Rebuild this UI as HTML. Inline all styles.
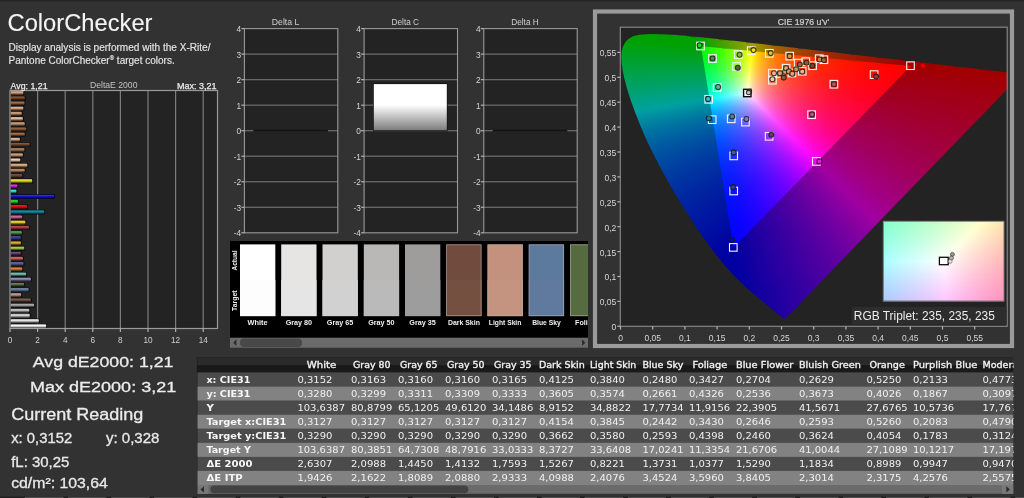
<!DOCTYPE html><html><head><meta charset="utf-8"><title>ColorChecker</title>
<style>html,body{margin:0;padding:0;background:#323232;overflow:hidden}svg{display:block;will-change:transform;font-family:"Liberation Sans", sans-serif}</style></head><body>
<svg width="1024" height="498" viewBox="0 0 1024 498" shape-rendering="auto">
<defs>
<linearGradient id="bsh" x1="0" y1="0" x2="0" y2="1"><stop offset="0" stop-color="#000" stop-opacity=".45"/><stop offset=".3" stop-color="#fff" stop-opacity=".08"/><stop offset=".5" stop-color="#000" stop-opacity="0"/><stop offset="1" stop-color="#000" stop-opacity=".75"/></linearGradient>
<linearGradient id="dc" x1="0" y1="0" x2="0" y2="1"><stop offset="0" stop-color="#fff"/><stop offset=".45" stop-color="#fff"/><stop offset="1" stop-color="#7c7c7c"/></linearGradient>
<linearGradient id="hdr" x1="0" y1="0" x2="0" y2="1"><stop offset="0" stop-color="#222"/><stop offset=".08" stop-color="#2a2a2a"/><stop offset=".5" stop-color="#2b2b2b"/><stop offset=".56" stop-color="#171717"/><stop offset="1" stop-color="#1b1b1b"/></linearGradient>
<clipPath id="plc"><rect x="620.3" y="27.2" width="386.9" height="299.1"/></clipPath>
<clipPath id="loc"><path d="M785.9 318.0L785.9 318.1L785.9 318.1L785.8 318.1L785.7 318.2L785.6 318.2L785.5 318.3L785.3 318.3L785.2 318.4L785.0 318.4L784.7 318.4L784.5 318.4L784.2 318.3L783.9 318.3L783.6 318.2L783.3 318.1L782.9 317.9L782.5 317.7L782.1 317.4L781.7 317.1L781.2 316.8L780.7 316.4L780.2 316.0L779.6 315.5L779.0 315.0L778.3 314.5L777.6 313.9L776.9 313.3L776.0 312.5L775.1 311.8L774.1 310.9L772.9 309.9L771.6 308.9L770.2 307.7L768.8 306.5L767.2 305.2L765.6 303.9L764.0 302.6L762.5 301.3L761.0 300.1L759.6 298.9L758.4 297.9L757.3 297.0L756.3 296.1L755.3 295.3L754.3 294.5L753.4 293.7L752.5 292.9L751.5 292.0L750.4 291.1L749.2 290.1L748.0 289.0L746.8 287.9L745.5 286.7L744.1 285.5L742.8 284.2L741.4 282.9L740.0 281.6L738.6 280.2L737.2 278.8L735.7 277.4L734.2 275.8L732.6 274.2L731.0 272.4L729.3 270.6L727.5 268.6L725.7 266.4L723.8 264.2L721.8 261.8L719.7 259.3L717.6 256.7L715.5 253.9L713.3 251.1L711.0 248.2L708.8 245.1L706.5 242.0L704.1 238.7L701.7 235.3L699.3 231.8L696.8 228.2L694.4 224.5L691.9 220.7L689.3 216.8L686.8 212.7L684.2 208.6L681.6 204.4L679.0 200.1L676.4 195.8L673.8 191.4L671.2 187.0L668.7 182.6L666.1 178.1L663.6 173.6L661.1 169.1L658.7 164.6L656.4 160.1L654.1 155.6L651.9 151.2L649.7 146.8L647.7 142.4L645.7 138.0L643.8 133.7L642.0 129.5L640.3 125.4L638.6 121.3L637.1 117.3L635.5 113.4L634.1 109.6L632.8 105.9L631.5 102.4L630.3 98.9L629.2 95.5L628.2 92.3L627.2 89.2L626.4 86.2L625.6 83.4L624.9 80.6L624.2 78.0L623.7 75.5L623.2 73.1L622.7 70.8L622.4 68.6L622.1 66.5L621.8 64.5L621.6 62.6L621.5 60.8L621.4 59.0L621.4 57.4L621.4 55.8L621.5 54.3L621.6 52.8L621.8 51.5L622.1 50.1L622.3 48.9L622.7 47.7L623.1 46.6L623.5 45.5L624.0 44.5L624.5 43.5L625.1 42.6L625.7 41.8L626.3 41.0L627.0 40.3L627.7 39.6L628.4 39.0L629.2 38.4L630.0 37.9L630.8 37.4L631.6 37.0L632.5 36.6L633.4 36.2L634.4 35.9L635.4 35.6L636.4 35.4L637.5 35.2L638.5 35.0L639.6 34.8L640.7 34.7L641.7 34.6L642.7 34.5L643.7 34.4L644.6 34.3L645.5 34.3L646.5 34.2L647.4 34.2L648.5 34.1L649.7 34.1L651.1 34.1L652.7 34.1L654.6 34.1L656.6 34.1L658.8 34.2L661.2 34.2L663.7 34.3L666.3 34.4L668.9 34.5L671.5 34.7L674.1 34.8L676.8 35.0L679.4 35.2L682.0 35.4L684.7 35.6L687.4 35.9L690.2 36.2L693.1 36.4L696.0 36.7L699.1 37.0L702.2 37.3L705.4 37.7L708.7 38.0L712.1 38.4L715.5 38.8L719.1 39.2L722.7 39.6L726.5 40.0L730.3 40.4L734.3 40.8L738.3 41.3L742.4 41.8L746.6 42.3L751.0 42.8L755.4 43.3L760.0 43.8L764.6 44.3L769.4 44.9L774.2 45.4L779.2 46.0L784.3 46.6L789.4 47.2L794.7 47.8L800.1 48.4L805.6 49.1L811.2 49.7L816.8 50.4L822.5 51.0L828.2 51.7L834.0 52.3L839.8 53.0L845.6 53.7L851.5 54.4L857.3 55.0L863.1 55.7L868.9 56.4L874.6 57.1L880.3 57.7L886.0 58.4L891.5 59.0L897.0 59.6L902.4 60.2L907.7 60.9L912.8 61.4L917.8 62.0L922.6 62.6L927.3 63.1L931.9 63.6L936.2 64.2L940.4 64.6L944.4 65.1L948.3 65.6L952.0 66.0L955.5 66.4L958.9 66.8L962.1 67.2L965.2 67.5L968.2 67.9L971.0 68.2L973.7 68.5L976.3 68.8L978.9 69.1L981.4 69.4L983.7 69.7L986.0 69.9L988.3 70.2L990.4 70.4L992.3 70.7L994.2 70.9L996.0 71.1L997.6 71.3L999.1 71.4L1000.5 71.6L1001.9 71.8L1003.2 71.9L1004.5 72.1L1005.9 72.2L1007.2 72.4L1008.6 72.5L1010.1 72.7L1011.7 72.9L1013.4 73.1L1015.3 73.3L1017.3 73.5L1019.5 73.8L1022.0 74.1Z"/></clipPath>
<linearGradient id="o0" gradientUnits="userSpaceOnUse" x1="632" x2="690" y1="0" y2="0"><stop offset="0.000" stop-color="#00a100"/><stop offset="1.000" stop-color="#00a100"/></linearGradient>
<linearGradient id="o1" gradientUnits="userSpaceOnUse" x1="627" x2="719" y1="0" y2="0"><stop offset="0.000" stop-color="#00a100"/><stop offset="0.783" stop-color="#00a100"/><stop offset="1.000" stop-color="#3aa100"/></linearGradient>
<linearGradient id="o2" gradientUnits="userSpaceOnUse" x1="624" x2="746" y1="0" y2="0"><stop offset="0.000" stop-color="#00a104"/><stop offset="0.139" stop-color="#00a100"/><stop offset="0.623" stop-color="#01a100"/><stop offset="1.000" stop-color="#8ba100"/></linearGradient>
<linearGradient id="o3" gradientUnits="userSpaceOnUse" x1="622" x2="772" y1="0" y2="0"><stop offset="0.000" stop-color="#00a10c"/><stop offset="0.333" stop-color="#00a100"/><stop offset="0.520" stop-color="#00a100"/><stop offset="0.753" stop-color="#69a100"/><stop offset="0.867" stop-color="#a0a100"/><stop offset="0.933" stop-color="#a18400"/><stop offset="1.000" stop-color="#a16e00"/></linearGradient>
<linearGradient id="o4" gradientUnits="userSpaceOnUse" x1="621" x2="798" y1="0" y2="0"><stop offset="0.000" stop-color="#00a112"/><stop offset="0.446" stop-color="#00a102"/><stop offset="0.633" stop-color="#62a100"/><stop offset="0.740" stop-color="#a1a000"/><stop offset="0.791" stop-color="#a18500"/><stop offset="0.853" stop-color="#a16d00"/><stop offset="0.921" stop-color="#a15900"/><stop offset="1.000" stop-color="#a14700"/></linearGradient>
<linearGradient id="o5" gradientUnits="userSpaceOnUse" x1="620" x2="824" y1="0" y2="0"><stop offset="0.000" stop-color="#00a118"/><stop offset="0.397" stop-color="#00a10b"/><stop offset="0.569" stop-color="#6ca100"/><stop offset="0.642" stop-color="#9ea100"/><stop offset="0.716" stop-color="#a17800"/><stop offset="0.789" stop-color="#a15c00"/><stop offset="0.882" stop-color="#a14400"/><stop offset="1.000" stop-color="#a12f00"/></linearGradient>
<linearGradient id="o6" gradientUnits="userSpaceOnUse" x1="620" x2="850" y1="0" y2="0"><stop offset="0.000" stop-color="#00a11e"/><stop offset="0.352" stop-color="#00a114"/><stop offset="0.491" stop-color="#62a10d"/><stop offset="0.570" stop-color="#9fa108"/><stop offset="0.643" stop-color="#a17200"/><stop offset="0.730" stop-color="#a15100"/><stop offset="0.848" stop-color="#a13500"/><stop offset="1.000" stop-color="#a11e00"/></linearGradient>
<linearGradient id="o7" gradientUnits="userSpaceOnUse" x1="620" x2="875" y1="0" y2="0"><stop offset="0.000" stop-color="#00a124"/><stop offset="0.322" stop-color="#00a11c"/><stop offset="0.451" stop-color="#69a117"/><stop offset="0.514" stop-color="#a0a113"/><stop offset="0.549" stop-color="#a1850e"/><stop offset="0.588" stop-color="#a16d09"/><stop offset="0.635" stop-color="#a15805"/><stop offset="0.686" stop-color="#a14701"/><stop offset="0.820" stop-color="#a12900"/><stop offset="1.000" stop-color="#a11100"/></linearGradient>
<linearGradient id="o8" gradientUnits="userSpaceOnUse" x1="620" x2="901" y1="0" y2="0"><stop offset="0.000" stop-color="#00a12a"/><stop offset="0.292" stop-color="#00a124"/><stop offset="0.402" stop-color="#62a121"/><stop offset="0.466" stop-color="#a1a01e"/><stop offset="0.502" stop-color="#a18117"/><stop offset="0.541" stop-color="#a16811"/><stop offset="0.587" stop-color="#a1530c"/><stop offset="0.644" stop-color="#a13f07"/><stop offset="0.790" stop-color="#a12000"/><stop offset="1.000" stop-color="#a10600"/></linearGradient>
<linearGradient id="o9" gradientUnits="userSpaceOnUse" x1="620" x2="927" y1="0" y2="0"><stop offset="0.000" stop-color="#00a130"/><stop offset="0.270" stop-color="#00a12d"/><stop offset="0.427" stop-color="#a19f29"/><stop offset="0.459" stop-color="#a18020"/><stop offset="0.502" stop-color="#a16318"/><stop offset="0.550" stop-color="#a14c11"/><stop offset="0.612" stop-color="#a1370b"/><stop offset="0.691" stop-color="#a12506"/><stop offset="0.785" stop-color="#a11501"/><stop offset="0.961" stop-color="#a10000"/><stop offset="1.000" stop-color="#a10000"/></linearGradient>
<linearGradient id="o10" gradientUnits="userSpaceOnUse" x1="620" x2="953" y1="0" y2="0"><stop offset="0.000" stop-color="#00a136"/><stop offset="0.249" stop-color="#00a135"/><stop offset="0.339" stop-color="#62a134"/><stop offset="0.390" stop-color="#a0a134"/><stop offset="0.393" stop-color="#a19e33"/><stop offset="0.429" stop-color="#a17927"/><stop offset="0.471" stop-color="#a15d1d"/><stop offset="0.526" stop-color="#a14415"/><stop offset="0.592" stop-color="#a12f0e"/><stop offset="0.706" stop-color="#a11706"/><stop offset="0.877" stop-color="#a10000"/><stop offset="1.000" stop-color="#a10000"/></linearGradient>
<linearGradient id="o11" gradientUnits="userSpaceOnUse" x1="620" x2="979" y1="0" y2="0"><stop offset="0.000" stop-color="#00a13c"/><stop offset="0.234" stop-color="#00a13d"/><stop offset="0.320" stop-color="#69a13e"/><stop offset="0.362" stop-color="#a1a13e"/><stop offset="0.398" stop-color="#a1782f"/><stop offset="0.443" stop-color="#a15823"/><stop offset="0.499" stop-color="#a13e19"/><stop offset="0.571" stop-color="#a12811"/><stop offset="0.663" stop-color="#a1150a"/><stop offset="0.805" stop-color="#a10002"/><stop offset="1.000" stop-color="#a10000"/></linearGradient>
<linearGradient id="o12" gradientUnits="userSpaceOnUse" x1="621" x2="1005" y1="0" y2="0"><stop offset="0.000" stop-color="#00a142"/><stop offset="0.216" stop-color="#00a146"/><stop offset="0.289" stop-color="#5fa148"/><stop offset="0.336" stop-color="#a1a049"/><stop offset="0.354" stop-color="#a1873e"/><stop offset="0.372" stop-color="#a17436"/><stop offset="0.417" stop-color="#a15428"/><stop offset="0.477" stop-color="#a1381c"/><stop offset="0.552" stop-color="#a12113"/><stop offset="0.742" stop-color="#a10006"/><stop offset="0.883" stop-color="#a10000"/><stop offset="1.000" stop-color="#a10000"/></linearGradient>
<linearGradient id="o13" gradientUnits="userSpaceOnUse" x1="621" x2="1007" y1="0" y2="0"><stop offset="0.000" stop-color="#00a148"/><stop offset="0.218" stop-color="#00a14e"/><stop offset="0.334" stop-color="#a19e53"/><stop offset="0.352" stop-color="#a18647"/><stop offset="0.371" stop-color="#a1733e"/><stop offset="0.415" stop-color="#a1522f"/><stop offset="0.474" stop-color="#a13722"/><stop offset="0.549" stop-color="#a12017"/><stop offset="0.731" stop-color="#a1000a"/><stop offset="0.998" stop-color="#a10000"/></linearGradient>
<linearGradient id="o14" gradientUnits="userSpaceOnUse" x1="622" x2="1007" y1="0" y2="0"><stop offset="0.000" stop-color="#00a14e"/><stop offset="0.216" stop-color="#00a157"/><stop offset="0.288" stop-color="#62a15c"/><stop offset="0.330" stop-color="#a0a15f"/><stop offset="0.333" stop-color="#a19d5d"/><stop offset="0.351" stop-color="#a18550"/><stop offset="0.369" stop-color="#a17246"/><stop offset="0.413" stop-color="#a15135"/><stop offset="0.473" stop-color="#a13527"/><stop offset="0.548" stop-color="#a11f1b"/><stop offset="0.722" stop-color="#a1000d"/><stop offset="0.998" stop-color="#a10002"/></linearGradient>
<linearGradient id="o15" gradientUnits="userSpaceOnUse" x1="622" x2="1007" y1="0" y2="0"><stop offset="0.000" stop-color="#00a154"/><stop offset="0.218" stop-color="#00a160"/><stop offset="0.294" stop-color="#6aa166"/><stop offset="0.330" stop-color="#a1a06a"/><stop offset="0.348" stop-color="#a1875b"/><stop offset="0.366" stop-color="#a17350"/><stop offset="0.410" stop-color="#a1513c"/><stop offset="0.470" stop-color="#a1352c"/><stop offset="0.546" stop-color="#a11f20"/><stop offset="0.714" stop-color="#a10010"/><stop offset="0.998" stop-color="#a10004"/></linearGradient>
<linearGradient id="o16" gradientUnits="userSpaceOnUse" x1="623" x2="1007" y1="0" y2="0"><stop offset="0.000" stop-color="#00a15a"/><stop offset="0.216" stop-color="#00a169"/><stop offset="0.284" stop-color="#5fa170"/><stop offset="0.328" stop-color="#a19f75"/><stop offset="0.344" stop-color="#a18967"/><stop offset="0.362" stop-color="#a1745a"/><stop offset="0.409" stop-color="#a15043"/><stop offset="0.469" stop-color="#a13431"/><stop offset="0.544" stop-color="#a11e24"/><stop offset="0.709" stop-color="#a10014"/><stop offset="0.998" stop-color="#a10006"/></linearGradient>
<linearGradient id="o17" gradientUnits="userSpaceOnUse" x1="624" x2="1007" y1="0" y2="0"><stop offset="0.000" stop-color="#00a161"/><stop offset="0.217" stop-color="#00a172"/><stop offset="0.290" stop-color="#6aa17c"/><stop offset="0.324" stop-color="#9fa182"/><stop offset="0.326" stop-color="#a19e80"/><stop offset="0.342" stop-color="#a18770"/><stop offset="0.360" stop-color="#a17362"/><stop offset="0.407" stop-color="#a14f49"/><stop offset="0.467" stop-color="#a13336"/><stop offset="0.543" stop-color="#a11d28"/><stop offset="0.700" stop-color="#a10017"/><stop offset="0.998" stop-color="#a10008"/></linearGradient>
<linearGradient id="o18" gradientUnits="userSpaceOnUse" x1="625" x2="1007" y1="0" y2="0"><stop offset="0.000" stop-color="#00a167"/><stop offset="0.215" stop-color="#00a17b"/><stop offset="0.283" stop-color="#62a186"/><stop offset="0.322" stop-color="#a0a18e"/><stop offset="0.338" stop-color="#a1897c"/><stop offset="0.356" stop-color="#a1746c"/><stop offset="0.403" stop-color="#a14f51"/><stop offset="0.463" stop-color="#a1323c"/><stop offset="0.539" stop-color="#a11c2c"/><stop offset="0.691" stop-color="#a1001a"/><stop offset="0.998" stop-color="#a1000a"/></linearGradient>
<linearGradient id="o19" gradientUnits="userSpaceOnUse" x1="626" x2="1007" y1="0" y2="0"><stop offset="0.000" stop-color="#00a16e"/><stop offset="0.215" stop-color="#00a185"/><stop offset="0.320" stop-color="#a1a099"/><stop offset="0.336" stop-color="#a18886"/><stop offset="0.354" stop-color="#a17375"/><stop offset="0.402" stop-color="#a14e57"/><stop offset="0.462" stop-color="#a13141"/><stop offset="0.538" stop-color="#a11b30"/><stop offset="0.683" stop-color="#a1001e"/><stop offset="0.998" stop-color="#a1000c"/></linearGradient>
<linearGradient id="o20" gradientUnits="userSpaceOnUse" x1="627" x2="1005" y1="0" y2="0"><stop offset="0.000" stop-color="#00a175"/><stop offset="0.214" stop-color="#00a18f"/><stop offset="0.296" stop-color="#7ba1a1"/><stop offset="0.323" stop-color="#a09aa1"/><stop offset="0.339" stop-color="#a1838d"/><stop offset="0.357" stop-color="#a16e7b"/><stop offset="0.405" stop-color="#a14b5c"/><stop offset="0.466" stop-color="#a12f45"/><stop offset="0.545" stop-color="#a11833"/><stop offset="0.677" stop-color="#a10022"/><stop offset="1.000" stop-color="#a1000e"/></linearGradient>
<linearGradient id="o21" gradientUnits="userSpaceOnUse" x1="628" x2="1002" y1="0" y2="0"><stop offset="0.000" stop-color="#00a17c"/><stop offset="0.118" stop-color="#00a189"/><stop offset="0.217" stop-color="#00a19a"/><stop offset="0.249" stop-color="#32a1a1"/><stop offset="0.332" stop-color="#a18ca1"/><stop offset="0.350" stop-color="#a1758b"/><stop offset="0.369" stop-color="#a1637b"/><stop offset="0.417" stop-color="#a1435e"/><stop offset="0.479" stop-color="#a12a47"/><stop offset="0.561" stop-color="#a11434"/><stop offset="0.674" stop-color="#a10025"/><stop offset="1.000" stop-color="#a10010"/></linearGradient>
<linearGradient id="o22" gradientUnits="userSpaceOnUse" x1="629" x2="999" y1="0" y2="0"><stop offset="0.000" stop-color="#00a183"/><stop offset="0.108" stop-color="#00a191"/><stop offset="0.200" stop-color="#00a1a1"/><stop offset="0.216" stop-color="#009da1"/><stop offset="0.254" stop-color="#3595a1"/><stop offset="0.341" stop-color="#a180a1"/><stop offset="0.378" stop-color="#a15b7c"/><stop offset="0.430" stop-color="#a13d5f"/><stop offset="0.495" stop-color="#a12548"/><stop offset="0.581" stop-color="#a11035"/><stop offset="0.670" stop-color="#a10029"/><stop offset="0.814" stop-color="#a1001d"/><stop offset="1.000" stop-color="#a10013"/></linearGradient>
<linearGradient id="o23" gradientUnits="userSpaceOnUse" x1="630" x2="996" y1="0" y2="0"><stop offset="0.000" stop-color="#00a18a"/><stop offset="0.150" stop-color="#00a1a1"/><stop offset="0.219" stop-color="#0093a1"/><stop offset="0.254" stop-color="#318ca1"/><stop offset="0.350" stop-color="#a175a1"/><stop offset="0.391" stop-color="#a1527c"/><stop offset="0.445" stop-color="#a1355e"/><stop offset="0.516" stop-color="#a11e47"/><stop offset="0.607" stop-color="#a10b35"/><stop offset="0.667" stop-color="#a1002d"/><stop offset="0.811" stop-color="#a10020"/><stop offset="1.000" stop-color="#a10015"/></linearGradient>
<linearGradient id="o24" gradientUnits="userSpaceOnUse" x1="631" x2="993" y1="0" y2="0"><stop offset="0.000" stop-color="#00a192"/><stop offset="0.099" stop-color="#00a1a1"/><stop offset="0.218" stop-color="#008aa1"/><stop offset="0.260" stop-color="#3482a1"/><stop offset="0.359" stop-color="#a16ba1"/><stop offset="0.381" stop-color="#a1588c"/><stop offset="0.406" stop-color="#a1487a"/><stop offset="0.470" stop-color="#a12b5b"/><stop offset="0.552" stop-color="#a11544"/><stop offset="0.663" stop-color="#a10031"/><stop offset="0.809" stop-color="#a10023"/><stop offset="1.000" stop-color="#a10017"/></linearGradient>
<linearGradient id="o25" gradientUnits="userSpaceOnUse" x1="632" x2="990" y1="0" y2="0"><stop offset="0.000" stop-color="#00a19a"/><stop offset="0.047" stop-color="#00a1a1"/><stop offset="0.221" stop-color="#0182a1"/><stop offset="0.260" stop-color="#307aa1"/><stop offset="0.369" stop-color="#a162a1"/><stop offset="0.416" stop-color="#a1427b"/><stop offset="0.478" stop-color="#a1285e"/><stop offset="0.556" stop-color="#a11447"/><stop offset="0.659" stop-color="#a10035"/><stop offset="0.807" stop-color="#a10026"/><stop offset="1.000" stop-color="#a10019"/></linearGradient>
<linearGradient id="o26" gradientUnits="userSpaceOnUse" x1="633" x2="987" y1="0" y2="0"><stop offset="0.000" stop-color="#00a0a1"/><stop offset="0.220" stop-color="#007ba1"/><stop offset="0.268" stop-color="#3571a1"/><stop offset="0.379" stop-color="#a159a1"/><stop offset="0.424" stop-color="#a13d7e"/><stop offset="0.483" stop-color="#a12662"/><stop offset="0.559" stop-color="#a1124b"/><stop offset="0.655" stop-color="#a10039"/><stop offset="0.805" stop-color="#a10029"/><stop offset="1.000" stop-color="#a1001c"/></linearGradient>
<linearGradient id="o27" gradientUnits="userSpaceOnUse" x1="634" x2="985" y1="0" y2="0"><stop offset="0.000" stop-color="#0098a1"/><stop offset="0.222" stop-color="#0174a1"/><stop offset="0.268" stop-color="#326ba1"/><stop offset="0.387" stop-color="#a151a1"/><stop offset="0.433" stop-color="#a1387f"/><stop offset="0.490" stop-color="#a12365"/><stop offset="0.561" stop-color="#a1114f"/><stop offset="0.650" stop-color="#a1003e"/><stop offset="0.801" stop-color="#a1002c"/><stop offset="1.000" stop-color="#a1001e"/></linearGradient>
<linearGradient id="o28" gradientUnits="userSpaceOnUse" x1="635" x2="982" y1="0" y2="0"><stop offset="0.000" stop-color="#0091a1"/><stop offset="0.222" stop-color="#006da1"/><stop offset="0.274" stop-color="#3464a1"/><stop offset="0.398" stop-color="#a14aa1"/><stop offset="0.441" stop-color="#a13482"/><stop offset="0.496" stop-color="#a12069"/><stop offset="0.562" stop-color="#a11054"/><stop offset="0.646" stop-color="#a10043"/><stop offset="0.798" stop-color="#a1002f"/><stop offset="1.000" stop-color="#a10020"/></linearGradient>
<linearGradient id="o29" gradientUnits="userSpaceOnUse" x1="636" x2="979" y1="0" y2="0"><stop offset="0.000" stop-color="#008aa1"/><stop offset="0.224" stop-color="#0167a1"/><stop offset="0.274" stop-color="#315ea1"/><stop offset="0.408" stop-color="#a143a1"/><stop offset="0.452" stop-color="#a12f83"/><stop offset="0.501" stop-color="#a11e6c"/><stop offset="0.566" stop-color="#a10f58"/><stop offset="0.641" stop-color="#a10047"/><stop offset="0.793" stop-color="#a10033"/><stop offset="1.000" stop-color="#a10023"/></linearGradient>
<linearGradient id="o30" gradientUnits="userSpaceOnUse" x1="638" x2="976" y1="0" y2="0"><stop offset="0.000" stop-color="#0084a1"/><stop offset="0.222" stop-color="#0062a1"/><stop offset="0.278" stop-color="#3358a1"/><stop offset="0.417" stop-color="#a13da1"/><stop offset="0.456" stop-color="#a12c87"/><stop offset="0.500" stop-color="#a11e72"/><stop offset="0.553" stop-color="#a11160"/><stop offset="0.615" stop-color="#a10450"/><stop offset="0.639" stop-color="#a1004c"/><stop offset="0.778" stop-color="#a10037"/><stop offset="1.000" stop-color="#a10025"/></linearGradient>
<linearGradient id="o31" gradientUnits="userSpaceOnUse" x1="639" x2="973" y1="0" y2="0"><stop offset="0.000" stop-color="#007ea1"/><stop offset="0.225" stop-color="#015da1"/><stop offset="0.281" stop-color="#3353a1"/><stop offset="0.428" stop-color="#a137a1"/><stop offset="0.467" stop-color="#a12788"/><stop offset="0.512" stop-color="#a11a73"/><stop offset="0.563" stop-color="#a10e62"/><stop offset="0.626" stop-color="#a10253"/><stop offset="0.784" stop-color="#a1003a"/><stop offset="1.000" stop-color="#a10027"/></linearGradient>
<linearGradient id="o32" gradientUnits="userSpaceOnUse" x1="640" x2="970" y1="0" y2="0"><stop offset="0.000" stop-color="#0078a1"/><stop offset="0.224" stop-color="#0058a1"/><stop offset="0.285" stop-color="#324ea1"/><stop offset="0.439" stop-color="#a131a1"/><stop offset="0.479" stop-color="#a12289"/><stop offset="0.524" stop-color="#a11675"/><stop offset="0.636" stop-color="#a10055"/><stop offset="0.791" stop-color="#a1003c"/><stop offset="1.000" stop-color="#a1002a"/></linearGradient>
<linearGradient id="o33" gradientUnits="userSpaceOnUse" x1="641" x2="967" y1="0" y2="0"><stop offset="0.000" stop-color="#0073a1"/><stop offset="0.227" stop-color="#0153a1"/><stop offset="0.288" stop-color="#3249a1"/><stop offset="0.451" stop-color="#a12ca1"/><stop offset="0.491" stop-color="#a11e8a"/><stop offset="0.534" stop-color="#a11377"/><stop offset="0.623" stop-color="#a1005c"/><stop offset="0.647" stop-color="#a10057"/><stop offset="0.798" stop-color="#a1003f"/><stop offset="1.000" stop-color="#a1002d"/></linearGradient>
<linearGradient id="o34" gradientUnits="userSpaceOnUse" x1="643" x2="964" y1="0" y2="0"><stop offset="0.000" stop-color="#006ea1"/><stop offset="0.224" stop-color="#004fa1"/><stop offset="0.290" stop-color="#3145a1"/><stop offset="0.461" stop-color="#a126a1"/><stop offset="0.502" stop-color="#a11a8a"/><stop offset="0.545" stop-color="#a10f78"/><stop offset="0.620" stop-color="#a10061"/><stop offset="0.657" stop-color="#a10059"/><stop offset="0.804" stop-color="#a10042"/><stop offset="1.000" stop-color="#a1002f"/></linearGradient>
<linearGradient id="o35" gradientUnits="userSpaceOnUse" x1="644" x2="961" y1="0" y2="0"><stop offset="0.000" stop-color="#0069a1"/><stop offset="0.227" stop-color="#014ba1"/><stop offset="0.293" stop-color="#3141a1"/><stop offset="0.473" stop-color="#a121a1"/><stop offset="0.511" stop-color="#a1178c"/><stop offset="0.555" stop-color="#a10c7a"/><stop offset="0.615" stop-color="#a10068"/><stop offset="0.666" stop-color="#a1005c"/><stop offset="0.811" stop-color="#a10044"/><stop offset="1.000" stop-color="#a10032"/></linearGradient>
<linearGradient id="o36" gradientUnits="userSpaceOnUse" x1="645" x2="958" y1="0" y2="0"><stop offset="0.000" stop-color="#0065a1"/><stop offset="0.227" stop-color="#0047a1"/><stop offset="0.300" stop-color="#333ca1"/><stop offset="0.486" stop-color="#a11da1"/><stop offset="0.543" stop-color="#a10e85"/><stop offset="0.610" stop-color="#a1006e"/><stop offset="0.677" stop-color="#a1005e"/><stop offset="0.818" stop-color="#a10047"/><stop offset="1.000" stop-color="#a10035"/></linearGradient>
<linearGradient id="o37" gradientUnits="userSpaceOnUse" x1="647" x2="955" y1="0" y2="0"><stop offset="0.000" stop-color="#0060a1"/><stop offset="0.224" stop-color="#0044a1"/><stop offset="0.305" stop-color="#3438a1"/><stop offset="0.497" stop-color="#a118a1"/><stop offset="0.545" stop-color="#a10c89"/><stop offset="0.604" stop-color="#a10075"/><stop offset="0.688" stop-color="#a1005f"/><stop offset="0.825" stop-color="#a10049"/><stop offset="1.000" stop-color="#a10037"/></linearGradient>
<linearGradient id="o38" gradientUnits="userSpaceOnUse" x1="648" x2="953" y1="0" y2="0"><stop offset="0.000" stop-color="#005ca1"/><stop offset="0.226" stop-color="#0040a1"/><stop offset="0.305" stop-color="#3235a1"/><stop offset="0.508" stop-color="#a114a1"/><stop offset="0.597" stop-color="#a1007c"/><stop offset="0.695" stop-color="#a10062"/><stop offset="0.830" stop-color="#a1004c"/><stop offset="1.000" stop-color="#a1003a"/></linearGradient>
<linearGradient id="o39" gradientUnits="userSpaceOnUse" x1="649" x2="950" y1="0" y2="0"><stop offset="0.000" stop-color="#0058a1"/><stop offset="0.226" stop-color="#003da1"/><stop offset="0.316" stop-color="#3531a1"/><stop offset="0.522" stop-color="#a110a1"/><stop offset="0.591" stop-color="#a10083"/><stop offset="0.708" stop-color="#a10064"/><stop offset="0.837" stop-color="#a1004e"/><stop offset="1.000" stop-color="#a1003d"/></linearGradient>
<linearGradient id="o40" gradientUnits="userSpaceOnUse" x1="651" x2="947" y1="0" y2="0"><stop offset="0.000" stop-color="#0054a1"/><stop offset="0.226" stop-color="#003aa1"/><stop offset="0.311" stop-color="#312fa1"/><stop offset="0.534" stop-color="#a10ba1"/><stop offset="0.584" stop-color="#a1008b"/><stop offset="0.645" stop-color="#a10077"/><stop offset="0.716" stop-color="#a10066"/><stop offset="0.841" stop-color="#a10051"/><stop offset="1.000" stop-color="#a10040"/></linearGradient>
<linearGradient id="o41" gradientUnits="userSpaceOnUse" x1="652" x2="944" y1="0" y2="0"><stop offset="0.000" stop-color="#0051a1"/><stop offset="0.226" stop-color="#0037a1"/><stop offset="0.322" stop-color="#342ba1"/><stop offset="0.548" stop-color="#a107a1"/><stop offset="0.582" stop-color="#a10092"/><stop offset="0.647" stop-color="#a1007c"/><stop offset="0.726" stop-color="#a10069"/><stop offset="0.849" stop-color="#a10054"/><stop offset="1.000" stop-color="#a10043"/></linearGradient>
<linearGradient id="o42" gradientUnits="userSpaceOnUse" x1="654" x2="941" y1="0" y2="0"><stop offset="0.000" stop-color="#004da1"/><stop offset="0.226" stop-color="#0034a1"/><stop offset="0.317" stop-color="#3129a1"/><stop offset="0.561" stop-color="#a103a1"/><stop offset="0.641" stop-color="#a10083"/><stop offset="0.739" stop-color="#a1006a"/><stop offset="0.857" stop-color="#a10056"/><stop offset="1.000" stop-color="#a10046"/></linearGradient>
<linearGradient id="o43" gradientUnits="userSpaceOnUse" x1="656" x2="938" y1="0" y2="0"><stop offset="0.000" stop-color="#004aa1"/><stop offset="0.223" stop-color="#0032a1"/><stop offset="0.326" stop-color="#3425a1"/><stop offset="0.574" stop-color="#a100a1"/><stop offset="0.652" stop-color="#a10085"/><stop offset="0.748" stop-color="#a1006d"/><stop offset="0.862" stop-color="#a10059"/><stop offset="1.000" stop-color="#a10049"/></linearGradient>
<linearGradient id="o44" gradientUnits="userSpaceOnUse" x1="657" x2="935" y1="0" y2="0"><stop offset="0.000" stop-color="#0047a1"/><stop offset="0.227" stop-color="#002fa1"/><stop offset="0.324" stop-color="#3023a1"/><stop offset="0.558" stop-color="#9300a1"/><stop offset="0.590" stop-color="#a100a1"/><stop offset="0.665" stop-color="#a10086"/><stop offset="0.759" stop-color="#a1006f"/><stop offset="0.871" stop-color="#a1005c"/><stop offset="1.000" stop-color="#a1004c"/></linearGradient>
<linearGradient id="o45" gradientUnits="userSpaceOnUse" x1="659" x2="932" y1="0" y2="0"><stop offset="0.000" stop-color="#0043a1"/><stop offset="0.223" stop-color="#002da1"/><stop offset="0.326" stop-color="#3021a1"/><stop offset="0.553" stop-color="#8c00a1"/><stop offset="0.604" stop-color="#a100a1"/><stop offset="0.681" stop-color="#a10087"/><stop offset="0.769" stop-color="#a10072"/><stop offset="0.875" stop-color="#a1005f"/><stop offset="1.000" stop-color="#a1004f"/></linearGradient>
<linearGradient id="o46" gradientUnits="userSpaceOnUse" x1="660" x2="929" y1="0" y2="0"><stop offset="0.000" stop-color="#0041a1"/><stop offset="0.227" stop-color="#002aa1"/><stop offset="0.320" stop-color="#2b20a1"/><stop offset="0.546" stop-color="#8400a1"/><stop offset="0.621" stop-color="#a100a1"/><stop offset="0.695" stop-color="#a10088"/><stop offset="0.781" stop-color="#a10074"/><stop offset="0.881" stop-color="#a10062"/><stop offset="1.000" stop-color="#a10053"/></linearGradient>
<linearGradient id="o47" gradientUnits="userSpaceOnUse" x1="662" x2="926" y1="0" y2="0"><stop offset="0.000" stop-color="#003ea1"/><stop offset="0.223" stop-color="#0028a1"/><stop offset="0.322" stop-color="#2b1da1"/><stop offset="0.538" stop-color="#7c00a1"/><stop offset="0.636" stop-color="#a100a1"/><stop offset="0.708" stop-color="#a1008a"/><stop offset="0.792" stop-color="#a10076"/><stop offset="1.000" stop-color="#a10056"/></linearGradient>
<linearGradient id="o48" gradientUnits="userSpaceOnUse" x1="664" x2="924" y1="0" y2="0"><stop offset="0.000" stop-color="#003ba1"/><stop offset="0.223" stop-color="#0026a1"/><stop offset="0.312" stop-color="#271ca1"/><stop offset="0.527" stop-color="#7500a1"/><stop offset="0.650" stop-color="#a100a1"/><stop offset="0.719" stop-color="#a1008b"/><stop offset="0.800" stop-color="#a10078"/><stop offset="1.000" stop-color="#a1005a"/></linearGradient>
<linearGradient id="o49" gradientUnits="userSpaceOnUse" x1="665" x2="921" y1="0" y2="0"><stop offset="0.000" stop-color="#0038a1"/><stop offset="0.223" stop-color="#0024a1"/><stop offset="0.320" stop-color="#281aa1"/><stop offset="0.520" stop-color="#6e00a1"/><stop offset="0.668" stop-color="#a100a1"/><stop offset="0.812" stop-color="#a1007b"/><stop offset="1.000" stop-color="#a1005d"/></linearGradient>
<linearGradient id="o50" gradientUnits="userSpaceOnUse" x1="667" x2="918" y1="0" y2="0"><stop offset="0.000" stop-color="#0035a1"/><stop offset="0.223" stop-color="#0021a1"/><stop offset="0.311" stop-color="#2419a1"/><stop offset="0.510" stop-color="#6700a1"/><stop offset="0.685" stop-color="#a100a1"/><stop offset="0.825" stop-color="#a1007d"/><stop offset="1.000" stop-color="#a10061"/></linearGradient>
<linearGradient id="o51" gradientUnits="userSpaceOnUse" x1="669" x2="915" y1="0" y2="0"><stop offset="0.000" stop-color="#0033a1"/><stop offset="0.220" stop-color="#0020a1"/><stop offset="0.313" stop-color="#2416a1"/><stop offset="0.500" stop-color="#6100a1"/><stop offset="0.703" stop-color="#a100a1"/><stop offset="0.833" stop-color="#a10080"/><stop offset="1.000" stop-color="#a10065"/></linearGradient>
<linearGradient id="o52" gradientUnits="userSpaceOnUse" x1="671" x2="912" y1="0" y2="0"><stop offset="0.000" stop-color="#0030a1"/><stop offset="0.220" stop-color="#001da1"/><stop offset="0.303" stop-color="#2016a1"/><stop offset="0.490" stop-color="#5a00a1"/><stop offset="0.722" stop-color="#a100a1"/><stop offset="0.846" stop-color="#a10082"/><stop offset="1.000" stop-color="#a10069"/></linearGradient>
<linearGradient id="o53" gradientUnits="userSpaceOnUse" x1="672" x2="909" y1="0" y2="0"><stop offset="0.000" stop-color="#002ea1"/><stop offset="0.219" stop-color="#001ca1"/><stop offset="0.308" stop-color="#2014a1"/><stop offset="0.481" stop-color="#5400a1"/><stop offset="0.743" stop-color="#a100a1"/><stop offset="0.861" stop-color="#a10084"/><stop offset="1.000" stop-color="#a1006d"/></linearGradient>
<linearGradient id="o54" gradientUnits="userSpaceOnUse" x1="674" x2="906" y1="0" y2="0"><stop offset="0.000" stop-color="#002ba1"/><stop offset="0.220" stop-color="#001aa1"/><stop offset="0.302" stop-color="#1d12a1"/><stop offset="0.470" stop-color="#4f00a1"/><stop offset="0.763" stop-color="#a100a1"/><stop offset="0.871" stop-color="#a10087"/><stop offset="1.000" stop-color="#a10071"/></linearGradient>
<linearGradient id="o55" gradientUnits="userSpaceOnUse" x1="676" x2="903" y1="0" y2="0"><stop offset="0.000" stop-color="#0029a1"/><stop offset="0.216" stop-color="#0018a1"/><stop offset="0.300" stop-color="#1c11a1"/><stop offset="0.458" stop-color="#4900a1"/><stop offset="0.784" stop-color="#a100a1"/><stop offset="0.885" stop-color="#a10089"/><stop offset="1.000" stop-color="#a10076"/></linearGradient>
<linearGradient id="o56" gradientUnits="userSpaceOnUse" x1="678" x2="900" y1="0" y2="0"><stop offset="0.000" stop-color="#0027a1"/><stop offset="0.216" stop-color="#0016a1"/><stop offset="0.293" stop-color="#1a10a1"/><stop offset="0.450" stop-color="#4500a1"/><stop offset="0.806" stop-color="#a100a1"/><stop offset="1.000" stop-color="#a1007a"/></linearGradient>
<linearGradient id="o57" gradientUnits="userSpaceOnUse" x1="680" x2="897" y1="0" y2="0"><stop offset="0.000" stop-color="#0025a1"/><stop offset="0.212" stop-color="#0015a1"/><stop offset="0.290" stop-color="#190ea1"/><stop offset="0.438" stop-color="#4000a1"/><stop offset="0.829" stop-color="#a100a1"/><stop offset="1.000" stop-color="#a1007f"/></linearGradient>
<linearGradient id="o58" gradientUnits="userSpaceOnUse" x1="681" x2="895" y1="0" y2="0"><stop offset="0.000" stop-color="#0023a1"/><stop offset="0.215" stop-color="#0013a1"/><stop offset="0.285" stop-color="#160da1"/><stop offset="0.425" stop-color="#3b00a1"/><stop offset="0.850" stop-color="#a100a1"/><stop offset="1.000" stop-color="#a10083"/></linearGradient>
<linearGradient id="o59" gradientUnits="userSpaceOnUse" x1="683" x2="892" y1="0" y2="0"><stop offset="0.000" stop-color="#0021a1"/><stop offset="0.211" stop-color="#0012a1"/><stop offset="0.411" stop-color="#3600a1"/><stop offset="0.876" stop-color="#a100a1"/><stop offset="1.000" stop-color="#a10088"/></linearGradient>
<linearGradient id="o60" gradientUnits="userSpaceOnUse" x1="685" x2="889" y1="0" y2="0"><stop offset="0.000" stop-color="#001ea1"/><stop offset="0.211" stop-color="#0010a1"/><stop offset="0.397" stop-color="#3100a1"/><stop offset="0.902" stop-color="#a100a1"/><stop offset="1.000" stop-color="#a1008e"/></linearGradient>
<linearGradient id="o61" gradientUnits="userSpaceOnUse" x1="687" x2="886" y1="0" y2="0"><stop offset="0.000" stop-color="#001ca1"/><stop offset="0.206" stop-color="#000fa1"/><stop offset="0.382" stop-color="#2c00a1"/><stop offset="0.930" stop-color="#a100a1"/><stop offset="1.000" stop-color="#a10093"/></linearGradient>
<linearGradient id="o62" gradientUnits="userSpaceOnUse" x1="689" x2="883" y1="0" y2="0"><stop offset="0.000" stop-color="#001aa1"/><stop offset="0.206" stop-color="#000da1"/><stop offset="0.366" stop-color="#2800a1"/><stop offset="0.959" stop-color="#a100a1"/><stop offset="1.000" stop-color="#a10099"/></linearGradient>
<linearGradient id="o63" gradientUnits="userSpaceOnUse" x1="691" x2="880" y1="0" y2="0"><stop offset="0.000" stop-color="#0018a1"/><stop offset="0.201" stop-color="#000ca1"/><stop offset="0.349" stop-color="#2300a1"/><stop offset="1.000" stop-color="#a1009f"/></linearGradient>
<linearGradient id="o64" gradientUnits="userSpaceOnUse" x1="693" x2="877" y1="0" y2="0"><stop offset="0.000" stop-color="#0017a1"/><stop offset="0.201" stop-color="#010aa1"/><stop offset="0.332" stop-color="#1f00a1"/><stop offset="1.000" stop-color="#9d00a1"/></linearGradient>
<linearGradient id="o65" gradientUnits="userSpaceOnUse" x1="695" x2="874" y1="0" y2="0"><stop offset="0.000" stop-color="#0015a1"/><stop offset="0.196" stop-color="#0009a1"/><stop offset="0.313" stop-color="#1a00a1"/><stop offset="1.000" stop-color="#9700a1"/></linearGradient>
<linearGradient id="o66" gradientUnits="userSpaceOnUse" x1="697" x2="871" y1="0" y2="0"><stop offset="0.000" stop-color="#0013a1"/><stop offset="0.195" stop-color="#0107a1"/><stop offset="0.293" stop-color="#1600a1"/><stop offset="1.000" stop-color="#9100a1"/></linearGradient>
<linearGradient id="o67" gradientUnits="userSpaceOnUse" x1="699" x2="868" y1="0" y2="0"><stop offset="0.000" stop-color="#0011a1"/><stop offset="0.189" stop-color="#0006a1"/><stop offset="0.278" stop-color="#1300a1"/><stop offset="1.000" stop-color="#8c00a1"/></linearGradient>
<linearGradient id="o68" gradientUnits="userSpaceOnUse" x1="701" x2="865" y1="0" y2="0"><stop offset="0.000" stop-color="#000fa1"/><stop offset="0.189" stop-color="#0105a1"/><stop offset="0.250" stop-color="#0e00a1"/><stop offset="0.427" stop-color="#2c00a1"/><stop offset="1.000" stop-color="#8600a1"/></linearGradient>
<linearGradient id="o69" gradientUnits="userSpaceOnUse" x1="703" x2="863" y1="0" y2="0"><stop offset="0.000" stop-color="#000da1"/><stop offset="0.181" stop-color="#0003a1"/><stop offset="0.231" stop-color="#0b00a1"/><stop offset="0.419" stop-color="#2a00a1"/><stop offset="1.000" stop-color="#8200a1"/></linearGradient>
<linearGradient id="o70" gradientUnits="userSpaceOnUse" x1="705" x2="860" y1="0" y2="0"><stop offset="0.000" stop-color="#000ca1"/><stop offset="0.181" stop-color="#0102a1"/><stop offset="0.426" stop-color="#2a00a1"/><stop offset="1.000" stop-color="#7d00a1"/></linearGradient>
<linearGradient id="o71" gradientUnits="userSpaceOnUse" x1="708" x2="857" y1="0" y2="0"><stop offset="0.000" stop-color="#000aa1"/><stop offset="0.168" stop-color="#0000a1"/><stop offset="0.416" stop-color="#2800a1"/><stop offset="1.000" stop-color="#7800a1"/></linearGradient>
<linearGradient id="o72" gradientUnits="userSpaceOnUse" x1="710" x2="854" y1="0" y2="0"><stop offset="0.000" stop-color="#0008a1"/><stop offset="0.167" stop-color="#0100a1"/><stop offset="0.417" stop-color="#2700a1"/><stop offset="1.000" stop-color="#7400a1"/></linearGradient>
<linearGradient id="o73" gradientUnits="userSpaceOnUse" x1="712" x2="851" y1="0" y2="0"><stop offset="0.000" stop-color="#0006a1"/><stop offset="0.158" stop-color="#0000a1"/><stop offset="0.410" stop-color="#2500a1"/><stop offset="1.000" stop-color="#6f00a1"/></linearGradient>
<linearGradient id="o74" gradientUnits="userSpaceOnUse" x1="715" x2="848" y1="0" y2="0"><stop offset="0.000" stop-color="#0004a1"/><stop offset="0.150" stop-color="#0100a1"/><stop offset="0.414" stop-color="#2500a1"/><stop offset="1.000" stop-color="#6a00a1"/></linearGradient>
<linearGradient id="o75" gradientUnits="userSpaceOnUse" x1="717" x2="845" y1="0" y2="0"><stop offset="0.000" stop-color="#0002a1"/><stop offset="0.141" stop-color="#0000a1"/><stop offset="0.406" stop-color="#2400a1"/><stop offset="1.000" stop-color="#6600a1"/></linearGradient>
<linearGradient id="o76" gradientUnits="userSpaceOnUse" x1="719" x2="842" y1="0" y2="0"><stop offset="0.000" stop-color="#0000a1"/><stop offset="0.138" stop-color="#0100a1"/><stop offset="0.407" stop-color="#2300a1"/><stop offset="1.000" stop-color="#6200a1"/></linearGradient>
<linearGradient id="o77" gradientUnits="userSpaceOnUse" x1="722" x2="839" y1="0" y2="0"><stop offset="0.000" stop-color="#0000a1"/><stop offset="0.120" stop-color="#0000a1"/><stop offset="0.393" stop-color="#2100a1"/><stop offset="1.000" stop-color="#5e00a1"/></linearGradient>
<linearGradient id="o78" gradientUnits="userSpaceOnUse" x1="724" x2="836" y1="0" y2="0"><stop offset="0.000" stop-color="#0000a1"/><stop offset="0.107" stop-color="#0000a1"/><stop offset="0.402" stop-color="#2100a1"/><stop offset="1.000" stop-color="#5a00a1"/></linearGradient>
<linearGradient id="o79" gradientUnits="userSpaceOnUse" x1="727" x2="834" y1="0" y2="0"><stop offset="0.000" stop-color="#0000a1"/><stop offset="0.093" stop-color="#0000a1"/><stop offset="0.374" stop-color="#1e00a1"/><stop offset="1.000" stop-color="#5700a1"/></linearGradient>
<linearGradient id="o80" gradientUnits="userSpaceOnUse" x1="730" x2="831" y1="0" y2="0"><stop offset="0.000" stop-color="#0000a1"/><stop offset="0.069" stop-color="#0000a1"/><stop offset="0.376" stop-color="#1f00a1"/><stop offset="1.000" stop-color="#5300a1"/></linearGradient>
<linearGradient id="o81" gradientUnits="userSpaceOnUse" x1="733" x2="828" y1="0" y2="0"><stop offset="0.000" stop-color="#0000a1"/><stop offset="0.053" stop-color="#0000a1"/><stop offset="0.347" stop-color="#1c00a1"/><stop offset="1.000" stop-color="#4f00a1"/></linearGradient>
<linearGradient id="o82" gradientUnits="userSpaceOnUse" x1="736" x2="825" y1="0" y2="0"><stop offset="0.000" stop-color="#0000a1"/><stop offset="1.000" stop-color="#4b00a1"/></linearGradient>
<linearGradient id="o83" gradientUnits="userSpaceOnUse" x1="739" x2="822" y1="0" y2="0"><stop offset="0.000" stop-color="#0000a1"/><stop offset="0.325" stop-color="#1b00a1"/><stop offset="1.000" stop-color="#4800a1"/></linearGradient>
<linearGradient id="o84" gradientUnits="userSpaceOnUse" x1="742" x2="819" y1="0" y2="0"><stop offset="0.000" stop-color="#0300a1"/><stop offset="1.000" stop-color="#4400a1"/></linearGradient>
<linearGradient id="o85" gradientUnits="userSpaceOnUse" x1="745" x2="816" y1="0" y2="0"><stop offset="0.000" stop-color="#0600a1"/><stop offset="1.000" stop-color="#4100a1"/></linearGradient>
<linearGradient id="o86" gradientUnits="userSpaceOnUse" x1="748" x2="813" y1="0" y2="0"><stop offset="0.000" stop-color="#0800a1"/><stop offset="1.000" stop-color="#3e00a1"/></linearGradient>
<linearGradient id="o87" gradientUnits="userSpaceOnUse" x1="752" x2="810" y1="0" y2="0"><stop offset="0.000" stop-color="#0c00a1"/><stop offset="1.000" stop-color="#3a00a1"/></linearGradient>
<linearGradient id="o88" gradientUnits="userSpaceOnUse" x1="755" x2="807" y1="0" y2="0"><stop offset="0.000" stop-color="#0e00a1"/><stop offset="1.000" stop-color="#3700a1"/></linearGradient>
<linearGradient id="o89" gradientUnits="userSpaceOnUse" x1="759" x2="805" y1="0" y2="0"><stop offset="0.000" stop-color="#1100a1"/><stop offset="1.000" stop-color="#3500a1"/></linearGradient>
<linearGradient id="o90" gradientUnits="userSpaceOnUse" x1="763" x2="802" y1="0" y2="0"><stop offset="0.000" stop-color="#1300a1"/><stop offset="1.000" stop-color="#3200a1"/></linearGradient>
<linearGradient id="o91" gradientUnits="userSpaceOnUse" x1="766" x2="799" y1="0" y2="0"><stop offset="0.000" stop-color="#1500a1"/><stop offset="1.000" stop-color="#2f00a1"/></linearGradient>
<linearGradient id="o92" gradientUnits="userSpaceOnUse" x1="770" x2="796" y1="0" y2="0"><stop offset="0.000" stop-color="#1800a1"/><stop offset="1.000" stop-color="#2c00a1"/></linearGradient>
<linearGradient id="o93" gradientUnits="userSpaceOnUse" x1="774" x2="793" y1="0" y2="0"><stop offset="0.000" stop-color="#1a00a1"/><stop offset="1.000" stop-color="#2900a1"/></linearGradient>
<linearGradient id="o94" gradientUnits="userSpaceOnUse" x1="777" x2="790" y1="0" y2="0"><stop offset="0.000" stop-color="#1c00a1"/><stop offset="1.000" stop-color="#2600a1"/></linearGradient>
<linearGradient id="o95" gradientUnits="userSpaceOnUse" x1="781" x2="787" y1="0" y2="0"><stop offset="0.000" stop-color="#1e00a1"/><stop offset="1.000" stop-color="#2300a1"/></linearGradient>
<linearGradient id="r0" gradientUnits="userSpaceOnUse" x1="699" x2="722" y1="0" y2="0"><stop offset="0.000" stop-color="#0f0"/><stop offset="0.130" stop-color="#02ff00"/><stop offset="0.391" stop-color="#1f0"/><stop offset="1.000" stop-color="#46ff00"/></linearGradient>
<linearGradient id="r1" gradientUnits="userSpaceOnUse" x1="699" x2="754" y1="0" y2="0"><stop offset="0.000" stop-color="#00ff06"/><stop offset="0.055" stop-color="#01ff05"/><stop offset="0.164" stop-color="#10ff04"/><stop offset="0.418" stop-color="#45ff02"/><stop offset="0.564" stop-color="#6dff01"/><stop offset="0.691" stop-color="#96ff00"/><stop offset="0.818" stop-color="#c5ff00"/><stop offset="0.945" stop-color="#faff00"/><stop offset="0.964" stop-color="#fffc00"/><stop offset="1.000" stop-color="#ffed00"/></linearGradient>
<linearGradient id="r2" gradientUnits="userSpaceOnUse" x1="700" x2="785" y1="0" y2="0"><stop offset="0.000" stop-color="#00ff0d"/><stop offset="0.047" stop-color="#04ff0c"/><stop offset="0.118" stop-color="#15ff0b"/><stop offset="0.282" stop-color="#4eff09"/><stop offset="0.435" stop-color="#96ff06"/><stop offset="0.518" stop-color="#c6ff05"/><stop offset="0.600" stop-color="#fcff03"/><stop offset="0.612" stop-color="#fffa03"/><stop offset="0.694" stop-color="#ffca01"/><stop offset="0.776" stop-color="#ffa500"/><stop offset="0.882" stop-color="#ff8200"/><stop offset="1.000" stop-color="#f60"/></linearGradient>
<linearGradient id="r3" gradientUnits="userSpaceOnUse" x1="700" x2="817" y1="0" y2="0"><stop offset="0.000" stop-color="#00ff15"/><stop offset="0.034" stop-color="#03ff15"/><stop offset="0.085" stop-color="#14ff14"/><stop offset="0.145" stop-color="#2dff13"/><stop offset="0.214" stop-color="#52ff11"/><stop offset="0.325" stop-color="#9dff0f"/><stop offset="0.436" stop-color="#feff0c"/><stop offset="0.487" stop-color="#ffd409"/><stop offset="0.538" stop-color="#ffb106"/><stop offset="0.598" stop-color="#ff9204"/><stop offset="0.658" stop-color="#ff7a03"/><stop offset="0.812" stop-color="#ff4f00"/><stop offset="1.000" stop-color="#ff2f00"/></linearGradient>
<linearGradient id="r4" gradientUnits="userSpaceOnUse" x1="701" x2="849" y1="0" y2="0"><stop offset="0.000" stop-color="#00ff1e"/><stop offset="0.027" stop-color="#04ff1e"/><stop offset="0.068" stop-color="#16ff1d"/><stop offset="0.162" stop-color="#51ff1b"/><stop offset="0.250" stop-color="#9eff19"/><stop offset="0.338" stop-color="#fffe17"/><stop offset="0.385" stop-color="#ffcb11"/><stop offset="0.439" stop-color="#ffa10d"/><stop offset="0.500" stop-color="#ff7e09"/><stop offset="0.574" stop-color="#ff6006"/><stop offset="0.655" stop-color="#ff4803"/><stop offset="0.757" stop-color="#ff3301"/><stop offset="1.000" stop-color="#ff1500"/></linearGradient>
<linearGradient id="r5" gradientUnits="userSpaceOnUse" x1="701" x2="881" y1="0" y2="0"><stop offset="0.000" stop-color="#00ff29"/><stop offset="0.022" stop-color="#03ff28"/><stop offset="0.056" stop-color="#15ff28"/><stop offset="0.094" stop-color="#30ff27"/><stop offset="0.133" stop-color="#51ff27"/><stop offset="0.200" stop-color="#98ff25"/><stop offset="0.239" stop-color="#caff25"/><stop offset="0.272" stop-color="#faff24"/><stop offset="0.278" stop-color="#fffb23"/><stop offset="0.322" stop-color="#ffc21a"/><stop offset="0.378" stop-color="#ff9213"/><stop offset="0.439" stop-color="#ff6d0d"/><stop offset="0.517" stop-color="#ff4d09"/><stop offset="0.606" stop-color="#ff3505"/><stop offset="0.717" stop-color="#ff2102"/><stop offset="0.844" stop-color="#ff1200"/><stop offset="1.000" stop-color="#ff0700"/></linearGradient>
<linearGradient id="r6" gradientUnits="userSpaceOnUse" x1="702" x2="912" y1="0" y2="0"><stop offset="0.000" stop-color="#00ff34"/><stop offset="0.019" stop-color="#04ff33"/><stop offset="0.048" stop-color="#17ff33"/><stop offset="0.110" stop-color="#50ff33"/><stop offset="0.167" stop-color="#98ff32"/><stop offset="0.200" stop-color="#cbff32"/><stop offset="0.229" stop-color="#fdff32"/><stop offset="0.233" stop-color="#fff931"/><stop offset="0.252" stop-color="#ffda2a"/><stop offset="0.276" stop-color="#ffba24"/><stop offset="0.329" stop-color="#ff881a"/><stop offset="0.390" stop-color="#ff6012"/><stop offset="0.471" stop-color="#ff3f0c"/><stop offset="0.567" stop-color="#ff2707"/><stop offset="0.686" stop-color="#ff1503"/><stop offset="0.833" stop-color="#ff0701"/><stop offset="1.000" stop-color="#f00"/></linearGradient>
<linearGradient id="r7" gradientUnits="userSpaceOnUse" x1="702" x2="912" y1="0" y2="0"><stop offset="0.000" stop-color="#00ff40"/><stop offset="0.014" stop-color="#01ff40"/><stop offset="0.043" stop-color="#12ff40"/><stop offset="0.076" stop-color="#2dff40"/><stop offset="0.110" stop-color="#4fff40"/><stop offset="0.171" stop-color="#9fff41"/><stop offset="0.229" stop-color="#ffff41"/><stop offset="0.248" stop-color="#ffde39"/><stop offset="0.271" stop-color="#ffbd31"/><stop offset="0.324" stop-color="#ff8924"/><stop offset="0.386" stop-color="#ff611a"/><stop offset="0.462" stop-color="#ff4112"/><stop offset="0.562" stop-color="#ff270b"/><stop offset="0.681" stop-color="#ff1406"/><stop offset="0.833" stop-color="#ff0703"/><stop offset="1.000" stop-color="#f00"/></linearGradient>
<linearGradient id="r8" gradientUnits="userSpaceOnUse" x1="703" x2="909" y1="0" y2="0"><stop offset="0.000" stop-color="#00ff4c"/><stop offset="0.015" stop-color="#02ff4d"/><stop offset="0.044" stop-color="#14ff4d"/><stop offset="0.107" stop-color="#4fff4f"/><stop offset="0.165" stop-color="#99ff50"/><stop offset="0.228" stop-color="#fffc52"/><stop offset="0.248" stop-color="#ffdc48"/><stop offset="0.272" stop-color="#ffbb3e"/><stop offset="0.325" stop-color="#ff872e"/><stop offset="0.388" stop-color="#ff5f21"/><stop offset="0.466" stop-color="#ff3f17"/><stop offset="0.563" stop-color="#ff2610"/><stop offset="0.684" stop-color="#ff140a"/><stop offset="0.840" stop-color="#ff0605"/><stop offset="1.000" stop-color="#ff0002"/></linearGradient>
<linearGradient id="r9" gradientUnits="userSpaceOnUse" x1="703" x2="906" y1="0" y2="0"><stop offset="0.000" stop-color="#00ff5a"/><stop offset="0.015" stop-color="#01ff5b"/><stop offset="0.044" stop-color="#13ff5c"/><stop offset="0.108" stop-color="#4eff5e"/><stop offset="0.163" stop-color="#92ff61"/><stop offset="0.197" stop-color="#c7ff63"/><stop offset="0.227" stop-color="#fbff64"/><stop offset="0.232" stop-color="#fffa63"/><stop offset="0.251" stop-color="#ffd957"/><stop offset="0.276" stop-color="#ffb84b"/><stop offset="0.325" stop-color="#ff8839"/><stop offset="0.389" stop-color="#ff5f2a"/><stop offset="0.468" stop-color="#ff3f1e"/><stop offset="0.567" stop-color="#ff2615"/><stop offset="0.685" stop-color="#ff140d"/><stop offset="0.837" stop-color="#ff0608"/><stop offset="1.000" stop-color="#ff0004"/></linearGradient>
<linearGradient id="r10" gradientUnits="userSpaceOnUse" x1="704" x2="903" y1="0" y2="0"><stop offset="0.000" stop-color="#00ff69"/><stop offset="0.015" stop-color="#03ff6a"/><stop offset="0.045" stop-color="#15ff6b"/><stop offset="0.106" stop-color="#4dff6f"/><stop offset="0.161" stop-color="#93ff73"/><stop offset="0.196" stop-color="#c9ff76"/><stop offset="0.226" stop-color="#feff78"/><stop offset="0.231" stop-color="#fff775"/><stop offset="0.251" stop-color="#ffd767"/><stop offset="0.276" stop-color="#ffb659"/><stop offset="0.327" stop-color="#ff8644"/><stop offset="0.392" stop-color="#ff5d33"/><stop offset="0.467" stop-color="#ff3f25"/><stop offset="0.563" stop-color="#ff261a"/><stop offset="0.683" stop-color="#ff1412"/><stop offset="0.839" stop-color="#ff060b"/><stop offset="1.000" stop-color="#ff0006"/></linearGradient>
<linearGradient id="r11" gradientUnits="userSpaceOnUse" x1="704" x2="900" y1="0" y2="0"><stop offset="0.000" stop-color="#00ff78"/><stop offset="0.015" stop-color="#02ff79"/><stop offset="0.046" stop-color="#14ff7c"/><stop offset="0.077" stop-color="#2dff7e"/><stop offset="0.112" stop-color="#52ff81"/><stop offset="0.173" stop-color="#a2ff87"/><stop offset="0.230" stop-color="#fffe8d"/><stop offset="0.250" stop-color="#ffdb7c"/><stop offset="0.270" stop-color="#ffbf6e"/><stop offset="0.321" stop-color="#ff8b54"/><stop offset="0.388" stop-color="#ff603e"/><stop offset="0.464" stop-color="#ff402e"/><stop offset="0.561" stop-color="#ff2721"/><stop offset="0.684" stop-color="#ff1416"/><stop offset="0.837" stop-color="#ff060e"/><stop offset="1.000" stop-color="#ff0009"/></linearGradient>
<linearGradient id="r12" gradientUnits="userSpaceOnUse" x1="705" x2="897" y1="0" y2="0"><stop offset="0.000" stop-color="#00ff89"/><stop offset="0.016" stop-color="#03ff8b"/><stop offset="0.047" stop-color="#16ff8e"/><stop offset="0.109" stop-color="#51ff94"/><stop offset="0.167" stop-color="#9bff9b"/><stop offset="0.224" stop-color="#f9ffa3"/><stop offset="0.229" stop-color="#fffba1"/><stop offset="0.250" stop-color="#ffd98e"/><stop offset="0.271" stop-color="#ffbd7e"/><stop offset="0.323" stop-color="#ff8961"/><stop offset="0.385" stop-color="#ff604a"/><stop offset="0.464" stop-color="#ff4037"/><stop offset="0.562" stop-color="#ff2627"/><stop offset="0.682" stop-color="#ff141c"/><stop offset="0.839" stop-color="#ff0612"/><stop offset="1.000" stop-color="#ff000c"/></linearGradient>
<linearGradient id="r13" gradientUnits="userSpaceOnUse" x1="705" x2="894" y1="0" y2="0"><stop offset="0.000" stop-color="#00ff9b"/><stop offset="0.016" stop-color="#02ff9c"/><stop offset="0.042" stop-color="#11ff9f"/><stop offset="0.106" stop-color="#4bffa8"/><stop offset="0.164" stop-color="#94ffb0"/><stop offset="0.196" stop-color="#c4ffb5"/><stop offset="0.228" stop-color="#fcffbb"/><stop offset="0.233" stop-color="#fff8b7"/><stop offset="0.254" stop-color="#ffd6a1"/><stop offset="0.275" stop-color="#ffba8f"/><stop offset="0.328" stop-color="#ff866e"/><stop offset="0.392" stop-color="#ff5e54"/><stop offset="0.471" stop-color="#ff3e3f"/><stop offset="0.566" stop-color="#ff262e"/><stop offset="0.688" stop-color="#ff1321"/><stop offset="0.841" stop-color="#ff0616"/><stop offset="1.000" stop-color="#ff000f"/></linearGradient>
<linearGradient id="r14" gradientUnits="userSpaceOnUse" x1="706" x2="891" y1="0" y2="0"><stop offset="0.000" stop-color="#00ffae"/><stop offset="0.016" stop-color="#03ffb0"/><stop offset="0.043" stop-color="#14ffb4"/><stop offset="0.076" stop-color="#2fffb9"/><stop offset="0.108" stop-color="#50ffbe"/><stop offset="0.168" stop-color="#9cffc8"/><stop offset="0.200" stop-color="#cfffcf"/><stop offset="0.227" stop-color="#ffffd5"/><stop offset="0.249" stop-color="#ffdbbb"/><stop offset="0.270" stop-color="#ffbda6"/><stop offset="0.324" stop-color="#ff887f"/><stop offset="0.389" stop-color="#ff5f61"/><stop offset="0.465" stop-color="#ff404a"/><stop offset="0.562" stop-color="#ff2736"/><stop offset="0.681" stop-color="#ff1427"/><stop offset="0.838" stop-color="#ff061b"/><stop offset="1.000" stop-color="#ff0013"/></linearGradient>
<linearGradient id="r15" gradientUnits="userSpaceOnUse" x1="706" x2="888" y1="0" y2="0"><stop offset="0.000" stop-color="#00ffc1"/><stop offset="0.016" stop-color="#02ffc4"/><stop offset="0.044" stop-color="#12ffc8"/><stop offset="0.077" stop-color="#2dffce"/><stop offset="0.110" stop-color="#4fffd4"/><stop offset="0.170" stop-color="#9cffe1"/><stop offset="0.231" stop-color="#fffcee"/><stop offset="0.253" stop-color="#ffd8d1"/><stop offset="0.275" stop-color="#ffbbb9"/><stop offset="0.324" stop-color="#ff8991"/><stop offset="0.390" stop-color="#ff5f6e"/><stop offset="0.467" stop-color="#ff3f54"/><stop offset="0.560" stop-color="#ff273f"/><stop offset="0.681" stop-color="#ff142d"/><stop offset="0.835" stop-color="#ff0620"/><stop offset="1.000" stop-color="#ff0016"/></linearGradient>
<linearGradient id="r16" gradientUnits="userSpaceOnUse" x1="707" x2="886" y1="0" y2="0"><stop offset="0.000" stop-color="#00ffd7"/><stop offset="0.011" stop-color="#01ffd9"/><stop offset="0.039" stop-color="#11ffde"/><stop offset="0.101" stop-color="#48ffeb"/><stop offset="0.140" stop-color="#76fff5"/><stop offset="0.179" stop-color="#aeffff"/><stop offset="0.235" stop-color="#ffefff"/><stop offset="0.257" stop-color="#ffcde1"/><stop offset="0.279" stop-color="#ffb1c7"/><stop offset="0.330" stop-color="#ff829d"/><stop offset="0.391" stop-color="#ff5d7b"/><stop offset="0.469" stop-color="#ff3d5d"/><stop offset="0.564" stop-color="#ff2646"/><stop offset="0.687" stop-color="#ff1333"/><stop offset="0.844" stop-color="#ff0624"/><stop offset="1.000" stop-color="#ff001a"/></linearGradient>
<linearGradient id="r17" gradientUnits="userSpaceOnUse" x1="707" x2="883" y1="0" y2="0"><stop offset="0.000" stop-color="#00ffed"/><stop offset="0.017" stop-color="#02fff1"/><stop offset="0.040" stop-color="#0ffff6"/><stop offset="0.080" stop-color="#30ffff"/><stop offset="0.108" stop-color="#4bf8ff"/><stop offset="0.182" stop-color="#9de5ff"/><stop offset="0.256" stop-color="#ffd2ff"/><stop offset="0.301" stop-color="#ff9cca"/><stop offset="0.352" stop-color="#ff74a1"/><stop offset="0.415" stop-color="#ff527f"/><stop offset="0.494" stop-color="#ff3662"/><stop offset="0.591" stop-color="#ff214a"/><stop offset="0.705" stop-color="#ff1138"/><stop offset="0.852" stop-color="#ff0528"/><stop offset="1.000" stop-color="#ff001e"/></linearGradient>
<linearGradient id="r18" gradientUnits="userSpaceOnUse" x1="708" x2="880" y1="0" y2="0"><stop offset="0.000" stop-color="#00f9ff"/><stop offset="0.012" stop-color="#01f6ff"/><stop offset="0.041" stop-color="#11efff"/><stop offset="0.116" stop-color="#4edeff"/><stop offset="0.192" stop-color="#9cccff"/><stop offset="0.273" stop-color="#ffb8ff"/><stop offset="0.320" stop-color="#ff8acd"/><stop offset="0.372" stop-color="#ff67a5"/><stop offset="0.436" stop-color="#ff4983"/><stop offset="0.512" stop-color="#ff3167"/><stop offset="0.599" stop-color="#ff1f51"/><stop offset="0.709" stop-color="#ff103e"/><stop offset="0.855" stop-color="#ff052e"/><stop offset="1.000" stop-color="#ff0023"/></linearGradient>
<linearGradient id="r19" gradientUnits="userSpaceOnUse" x1="708" x2="877" y1="0" y2="0"><stop offset="0.000" stop-color="#00e3ff"/><stop offset="0.018" stop-color="#02e0ff"/><stop offset="0.047" stop-color="#11d9ff"/><stop offset="0.124" stop-color="#4bc9ff"/><stop offset="0.207" stop-color="#9ab6ff"/><stop offset="0.296" stop-color="#ffa2ff"/><stop offset="0.343" stop-color="#ff7acf"/><stop offset="0.396" stop-color="#ff5ba8"/><stop offset="0.462" stop-color="#ff4187"/><stop offset="0.533" stop-color="#ff2d6d"/><stop offset="0.621" stop-color="#ff1c56"/><stop offset="0.728" stop-color="#ff0f43"/><stop offset="1.000" stop-color="#ff0028"/></linearGradient>
<linearGradient id="r20" gradientUnits="userSpaceOnUse" x1="709" x2="874" y1="0" y2="0"><stop offset="0.000" stop-color="#00cfff"/><stop offset="0.018" stop-color="#03ccff"/><stop offset="0.048" stop-color="#12c6ff"/><stop offset="0.133" stop-color="#4eb4ff"/><stop offset="0.224" stop-color="#9fa1ff"/><stop offset="0.315" stop-color="#ff8eff"/><stop offset="0.364" stop-color="#ff6cd1"/><stop offset="0.418" stop-color="#ff50ab"/><stop offset="0.479" stop-color="#ff3b8d"/><stop offset="0.552" stop-color="#ff2873"/><stop offset="0.636" stop-color="#ff195c"/><stop offset="0.739" stop-color="#ff0e49"/><stop offset="1.000" stop-color="#ff002d"/></linearGradient>
<linearGradient id="r21" gradientUnits="userSpaceOnUse" x1="709" x2="871" y1="0" y2="0"><stop offset="0.000" stop-color="#00beff"/><stop offset="0.019" stop-color="#02bbff"/><stop offset="0.049" stop-color="#10b5ff"/><stop offset="0.142" stop-color="#4ba4ff"/><stop offset="0.241" stop-color="#9e90ff"/><stop offset="0.340" stop-color="#ff7dff"/><stop offset="0.389" stop-color="#ff5fd3"/><stop offset="0.438" stop-color="#ff49b2"/><stop offset="0.500" stop-color="#ff3593"/><stop offset="0.574" stop-color="#ff2478"/><stop offset="0.654" stop-color="#ff1763"/><stop offset="0.753" stop-color="#ff0c50"/><stop offset="1.000" stop-color="#ff0032"/></linearGradient>
<linearGradient id="r22" gradientUnits="userSpaceOnUse" x1="710" x2="868" y1="0" y2="0"><stop offset="0.000" stop-color="#00aeff"/><stop offset="0.019" stop-color="#03abff"/><stop offset="0.057" stop-color="#13a4ff"/><stop offset="0.152" stop-color="#4e94ff"/><stop offset="0.253" stop-color="#9c81ff"/><stop offset="0.361" stop-color="#ff6dff"/><stop offset="0.411" stop-color="#ff53d4"/><stop offset="0.462" stop-color="#ff40b4"/><stop offset="0.525" stop-color="#ff2e96"/><stop offset="0.595" stop-color="#ff207d"/><stop offset="0.766" stop-color="#ff0b56"/><stop offset="1.000" stop-color="#ff0038"/></linearGradient>
<linearGradient id="r23" gradientUnits="userSpaceOnUse" x1="710" x2="865" y1="0" y2="0"><stop offset="0.000" stop-color="#00a1ff"/><stop offset="0.019" stop-color="#029eff"/><stop offset="0.065" stop-color="#1496ff"/><stop offset="0.168" stop-color="#5085ff"/><stop offset="0.277" stop-color="#a073ff"/><stop offset="0.387" stop-color="#ff60ff"/><stop offset="0.432" stop-color="#ff4bdb"/><stop offset="0.484" stop-color="#ff3aba"/><stop offset="0.542" stop-color="#ff2b9e"/><stop offset="0.613" stop-color="#ff1d84"/><stop offset="0.781" stop-color="#ff0a5c"/><stop offset="1.000" stop-color="#ff003f"/></linearGradient>
<linearGradient id="r24" gradientUnits="userSpaceOnUse" x1="711" x2="862" y1="0" y2="0"><stop offset="0.000" stop-color="#0094ff"/><stop offset="0.020" stop-color="#0391ff"/><stop offset="0.066" stop-color="#148aff"/><stop offset="0.179" stop-color="#5278ff"/><stop offset="0.291" stop-color="#9f67ff"/><stop offset="0.411" stop-color="#ff54ff"/><stop offset="0.457" stop-color="#ff42dc"/><stop offset="0.510" stop-color="#ff32bc"/><stop offset="0.570" stop-color="#ff25a1"/><stop offset="0.636" stop-color="#ff1a89"/><stop offset="0.795" stop-color="#ff0963"/><stop offset="1.000" stop-color="#ff0046"/></linearGradient>
<linearGradient id="r25" gradientUnits="userSpaceOnUse" x1="711" x2="859" y1="0" y2="0"><stop offset="0.000" stop-color="#0089ff"/><stop offset="0.027" stop-color="#0385ff"/><stop offset="0.074" stop-color="#157eff"/><stop offset="0.189" stop-color="#506eff"/><stop offset="0.311" stop-color="#9e5cff"/><stop offset="0.439" stop-color="#ff49ff"/><stop offset="0.486" stop-color="#ff39dd"/><stop offset="0.534" stop-color="#ff2dc2"/><stop offset="0.655" stop-color="#ff1791"/><stop offset="0.811" stop-color="#ff086a"/><stop offset="1.000" stop-color="#ff004d"/></linearGradient>
<linearGradient id="r26" gradientUnits="userSpaceOnUse" x1="712" x2="856" y1="0" y2="0"><stop offset="0.000" stop-color="#007eff"/><stop offset="0.028" stop-color="#047bff"/><stop offset="0.076" stop-color="#1574ff"/><stop offset="0.201" stop-color="#5163ff"/><stop offset="0.333" stop-color="#a151ff"/><stop offset="0.465" stop-color="#ff3fff"/><stop offset="0.514" stop-color="#ff31de"/><stop offset="0.562" stop-color="#ff26c4"/><stop offset="0.681" stop-color="#ff1495"/><stop offset="0.826" stop-color="#ff0771"/><stop offset="1.000" stop-color="#f05"/></linearGradient>
<linearGradient id="r27" gradientUnits="userSpaceOnUse" x1="712" x2="853" y1="0" y2="0"><stop offset="0.000" stop-color="#0075ff"/><stop offset="0.028" stop-color="#0372ff"/><stop offset="0.078" stop-color="#136bff"/><stop offset="0.213" stop-color="#4f5aff"/><stop offset="0.355" stop-color="#a048ff"/><stop offset="0.496" stop-color="#ff36ff"/><stop offset="0.589" stop-color="#ff21c9"/><stop offset="0.702" stop-color="#ff119c"/><stop offset="0.837" stop-color="#ff0679"/><stop offset="1.000" stop-color="#ff005d"/></linearGradient>
<linearGradient id="r28" gradientUnits="userSpaceOnUse" x1="713" x2="850" y1="0" y2="0"><stop offset="0.000" stop-color="#006cff"/><stop offset="0.029" stop-color="#0469ff"/><stop offset="0.088" stop-color="#1662ff"/><stop offset="0.226" stop-color="#5152ff"/><stop offset="0.372" stop-color="#9f40ff"/><stop offset="0.526" stop-color="#ff2eff"/><stop offset="0.613" stop-color="#ff1dce"/><stop offset="0.723" stop-color="#ff0fa3"/><stop offset="0.847" stop-color="#ff0582"/><stop offset="1.000" stop-color="#f06"/></linearGradient>
<linearGradient id="r29" gradientUnits="userSpaceOnUse" x1="713" x2="847" y1="0" y2="0"><stop offset="0.000" stop-color="#0065ff"/><stop offset="0.030" stop-color="#0361ff"/><stop offset="0.090" stop-color="#145bff"/><stop offset="0.239" stop-color="#4f4aff"/><stop offset="0.396" stop-color="#9e39ff"/><stop offset="0.560" stop-color="#ff27ff"/><stop offset="0.649" stop-color="#ff18cf"/><stop offset="0.746" stop-color="#ff0daa"/><stop offset="0.866" stop-color="#ff048a"/><stop offset="1.000" stop-color="#ff006f"/></linearGradient>
<linearGradient id="r30" gradientUnits="userSpaceOnUse" x1="714" x2="845" y1="0" y2="0"><stop offset="0.000" stop-color="#005dff"/><stop offset="0.038" stop-color="#0559ff"/><stop offset="0.099" stop-color="#1753ff"/><stop offset="0.260" stop-color="#5442ff"/><stop offset="0.420" stop-color="#a132ff"/><stop offset="0.588" stop-color="#ff21ff"/><stop offset="0.672" stop-color="#ff14d4"/><stop offset="0.763" stop-color="#ff0bb1"/><stop offset="0.870" stop-color="#ff0493"/><stop offset="1.000" stop-color="#ff0078"/></linearGradient>
<linearGradient id="r31" gradientUnits="userSpaceOnUse" x1="714" x2="842" y1="0" y2="0"><stop offset="0.000" stop-color="#0057ff"/><stop offset="0.039" stop-color="#0453ff"/><stop offset="0.109" stop-color="#174cff"/><stop offset="0.273" stop-color="#523cff"/><stop offset="0.445" stop-color="#a02cff"/><stop offset="0.625" stop-color="#ff1bff"/><stop offset="0.703" stop-color="#ff11d9"/><stop offset="0.789" stop-color="#ff09b8"/><stop offset="0.891" stop-color="#ff039b"/><stop offset="1.000" stop-color="#ff0083"/></linearGradient>
<linearGradient id="r32" gradientUnits="userSpaceOnUse" x1="714" x2="839" y1="0" y2="0"><stop offset="0.000" stop-color="#0051ff"/><stop offset="0.040" stop-color="#034dff"/><stop offset="0.112" stop-color="#1547ff"/><stop offset="0.288" stop-color="#5137ff"/><stop offset="0.472" stop-color="#9f26ff"/><stop offset="0.664" stop-color="#ff16ff"/><stop offset="0.736" stop-color="#ff0edd"/><stop offset="0.816" stop-color="#ff07bf"/><stop offset="1.000" stop-color="#ff008f"/></linearGradient>
<linearGradient id="r33" gradientUnits="userSpaceOnUse" x1="715" x2="836" y1="0" y2="0"><stop offset="0.000" stop-color="#004bff"/><stop offset="0.041" stop-color="#0447ff"/><stop offset="0.116" stop-color="#1541ff"/><stop offset="0.306" stop-color="#5231ff"/><stop offset="0.504" stop-color="#a120ff"/><stop offset="0.702" stop-color="#f1f"/><stop offset="0.835" stop-color="#ff06c9"/><stop offset="1.000" stop-color="#ff009b"/></linearGradient>
<linearGradient id="r34" gradientUnits="userSpaceOnUse" x1="715" x2="833" y1="0" y2="0"><stop offset="0.000" stop-color="#0046ff"/><stop offset="0.042" stop-color="#0342ff"/><stop offset="0.127" stop-color="#163cff"/><stop offset="0.322" stop-color="#502cff"/><stop offset="0.534" stop-color="#a11cff"/><stop offset="0.746" stop-color="#ff0dff"/><stop offset="0.864" stop-color="#ff04d0"/><stop offset="1.000" stop-color="#ff00a9"/></linearGradient>
<linearGradient id="r35" gradientUnits="userSpaceOnUse" x1="716" x2="830" y1="0" y2="0"><stop offset="0.000" stop-color="#0040ff"/><stop offset="0.044" stop-color="#043dff"/><stop offset="0.132" stop-color="#1637ff"/><stop offset="0.342" stop-color="#5227ff"/><stop offset="0.561" stop-color="#a018ff"/><stop offset="0.789" stop-color="#ff09ff"/><stop offset="0.886" stop-color="#ff03d9"/><stop offset="1.000" stop-color="#ff00b7"/></linearGradient>
<linearGradient id="r36" gradientUnits="userSpaceOnUse" x1="716" x2="827" y1="0" y2="0"><stop offset="0.000" stop-color="#003cff"/><stop offset="0.045" stop-color="#0339ff"/><stop offset="0.135" stop-color="#1433ff"/><stop offset="0.360" stop-color="#5023ff"/><stop offset="0.595" stop-color="#9f14ff"/><stop offset="0.838" stop-color="#ff06ff"/><stop offset="1.000" stop-color="#ff00c7"/></linearGradient>
<linearGradient id="r37" gradientUnits="userSpaceOnUse" x1="717" x2="824" y1="0" y2="0"><stop offset="0.000" stop-color="#0038ff"/><stop offset="0.056" stop-color="#0534ff"/><stop offset="0.150" stop-color="#162eff"/><stop offset="0.383" stop-color="#511fff"/><stop offset="0.636" stop-color="#a110ff"/><stop offset="0.888" stop-color="#ff03ff"/><stop offset="1.000" stop-color="#ff00d8"/></linearGradient>
<linearGradient id="r38" gradientUnits="userSpaceOnUse" x1="717" x2="821" y1="0" y2="0"><stop offset="0.000" stop-color="#0034ff"/><stop offset="0.048" stop-color="#0331ff"/><stop offset="0.135" stop-color="#112cff"/><stop offset="0.346" stop-color="#411fff"/><stop offset="0.635" stop-color="#940fff"/><stop offset="0.942" stop-color="#ff01ff"/><stop offset="1.000" stop-color="#ff00eb"/></linearGradient>
<linearGradient id="r39" gradientUnits="userSpaceOnUse" x1="718" x2="818" y1="0" y2="0"><stop offset="0.000" stop-color="#0030ff"/><stop offset="0.060" stop-color="#052cff"/><stop offset="0.170" stop-color="#1726ff"/><stop offset="0.440" stop-color="#5418ff"/><stop offset="0.720" stop-color="#a30aff"/><stop offset="1.000" stop-color="#f0f"/></linearGradient>
<linearGradient id="r40" gradientUnits="userSpaceOnUse" x1="718" x2="815" y1="0" y2="0"><stop offset="0.000" stop-color="#002dff"/><stop offset="0.052" stop-color="#032aff"/><stop offset="0.165" stop-color="#1424ff"/><stop offset="0.433" stop-color="#4b16ff"/><stop offset="0.711" stop-color="#9309ff"/><stop offset="1.000" stop-color="#ea00ff"/></linearGradient>
<linearGradient id="r41" gradientUnits="userSpaceOnUse" x1="719" x2="812" y1="0" y2="0"><stop offset="0.000" stop-color="#0029ff"/><stop offset="0.172" stop-color="#1421ff"/><stop offset="0.430" stop-color="#4515ff"/><stop offset="0.710" stop-color="#8709ff"/><stop offset="1.000" stop-color="#d800ff"/></linearGradient>
<linearGradient id="r42" gradientUnits="userSpaceOnUse" x1="719" x2="809" y1="0" y2="0"><stop offset="0.000" stop-color="#0026ff"/><stop offset="0.156" stop-color="#0f1fff"/><stop offset="0.422" stop-color="#3e13ff"/><stop offset="0.700" stop-color="#7a08ff"/><stop offset="1.000" stop-color="#c600ff"/></linearGradient>
<linearGradient id="r43" gradientUnits="userSpaceOnUse" x1="720" x2="807" y1="0" y2="0"><stop offset="0.000" stop-color="#0023ff"/><stop offset="0.161" stop-color="#101cff"/><stop offset="0.425" stop-color="#3b11ff"/><stop offset="0.701" stop-color="#7307ff"/><stop offset="1.000" stop-color="#b900ff"/></linearGradient>
<linearGradient id="r44" gradientUnits="userSpaceOnUse" x1="720" x2="804" y1="0" y2="0"><stop offset="0.000" stop-color="#0021ff"/><stop offset="0.155" stop-color="#0d1aff"/><stop offset="0.417" stop-color="#3410ff"/><stop offset="0.702" stop-color="#6907ff"/><stop offset="1.000" stop-color="#a0f"/></linearGradient>
<linearGradient id="r45" gradientUnits="userSpaceOnUse" x1="721" x2="801" y1="0" y2="0"><stop offset="0.000" stop-color="#001eff"/><stop offset="0.163" stop-color="#0d18ff"/><stop offset="0.425" stop-color="#310fff"/><stop offset="0.700" stop-color="#6006ff"/><stop offset="1.000" stop-color="#9b00ff"/></linearGradient>
<linearGradient id="r46" gradientUnits="userSpaceOnUse" x1="721" x2="798" y1="0" y2="0"><stop offset="0.000" stop-color="#001cff"/><stop offset="0.156" stop-color="#0b16ff"/><stop offset="0.416" stop-color="#2b0eff"/><stop offset="0.701" stop-color="#5806ff"/><stop offset="1.000" stop-color="#8e00ff"/></linearGradient>
<linearGradient id="r47" gradientUnits="userSpaceOnUse" x1="722" x2="795" y1="0" y2="0"><stop offset="0.000" stop-color="#0019ff"/><stop offset="0.151" stop-color="#0a14ff"/><stop offset="0.411" stop-color="#280dff"/><stop offset="0.699" stop-color="#5005ff"/><stop offset="1.000" stop-color="#8200ff"/></linearGradient>
<linearGradient id="r48" gradientUnits="userSpaceOnUse" x1="722" x2="792" y1="0" y2="0"><stop offset="0.000" stop-color="#0017ff"/><stop offset="0.157" stop-color="#0913ff"/><stop offset="0.414" stop-color="#240cff"/><stop offset="1.000" stop-color="#7600ff"/></linearGradient>
<linearGradient id="r49" gradientUnits="userSpaceOnUse" x1="723" x2="789" y1="0" y2="0"><stop offset="0.000" stop-color="#0015ff"/><stop offset="0.152" stop-color="#0811ff"/><stop offset="0.409" stop-color="#210bff"/><stop offset="1.000" stop-color="#6c00ff"/></linearGradient>
<linearGradient id="r50" gradientUnits="userSpaceOnUse" x1="723" x2="786" y1="0" y2="0"><stop offset="0.000" stop-color="#0013ff"/><stop offset="0.143" stop-color="#0610ff"/><stop offset="0.397" stop-color="#1c0aff"/><stop offset="1.000" stop-color="#6100ff"/></linearGradient>
<linearGradient id="r51" gradientUnits="userSpaceOnUse" x1="724" x2="783" y1="0" y2="0"><stop offset="0.000" stop-color="#01f"/><stop offset="0.153" stop-color="#070eff"/><stop offset="0.407" stop-color="#1b09ff"/><stop offset="1.000" stop-color="#5800ff"/></linearGradient>
<linearGradient id="r52" gradientUnits="userSpaceOnUse" x1="724" x2="780" y1="0" y2="0"><stop offset="0.000" stop-color="#0010ff"/><stop offset="0.143" stop-color="#050dff"/><stop offset="0.393" stop-color="#1608ff"/><stop offset="1.000" stop-color="#4f00ff"/></linearGradient>
<linearGradient id="r53" gradientUnits="userSpaceOnUse" x1="725" x2="777" y1="0" y2="0"><stop offset="0.000" stop-color="#000eff"/><stop offset="0.404" stop-color="#1507ff"/><stop offset="1.000" stop-color="#4700ff"/></linearGradient>
<linearGradient id="r54" gradientUnits="userSpaceOnUse" x1="725" x2="774" y1="0" y2="0"><stop offset="0.000" stop-color="#000dff"/><stop offset="0.388" stop-color="#1107ff"/><stop offset="1.000" stop-color="#3f00ff"/></linearGradient>
<linearGradient id="r55" gradientUnits="userSpaceOnUse" x1="726" x2="771" y1="0" y2="0"><stop offset="0.000" stop-color="#000bff"/><stop offset="0.400" stop-color="#1006ff"/><stop offset="1.000" stop-color="#3800ff"/></linearGradient>
<linearGradient id="r56" gradientUnits="userSpaceOnUse" x1="726" x2="768" y1="0" y2="0"><stop offset="0.000" stop-color="#000aff"/><stop offset="0.381" stop-color="#0d05ff"/><stop offset="1.000" stop-color="#3100ff"/></linearGradient>
<linearGradient id="r57" gradientUnits="userSpaceOnUse" x1="727" x2="766" y1="0" y2="0"><stop offset="0.000" stop-color="#0008ff"/><stop offset="0.385" stop-color="#0c04ff"/><stop offset="1.000" stop-color="#2c00ff"/></linearGradient>
<linearGradient id="r58" gradientUnits="userSpaceOnUse" x1="727" x2="763" y1="0" y2="0"><stop offset="0.000" stop-color="#0007ff"/><stop offset="0.389" stop-color="#0a04ff"/><stop offset="1.000" stop-color="#2600ff"/></linearGradient>
<linearGradient id="r59" gradientUnits="userSpaceOnUse" x1="728" x2="760" y1="0" y2="0"><stop offset="0.000" stop-color="#0006ff"/><stop offset="0.375" stop-color="#0903ff"/><stop offset="1.000" stop-color="#2100ff"/></linearGradient>
<linearGradient id="r60" gradientUnits="userSpaceOnUse" x1="728" x2="757" y1="0" y2="0"><stop offset="0.000" stop-color="#0005ff"/><stop offset="0.379" stop-color="#0703ff"/><stop offset="1.000" stop-color="#1b00ff"/></linearGradient>
<linearGradient id="r61" gradientUnits="userSpaceOnUse" x1="728" x2="754" y1="0" y2="0"><stop offset="0.000" stop-color="#0004ff"/><stop offset="0.346" stop-color="#0502ff"/><stop offset="1.000" stop-color="#1700ff"/></linearGradient>
<linearGradient id="r62" gradientUnits="userSpaceOnUse" x1="729" x2="751" y1="0" y2="0"><stop offset="0.000" stop-color="#0003ff"/><stop offset="1.000" stop-color="#1200ff"/></linearGradient>
<linearGradient id="r63" gradientUnits="userSpaceOnUse" x1="729" x2="748" y1="0" y2="0"><stop offset="0.000" stop-color="#0003ff"/><stop offset="1.000" stop-color="#0e00ff"/></linearGradient>
<linearGradient id="r64" gradientUnits="userSpaceOnUse" x1="730" x2="745" y1="0" y2="0"><stop offset="0.000" stop-color="#0002ff"/><stop offset="1.000" stop-color="#0a00ff"/></linearGradient>
<linearGradient id="r65" gradientUnits="userSpaceOnUse" x1="730" x2="742" y1="0" y2="0"><stop offset="0.000" stop-color="#0001ff"/><stop offset="1.000" stop-color="#0700ff"/></linearGradient>
<linearGradient id="r66" gradientUnits="userSpaceOnUse" x1="731" x2="739" y1="0" y2="0"><stop offset="0.000" stop-color="#0001ff"/><stop offset="1.000" stop-color="#0400ff"/></linearGradient>
<linearGradient id="r67" gradientUnits="userSpaceOnUse" x1="731" x2="736" y1="0" y2="0"><stop offset="0.000" stop-color="#00f"/><stop offset="1.000" stop-color="#0100ff"/></linearGradient>
<clipPath id="tri"><path d="M910.8 65.9L701.0 46.2L733.5 247.7Z"/></clipPath>
<filter id="vb" filterUnits="userSpaceOnUse" x="610" y="20" width="410" height="315" color-interpolation-filters="sRGB"><feGaussianBlur stdDeviation="0 1.3"/></filter>
<linearGradient id="i0" gradientUnits="userSpaceOnUse" x1="883.3" x2="1004" y1="0" y2="0"><stop offset="0.000" stop-color="#84ffcc"/><stop offset="0.417" stop-color="#c0ffc9"/><stop offset="0.817" stop-color="#ffffc6"/><stop offset="1.000" stop-color="#ffe3af"/></linearGradient>
<linearGradient id="i1" gradientUnits="userSpaceOnUse" x1="883.3" x2="1004" y1="0" y2="0"><stop offset="0.000" stop-color="#86ffce"/><stop offset="0.400" stop-color="#bfffcc"/><stop offset="0.800" stop-color="#ffffc9"/><stop offset="1.000" stop-color="#ffe0af"/></linearGradient>
<linearGradient id="i2" gradientUnits="userSpaceOnUse" x1="883.3" x2="1004" y1="0" y2="0"><stop offset="0.000" stop-color="#88ffd0"/><stop offset="0.400" stop-color="#c1ffce"/><stop offset="0.783" stop-color="#ffffcb"/><stop offset="1.000" stop-color="#ffdeb0"/></linearGradient>
<linearGradient id="i3" gradientUnits="userSpaceOnUse" x1="883.3" x2="1004" y1="0" y2="0"><stop offset="0.000" stop-color="#89ffd3"/><stop offset="0.400" stop-color="#c4ffd1"/><stop offset="0.767" stop-color="#ffffce"/><stop offset="1.000" stop-color="#ffdcb0"/></linearGradient>
<linearGradient id="i4" gradientUnits="userSpaceOnUse" x1="883.3" x2="1004" y1="0" y2="0"><stop offset="0.000" stop-color="#8bffd5"/><stop offset="0.383" stop-color="#c3ffd3"/><stop offset="0.750" stop-color="#ffffd1"/><stop offset="1.000" stop-color="#ffd9b1"/></linearGradient>
<linearGradient id="i5" gradientUnits="userSpaceOnUse" x1="883.3" x2="1004" y1="0" y2="0"><stop offset="0.000" stop-color="#8dffd8"/><stop offset="0.383" stop-color="#c6ffd6"/><stop offset="0.733" stop-color="#ffffd4"/><stop offset="1.000" stop-color="#ffd7b1"/></linearGradient>
<linearGradient id="i6" gradientUnits="userSpaceOnUse" x1="883.3" x2="1004" y1="0" y2="0"><stop offset="0.000" stop-color="#8fffda"/><stop offset="0.367" stop-color="#c5ffd8"/><stop offset="0.717" stop-color="#ffffd7"/><stop offset="1.000" stop-color="#ffd5b2"/></linearGradient>
<linearGradient id="i7" gradientUnits="userSpaceOnUse" x1="883.3" x2="1004" y1="0" y2="0"><stop offset="0.000" stop-color="#90ffdd"/><stop offset="0.367" stop-color="#c7ffdb"/><stop offset="0.700" stop-color="#ffffd9"/><stop offset="1.000" stop-color="#ffd3b2"/></linearGradient>
<linearGradient id="i8" gradientUnits="userSpaceOnUse" x1="883.3" x2="1004" y1="0" y2="0"><stop offset="0.000" stop-color="#92ffdf"/><stop offset="0.350" stop-color="#c7ffde"/><stop offset="0.683" stop-color="#feffdc"/><stop offset="1.000" stop-color="#ffd0b3"/></linearGradient>
<linearGradient id="i9" gradientUnits="userSpaceOnUse" x1="883.3" x2="1004" y1="0" y2="0"><stop offset="0.000" stop-color="#94ffe2"/><stop offset="0.333" stop-color="#c7ffe0"/><stop offset="0.667" stop-color="#feffdf"/><stop offset="1.000" stop-color="#ffceb3"/></linearGradient>
<linearGradient id="i10" gradientUnits="userSpaceOnUse" x1="883.3" x2="1004" y1="0" y2="0"><stop offset="0.000" stop-color="#96ffe4"/><stop offset="0.333" stop-color="#c9ffe3"/><stop offset="0.650" stop-color="#feffe2"/><stop offset="1.000" stop-color="#ffccb3"/></linearGradient>
<linearGradient id="i11" gradientUnits="userSpaceOnUse" x1="883.3" x2="1004" y1="0" y2="0"><stop offset="0.000" stop-color="#98ffe7"/><stop offset="0.317" stop-color="#c9ffe6"/><stop offset="0.633" stop-color="#feffe5"/><stop offset="0.817" stop-color="#ffe2cb"/><stop offset="1.000" stop-color="#ffcab4"/></linearGradient>
<linearGradient id="i12" gradientUnits="userSpaceOnUse" x1="883.3" x2="1004" y1="0" y2="0"><stop offset="0.000" stop-color="#9affea"/><stop offset="0.317" stop-color="#cbffe9"/><stop offset="0.617" stop-color="#feffe8"/><stop offset="0.817" stop-color="#ffe0cb"/><stop offset="1.000" stop-color="#ffc7b4"/></linearGradient>
<linearGradient id="i13" gradientUnits="userSpaceOnUse" x1="883.3" x2="1004" y1="0" y2="0"><stop offset="0.000" stop-color="#9cffec"/><stop offset="0.300" stop-color="#cbffec"/><stop offset="0.600" stop-color="#feffeb"/><stop offset="0.817" stop-color="#ffddcb"/><stop offset="1.000" stop-color="#ffc5b5"/></linearGradient>
<linearGradient id="i14" gradientUnits="userSpaceOnUse" x1="883.3" x2="1004" y1="0" y2="0"><stop offset="0.000" stop-color="#9effef"/><stop offset="0.300" stop-color="#cdffee"/><stop offset="0.583" stop-color="#feffee"/><stop offset="0.800" stop-color="#ffddce"/><stop offset="1.000" stop-color="#ffc3b5"/></linearGradient>
<linearGradient id="i15" gradientUnits="userSpaceOnUse" x1="883.3" x2="1004" y1="0" y2="0"><stop offset="0.000" stop-color="#a0fff2"/><stop offset="0.567" stop-color="#fefff1"/><stop offset="0.800" stop-color="#ffdbce"/><stop offset="1.000" stop-color="#ffc1b6"/></linearGradient>
<linearGradient id="i16" gradientUnits="userSpaceOnUse" x1="883.3" x2="1004" y1="0" y2="0"><stop offset="0.000" stop-color="#a2fff5"/><stop offset="0.550" stop-color="#fefff4"/><stop offset="0.783" stop-color="#ffdbd1"/><stop offset="1.000" stop-color="#ffbfb6"/></linearGradient>
<linearGradient id="i17" gradientUnits="userSpaceOnUse" x1="883.3" x2="1004" y1="0" y2="0"><stop offset="0.000" stop-color="#a4fff7"/><stop offset="0.533" stop-color="#fdfff7"/><stop offset="0.783" stop-color="#ffd8d1"/><stop offset="1.000" stop-color="#ffbdb6"/></linearGradient>
<linearGradient id="i18" gradientUnits="userSpaceOnUse" x1="883.3" x2="1004" y1="0" y2="0"><stop offset="0.000" stop-color="#a6fffa"/><stop offset="0.533" stop-color="#fffef9"/><stop offset="0.750" stop-color="#ffdbd6"/><stop offset="1.000" stop-color="#ffbbb7"/></linearGradient>
<linearGradient id="i19" gradientUnits="userSpaceOnUse" x1="883.3" x2="1004" y1="0" y2="0"><stop offset="0.000" stop-color="#a8fffd"/><stop offset="0.517" stop-color="#fffefc"/><stop offset="0.750" stop-color="#ffd8d7"/><stop offset="1.000" stop-color="#ffb9b7"/></linearGradient>
<linearGradient id="i20" gradientUnits="userSpaceOnUse" x1="883.3" x2="1004" y1="0" y2="0"><stop offset="0.000" stop-color="#aafeff"/><stop offset="0.500" stop-color="#fffeff"/><stop offset="0.733" stop-color="#ffd8d9"/><stop offset="1.000" stop-color="#ffb6b8"/></linearGradient>
<linearGradient id="i21" gradientUnits="userSpaceOnUse" x1="883.3" x2="1004" y1="0" y2="0"><stop offset="0.000" stop-color="#aafbff"/><stop offset="0.500" stop-color="#fffaff"/><stop offset="0.733" stop-color="#ffd6da"/><stop offset="1.000" stop-color="#ffb4b8"/></linearGradient>
<linearGradient id="i22" gradientUnits="userSpaceOnUse" x1="883.3" x2="1004" y1="0" y2="0"><stop offset="0.000" stop-color="#aaf8ff"/><stop offset="0.500" stop-color="#fef7ff"/><stop offset="0.750" stop-color="#ffd1d8"/><stop offset="1.000" stop-color="#ffb2b9"/></linearGradient>
<linearGradient id="i23" gradientUnits="userSpaceOnUse" x1="883.3" x2="1004" y1="0" y2="0"><stop offset="0.000" stop-color="#aaf5ff"/><stop offset="0.500" stop-color="#fef4ff"/><stop offset="0.750" stop-color="#ffced8"/><stop offset="1.000" stop-color="#ffb0b9"/></linearGradient>
<linearGradient id="i24" gradientUnits="userSpaceOnUse" x1="883.3" x2="1004" y1="0" y2="0"><stop offset="0.000" stop-color="#aaf2ff"/><stop offset="0.500" stop-color="#fef1ff"/><stop offset="0.750" stop-color="#ffccd8"/><stop offset="1.000" stop-color="#ffaeb9"/></linearGradient>
<linearGradient id="i25" gradientUnits="userSpaceOnUse" x1="883.3" x2="1004" y1="0" y2="0"><stop offset="0.000" stop-color="#abefff"/><stop offset="0.500" stop-color="#feeeff"/><stop offset="0.750" stop-color="#ffcad9"/><stop offset="1.000" stop-color="#ffacba"/></linearGradient>
<linearGradient id="i26" gradientUnits="userSpaceOnUse" x1="883.3" x2="1004" y1="0" y2="0"><stop offset="0.000" stop-color="#abedff"/><stop offset="0.517" stop-color="#ffeafe"/><stop offset="0.750" stop-color="#ffc7d9"/><stop offset="1.000" stop-color="#ffaaba"/></linearGradient>
<linearGradient id="i27" gradientUnits="userSpaceOnUse" x1="883.3" x2="1004" y1="0" y2="0"><stop offset="0.000" stop-color="#abeaff"/><stop offset="0.517" stop-color="#ffe7fe"/><stop offset="0.750" stop-color="#ffc5d9"/><stop offset="1.000" stop-color="#ffa8bb"/></linearGradient>
<linearGradient id="i28" gradientUnits="userSpaceOnUse" x1="883.3" x2="1004" y1="0" y2="0"><stop offset="0.000" stop-color="#abe7ff"/><stop offset="0.517" stop-color="#ffe4fe"/><stop offset="0.750" stop-color="#ffc3da"/><stop offset="1.000" stop-color="#ffa6bb"/></linearGradient>
<linearGradient id="i29" gradientUnits="userSpaceOnUse" x1="883.3" x2="1004" y1="0" y2="0"><stop offset="0.000" stop-color="#abe4ff"/><stop offset="0.517" stop-color="#ffe2fe"/><stop offset="0.750" stop-color="#ffc0da"/><stop offset="1.000" stop-color="#ffa4bb"/></linearGradient>
<linearGradient id="i30" gradientUnits="userSpaceOnUse" x1="883.3" x2="1004" y1="0" y2="0"><stop offset="0.000" stop-color="#abe2ff"/><stop offset="0.517" stop-color="#ffdffe"/><stop offset="0.750" stop-color="#ffbeda"/><stop offset="1.000" stop-color="#ffa2bc"/></linearGradient>
<linearGradient id="i31" gradientUnits="userSpaceOnUse" x1="883.3" x2="1004" y1="0" y2="0"><stop offset="0.000" stop-color="#acdfff"/><stop offset="0.517" stop-color="#ffdcff"/><stop offset="0.750" stop-color="#ffbcdb"/><stop offset="1.000" stop-color="#ffa1bc"/></linearGradient>
<linearGradient id="i32" gradientUnits="userSpaceOnUse" x1="883.3" x2="1004" y1="0" y2="0"><stop offset="0.000" stop-color="#acdcff"/><stop offset="0.517" stop-color="#ffd9ff"/><stop offset="0.750" stop-color="#ffbadb"/><stop offset="1.000" stop-color="#ff9fbc"/></linearGradient>
<linearGradient id="i33" gradientUnits="userSpaceOnUse" x1="883.3" x2="1004" y1="0" y2="0"><stop offset="0.000" stop-color="#acdaff"/><stop offset="0.517" stop-color="#ffd7ff"/><stop offset="0.750" stop-color="#ffb7db"/><stop offset="1.000" stop-color="#ff9dbd"/></linearGradient>
<linearGradient id="i34" gradientUnits="userSpaceOnUse" x1="883.3" x2="1004" y1="0" y2="0"><stop offset="0.000" stop-color="#acd7ff"/><stop offset="0.517" stop-color="#ffd4ff"/><stop offset="0.750" stop-color="#ffb5dc"/><stop offset="1.000" stop-color="#ff9bbd"/></linearGradient>
<linearGradient id="i35" gradientUnits="userSpaceOnUse" x1="883.3" x2="1004" y1="0" y2="0"><stop offset="0.000" stop-color="#acd4ff"/><stop offset="0.517" stop-color="#fed1ff"/><stop offset="0.750" stop-color="#ffb3dc"/><stop offset="1.000" stop-color="#ff99be"/></linearGradient>
<linearGradient id="i36" gradientUnits="userSpaceOnUse" x1="883.3" x2="1004" y1="0" y2="0"><stop offset="0.000" stop-color="#acd2ff"/><stop offset="0.517" stop-color="#feceff"/><stop offset="0.750" stop-color="#ffb1dc"/><stop offset="1.000" stop-color="#ff97be"/></linearGradient>
<linearGradient id="i37" gradientUnits="userSpaceOnUse" x1="883.3" x2="1004" y1="0" y2="0"><stop offset="0.000" stop-color="#adcfff"/><stop offset="0.517" stop-color="#feccff"/><stop offset="0.767" stop-color="#ffadda"/><stop offset="1.000" stop-color="#ff95be"/></linearGradient>
<linearGradient id="i38" gradientUnits="userSpaceOnUse" x1="883.3" x2="1004" y1="0" y2="0"><stop offset="0.000" stop-color="#adcdff"/><stop offset="0.517" stop-color="#fec9ff"/><stop offset="0.767" stop-color="#ffabdb"/><stop offset="1.000" stop-color="#ff93bf"/></linearGradient>
<linearGradient id="i39" gradientUnits="userSpaceOnUse" x1="883.3" x2="1004" y1="0" y2="0"><stop offset="0.000" stop-color="#adcaff"/><stop offset="0.517" stop-color="#fec6ff"/><stop offset="0.767" stop-color="#ffa9db"/><stop offset="1.000" stop-color="#ff92bf"/></linearGradient>
</defs>
<rect width="1024" height="498" fill="#323232"/>
<g opacity=".999">
<rect width="1024" height="1.5" fill="#262626"/>
<text x="7.5" y="30.5" font-size="24.4" fill="#f4f4f4" textLength="145" lengthAdjust="spacingAndGlyphs" stroke="#f4f4f4" stroke-width="0.1">ColorChecker</text>
<text x="8.5" y="50.7" font-size="10" fill="#e4e4e4" textLength="202" lengthAdjust="spacingAndGlyphs" stroke="#e4e4e4" stroke-width="0.15">Display analysis is performed with the X-Rite/</text>
<text x="8.5" y="64" font-size="10" fill="#e4e4e4" stroke="#e4e4e4" stroke-width="0.15">Pantone ColorChecker<tspan font-size="6" dy="-3.6">®</tspan><tspan dy="3.6"> target colors.</tspan></text>
<rect x="10" y="90.5" width="207.5" height="238.0" fill="#232323"/>
<rect x="37.0" y="90.5" width="1.2" height="238.0" fill="#7d7d7d"/>
<rect x="64.6" y="90.5" width="1.2" height="238.0" fill="#7d7d7d"/>
<rect x="92.2" y="90.5" width="1.2" height="238.0" fill="#7d7d7d"/>
<rect x="119.8" y="90.5" width="1.2" height="238.0" fill="#7d7d7d"/>
<rect x="147.4" y="90.5" width="1.2" height="238.0" fill="#7d7d7d"/>
<rect x="175.0" y="90.5" width="1.2" height="238.0" fill="#7d7d7d"/>
<rect x="202.6" y="90.5" width="1.2" height="238.0" fill="#7d7d7d"/>
<rect x="10.5" y="90.50" width="13.8" height="4.8" rx="1.2" fill="#0c0c0c"/>
<rect x="10.6" y="91.00" width="12.7" height="3.6" rx="1" fill="#d9a07c"/>
<rect x="10.6" y="91.00" width="12.7" height="3.6" rx="1" fill="url(#bsh)"/>
<rect x="10.5" y="95.68" width="15.2" height="4.8" rx="1.2" fill="#0c0c0c"/>
<rect x="10.6" y="96.18" width="14.1" height="3.6" rx="1" fill="#7a4a2c"/>
<rect x="10.6" y="96.18" width="14.1" height="3.6" rx="1" fill="url(#bsh)"/>
<rect x="10.5" y="100.86" width="14.9" height="4.8" rx="1.2" fill="#0c0c0c"/>
<rect x="10.6" y="101.36" width="13.8" height="3.6" rx="1" fill="#96643c"/>
<rect x="10.6" y="101.36" width="13.8" height="3.6" rx="1" fill="url(#bsh)"/>
<rect x="10.5" y="106.05" width="13.8" height="4.8" rx="1.2" fill="#0c0c0c"/>
<rect x="10.6" y="106.55" width="12.7" height="3.6" rx="1" fill="#d8a67e"/>
<rect x="10.6" y="106.55" width="12.7" height="3.6" rx="1" fill="url(#bsh)"/>
<rect x="10.5" y="111.23" width="12.2" height="4.8" rx="1.2" fill="#0c0c0c"/>
<rect x="10.6" y="111.73" width="11.1" height="3.6" rx="1" fill="#c89068"/>
<rect x="10.6" y="111.73" width="11.1" height="3.6" rx="1" fill="url(#bsh)"/>
<rect x="10.5" y="116.41" width="13.3" height="4.8" rx="1.2" fill="#0c0c0c"/>
<rect x="10.6" y="116.91" width="12.2" height="3.6" rx="1" fill="#e6b898"/>
<rect x="10.6" y="116.91" width="12.2" height="3.6" rx="1" fill="url(#bsh)"/>
<rect x="10.5" y="121.59" width="15.2" height="4.8" rx="1.2" fill="#0c0c0c"/>
<rect x="10.6" y="122.09" width="14.1" height="3.6" rx="1" fill="#c8946c"/>
<rect x="10.6" y="122.09" width="14.1" height="3.6" rx="1" fill="url(#bsh)"/>
<rect x="10.5" y="126.78" width="16.7" height="4.8" rx="1.2" fill="#0c0c0c"/>
<rect x="10.6" y="127.28" width="15.6" height="3.6" rx="1" fill="#8e5a36"/>
<rect x="10.6" y="127.28" width="15.6" height="3.6" rx="1" fill="url(#bsh)"/>
<rect x="10.5" y="131.96" width="15.2" height="4.8" rx="1.2" fill="#0c0c0c"/>
<rect x="10.6" y="132.46" width="14.1" height="3.6" rx="1" fill="#9a6238"/>
<rect x="10.6" y="132.46" width="14.1" height="3.6" rx="1" fill="url(#bsh)"/>
<rect x="10.5" y="137.14" width="10.4" height="4.8" rx="1.2" fill="#0c0c0c"/>
<rect x="10.6" y="137.64" width="9.3" height="3.6" rx="1" fill="#d8aa84"/>
<rect x="10.6" y="137.64" width="9.3" height="3.6" rx="1" fill="url(#bsh)"/>
<rect x="10.5" y="142.32" width="20.2" height="4.8" rx="1.2" fill="#0c0c0c"/>
<rect x="10.6" y="142.82" width="19.1" height="3.6" rx="1" fill="#6e4630"/>
<rect x="10.6" y="142.82" width="19.1" height="3.6" rx="1" fill="url(#bsh)"/>
<rect x="10.5" y="147.50" width="14.9" height="4.8" rx="1.2" fill="#0c0c0c"/>
<rect x="10.6" y="148.00" width="13.8" height="3.6" rx="1" fill="#a8764e"/>
<rect x="10.6" y="148.00" width="13.8" height="3.6" rx="1" fill="url(#bsh)"/>
<rect x="10.5" y="152.69" width="13.3" height="4.8" rx="1.2" fill="#0c0c0c"/>
<rect x="10.6" y="153.19" width="12.2" height="3.6" rx="1" fill="#d09c78"/>
<rect x="10.6" y="153.19" width="12.2" height="3.6" rx="1" fill="url(#bsh)"/>
<rect x="10.5" y="157.87" width="10.7" height="4.8" rx="1.2" fill="#0c0c0c"/>
<rect x="10.6" y="158.37" width="9.6" height="3.6" rx="1" fill="#ecc8ac"/>
<rect x="10.6" y="158.37" width="9.6" height="3.6" rx="1" fill="url(#bsh)"/>
<rect x="10.5" y="163.05" width="17.8" height="4.8" rx="1.2" fill="#0c0c0c"/>
<rect x="10.6" y="163.55" width="16.7" height="3.6" rx="1" fill="#d8a47c"/>
<rect x="10.6" y="163.55" width="16.7" height="3.6" rx="1" fill="url(#bsh)"/>
<rect x="10.5" y="168.23" width="15.2" height="4.8" rx="1.2" fill="#0c0c0c"/>
<rect x="10.6" y="168.73" width="14.1" height="3.6" rx="1" fill="#b07e58"/>
<rect x="10.6" y="168.73" width="14.1" height="3.6" rx="1" fill="url(#bsh)"/>
<rect x="10.5" y="173.42" width="12.7" height="4.8" rx="1.2" fill="#0c0c0c"/>
<rect x="10.6" y="173.92" width="11.6" height="3.6" rx="1" fill="#6a4632"/>
<rect x="10.6" y="173.92" width="11.6" height="3.6" rx="1" fill="url(#bsh)"/>
<rect x="10.5" y="178.60" width="22.7" height="4.8" rx="1.2" fill="#0c0c0c"/>
<rect x="10.6" y="179.10" width="21.6" height="3.6" rx="1" fill="#e8e020"/>
<rect x="10.6" y="179.10" width="21.6" height="3.6" rx="1" fill="url(#bsh)"/>
<rect x="10.5" y="183.78" width="7.9" height="4.8" rx="1.2" fill="#0c0c0c"/>
<rect x="10.6" y="184.28" width="6.8" height="3.6" rx="1" fill="#e020e0"/>
<rect x="10.6" y="184.28" width="6.8" height="3.6" rx="1" fill="url(#bsh)"/>
<rect x="10.5" y="188.96" width="6.9" height="4.8" rx="1.2" fill="#0c0c0c"/>
<rect x="10.6" y="189.46" width="5.8" height="3.6" rx="1" fill="#20e0e0"/>
<rect x="10.6" y="189.46" width="5.8" height="3.6" rx="1" fill="url(#bsh)"/>
<rect x="10.5" y="194.14" width="44.6" height="4.8" rx="1.2" fill="#0c0c0c"/>
<rect x="10.6" y="194.64" width="43.5" height="3.6" rx="1" fill="#1414c8"/>
<rect x="10.6" y="194.64" width="43.5" height="3.6" rx="1" fill="url(#bsh)"/>
<rect x="10.5" y="199.33" width="8.4" height="4.8" rx="1.2" fill="#0c0c0c"/>
<rect x="10.6" y="199.83" width="7.3" height="3.6" rx="1" fill="#20d020"/>
<rect x="10.6" y="199.83" width="7.3" height="3.6" rx="1" fill="url(#bsh)"/>
<rect x="10.5" y="204.51" width="17.6" height="4.8" rx="1.2" fill="#0c0c0c"/>
<rect x="10.6" y="205.01" width="16.4" height="3.6" rx="1" fill="#e01010"/>
<rect x="10.6" y="205.01" width="16.4" height="3.6" rx="1" fill="url(#bsh)"/>
<rect x="10.5" y="209.69" width="34.7" height="4.8" rx="1.2" fill="#0c0c0c"/>
<rect x="10.6" y="210.19" width="33.6" height="3.6" rx="1" fill="#0c88a4"/>
<rect x="10.6" y="210.19" width="33.6" height="3.6" rx="1" fill="url(#bsh)"/>
<rect x="10.5" y="214.87" width="12.6" height="4.8" rx="1.2" fill="#0c0c0c"/>
<rect x="10.6" y="215.37" width="11.5" height="3.6" rx="1" fill="#c85c9c"/>
<rect x="10.6" y="215.37" width="11.5" height="3.6" rx="1" fill="url(#bsh)"/>
<rect x="10.5" y="220.06" width="15.8" height="4.8" rx="1.2" fill="#0c0c0c"/>
<rect x="10.6" y="220.56" width="14.7" height="3.6" rx="1" fill="#e8c828"/>
<rect x="10.6" y="220.56" width="14.7" height="3.6" rx="1" fill="url(#bsh)"/>
<rect x="10.5" y="225.24" width="19.6" height="4.8" rx="1.2" fill="#0c0c0c"/>
<rect x="10.6" y="225.74" width="18.5" height="3.6" rx="1" fill="#b0303c"/>
<rect x="10.6" y="225.74" width="18.5" height="3.6" rx="1" fill="url(#bsh)"/>
<rect x="10.5" y="230.42" width="12.3" height="4.8" rx="1.2" fill="#0c0c0c"/>
<rect x="10.6" y="230.92" width="11.2" height="3.6" rx="1" fill="#4c984c"/>
<rect x="10.6" y="230.92" width="11.2" height="3.6" rx="1" fill="url(#bsh)"/>
<rect x="10.5" y="235.60" width="11.3" height="4.8" rx="1.2" fill="#0c0c0c"/>
<rect x="10.6" y="236.10" width="10.2" height="3.6" rx="1" fill="#343c98"/>
<rect x="10.6" y="236.10" width="10.2" height="3.6" rx="1" fill="url(#bsh)"/>
<rect x="10.5" y="240.78" width="11.3" height="4.8" rx="1.2" fill="#0c0c0c"/>
<rect x="10.6" y="241.28" width="10.2" height="3.6" rx="1" fill="#e4a42c"/>
<rect x="10.6" y="241.28" width="10.2" height="3.6" rx="1" fill="url(#bsh)"/>
<rect x="10.5" y="245.97" width="14.7" height="4.8" rx="1.2" fill="#0c0c0c"/>
<rect x="10.6" y="246.47" width="13.6" height="3.6" rx="1" fill="#a0c040"/>
<rect x="10.6" y="246.47" width="13.6" height="3.6" rx="1" fill="url(#bsh)"/>
<rect x="10.5" y="251.15" width="11.3" height="4.8" rx="1.2" fill="#0c0c0c"/>
<rect x="10.6" y="251.65" width="10.2" height="3.6" rx="1" fill="#603c6c"/>
<rect x="10.6" y="251.65" width="10.2" height="3.6" rx="1" fill="url(#bsh)"/>
<rect x="10.5" y="256.33" width="13.4" height="4.8" rx="1.2" fill="#0c0c0c"/>
<rect x="10.6" y="256.83" width="12.3" height="3.6" rx="1" fill="#c4585f"/>
<rect x="10.6" y="256.83" width="12.3" height="3.6" rx="1" fill="url(#bsh)"/>
<rect x="10.5" y="261.51" width="14.0" height="4.8" rx="1.2" fill="#0c0c0c"/>
<rect x="10.6" y="262.01" width="12.9" height="3.6" rx="1" fill="#505ba6"/>
<rect x="10.6" y="262.01" width="12.9" height="3.6" rx="1" fill="url(#bsh)"/>
<rect x="10.5" y="266.70" width="12.7" height="4.8" rx="1.2" fill="#0c0c0c"/>
<rect x="10.6" y="267.20" width="11.6" height="3.6" rx="1" fill="#d67e2c"/>
<rect x="10.6" y="267.20" width="11.6" height="3.6" rx="1" fill="url(#bsh)"/>
<rect x="10.5" y="271.88" width="16.6" height="4.8" rx="1.2" fill="#0c0c0c"/>
<rect x="10.6" y="272.38" width="15.5" height="3.6" rx="1" fill="#67bdaa"/>
<rect x="10.6" y="272.38" width="15.5" height="3.6" rx="1" fill="url(#bsh)"/>
<rect x="10.5" y="277.06" width="21.4" height="4.8" rx="1.2" fill="#0c0c0c"/>
<rect x="10.6" y="277.56" width="20.3" height="3.6" rx="1" fill="#8580b1"/>
<rect x="10.6" y="277.56" width="20.3" height="3.6" rx="1" fill="url(#bsh)"/>
<rect x="10.5" y="282.24" width="14.6" height="4.8" rx="1.2" fill="#0c0c0c"/>
<rect x="10.6" y="282.74" width="13.5" height="3.6" rx="1" fill="#576c43"/>
<rect x="10.6" y="282.74" width="13.5" height="3.6" rx="1" fill="url(#bsh)"/>
<rect x="10.5" y="287.42" width="19.2" height="4.8" rx="1.2" fill="#0c0c0c"/>
<rect x="10.6" y="287.92" width="18.1" height="3.6" rx="1" fill="#627a9d"/>
<rect x="10.6" y="287.92" width="18.1" height="3.6" rx="1" fill="url(#bsh)"/>
<rect x="10.5" y="292.61" width="11.6" height="4.8" rx="1.2" fill="#0c0c0c"/>
<rect x="10.6" y="293.11" width="10.5" height="3.6" rx="1" fill="#c29682"/>
<rect x="10.6" y="293.11" width="10.5" height="3.6" rx="1" fill="url(#bsh)"/>
<rect x="10.5" y="297.79" width="21.4" height="4.8" rx="1.2" fill="#0c0c0c"/>
<rect x="10.6" y="298.29" width="20.3" height="3.6" rx="1" fill="#735244"/>
<rect x="10.6" y="298.29" width="20.3" height="3.6" rx="1" fill="url(#bsh)"/>
<rect x="10.5" y="302.97" width="24.6" height="4.8" rx="1.2" fill="#0c0c0c"/>
<rect x="10.6" y="303.47" width="23.5" height="3.6" rx="1" fill="#a0a0a0"/>
<rect x="10.6" y="303.47" width="23.5" height="3.6" rx="1" fill="url(#bsh)"/>
<rect x="10.5" y="308.15" width="19.8" height="4.8" rx="1.2" fill="#0c0c0c"/>
<rect x="10.6" y="308.65" width="18.7" height="3.6" rx="1" fill="#bcbcbc"/>
<rect x="10.6" y="308.65" width="18.7" height="3.6" rx="1" fill="url(#bsh)"/>
<rect x="10.5" y="313.34" width="20.2" height="4.8" rx="1.2" fill="#0c0c0c"/>
<rect x="10.6" y="313.84" width="19.1" height="3.6" rx="1" fill="#d2d2d2"/>
<rect x="10.6" y="313.84" width="19.1" height="3.6" rx="1" fill="url(#bsh)"/>
<rect x="10.5" y="318.52" width="29.3" height="4.8" rx="1.2" fill="#0c0c0c"/>
<rect x="10.6" y="319.02" width="28.2" height="3.6" rx="1" fill="#e6e6e6"/>
<rect x="10.6" y="319.02" width="28.2" height="3.6" rx="1" fill="url(#bsh)"/>
<rect x="10.5" y="323.70" width="36.6" height="4.8" rx="1.2" fill="#0c0c0c"/>
<rect x="10.6" y="324.20" width="35.5" height="3.6" rx="1" fill="#fafafa"/>
<rect x="10.6" y="324.20" width="35.5" height="3.6" rx="1" fill="url(#bsh)"/>
<rect x="10" y="90.5" width="207.5" height="238.0" fill="none" stroke="#9a9a9a" stroke-width="1.2"/>
<rect x="9.4" y="328.5" width="1.2" height="3.5" fill="#b0b0b0"/>
<text x="10.0" y="343.2" font-size="8.2" fill="#d0d0d0" text-anchor="middle">0</text>
<rect x="37.0" y="328.5" width="1.2" height="3.5" fill="#b0b0b0"/>
<text x="37.6" y="343.2" font-size="8.2" fill="#d0d0d0" text-anchor="middle">2</text>
<rect x="64.6" y="328.5" width="1.2" height="3.5" fill="#b0b0b0"/>
<text x="65.2" y="343.2" font-size="8.2" fill="#d0d0d0" text-anchor="middle">4</text>
<rect x="92.2" y="328.5" width="1.2" height="3.5" fill="#b0b0b0"/>
<text x="92.8" y="343.2" font-size="8.2" fill="#d0d0d0" text-anchor="middle">6</text>
<rect x="119.8" y="328.5" width="1.2" height="3.5" fill="#b0b0b0"/>
<text x="120.4" y="343.2" font-size="8.2" fill="#d0d0d0" text-anchor="middle">8</text>
<rect x="147.4" y="328.5" width="1.2" height="3.5" fill="#b0b0b0"/>
<text x="148.0" y="343.2" font-size="8.2" fill="#d0d0d0" text-anchor="middle">10</text>
<rect x="175.0" y="328.5" width="1.2" height="3.5" fill="#b0b0b0"/>
<text x="175.6" y="343.2" font-size="8.2" fill="#d0d0d0" text-anchor="middle">12</text>
<rect x="202.6" y="328.5" width="1.2" height="3.5" fill="#b0b0b0"/>
<text x="203.2" y="343.2" font-size="8.2" fill="#d0d0d0" text-anchor="middle">14</text>
<text x="10.6" y="89.2" font-size="9" fill="#ececec" textLength="37" lengthAdjust="spacingAndGlyphs" stroke="#ececec" stroke-width="0.25">Avg: 1,21</text>
<text x="113.7" y="87.6" font-size="8.7" fill="#c4c4c4" text-anchor="middle" textLength="47.5" lengthAdjust="spacingAndGlyphs">DeltaE 2000</text>
<text x="216.5" y="89.2" font-size="9" fill="#ececec" text-anchor="end" textLength="39.5" lengthAdjust="spacingAndGlyphs" stroke="#ececec" stroke-width="0.25">Max: 3,21</text>
<rect x="244.4" y="28.6" width="93.4" height="204.20000000000002" fill="#232323"/>
<rect x="244.4" y="53.52" width="93.4" height="1.2" fill="#6e6e6e"/>
<rect x="244.4" y="79.05" width="93.4" height="1.2" fill="#6e6e6e"/>
<rect x="244.4" y="104.58" width="93.4" height="1.2" fill="#6e6e6e"/>
<rect x="244.4" y="130.10" width="93.4" height="1.2" fill="#6e6e6e"/>
<rect x="244.4" y="155.63" width="93.4" height="1.2" fill="#6e6e6e"/>
<rect x="244.4" y="181.15" width="93.4" height="1.2" fill="#6e6e6e"/>
<rect x="244.4" y="206.68" width="93.4" height="1.2" fill="#6e6e6e"/>
<rect x="253.3" y="129.8" width="74.6" height="1.8" fill="#131313"/>
<rect x="244.4" y="28.6" width="93.4" height="204.20000000000002" fill="none" stroke="#9a9a9a" stroke-width="1.1"/>
<rect x="241.4" y="28.00" width="3" height="1.2" fill="#b0b0b0"/>
<text x="241.2" y="32.1" font-size="8.3" fill="#d6d6d6" text-anchor="end">4</text>
<rect x="241.4" y="53.52" width="3" height="1.2" fill="#b0b0b0"/>
<text x="241.2" y="57.6" font-size="8.3" fill="#d6d6d6" text-anchor="end">3</text>
<rect x="241.4" y="79.05" width="3" height="1.2" fill="#b0b0b0"/>
<text x="241.2" y="83.2" font-size="8.3" fill="#d6d6d6" text-anchor="end">2</text>
<rect x="241.4" y="104.58" width="3" height="1.2" fill="#b0b0b0"/>
<text x="241.2" y="108.7" font-size="8.3" fill="#d6d6d6" text-anchor="end">1</text>
<rect x="241.4" y="130.10" width="3" height="1.2" fill="#b0b0b0"/>
<text x="241.2" y="134.2" font-size="8.3" fill="#d6d6d6" text-anchor="end">0</text>
<rect x="241.4" y="155.63" width="3" height="1.2" fill="#b0b0b0"/>
<text x="241.2" y="159.7" font-size="8.3" fill="#d6d6d6" text-anchor="end">-1</text>
<rect x="241.4" y="181.15" width="3" height="1.2" fill="#b0b0b0"/>
<text x="241.2" y="185.2" font-size="8.3" fill="#d6d6d6" text-anchor="end">-2</text>
<rect x="241.4" y="206.68" width="3" height="1.2" fill="#b0b0b0"/>
<text x="241.2" y="210.8" font-size="8.3" fill="#d6d6d6" text-anchor="end">-3</text>
<rect x="241.4" y="232.20" width="3" height="1.2" fill="#b0b0b0"/>
<text x="241.2" y="236.3" font-size="8.3" fill="#d6d6d6" text-anchor="end">-4</text>
<text x="285.6" y="25.3" font-size="8.6" fill="#cfcfcf" text-anchor="middle" textLength="27.5" lengthAdjust="spacingAndGlyphs">Delta L</text>
<rect x="364.1" y="28.6" width="93.4" height="204.20000000000002" fill="#232323"/>
<rect x="364.1" y="53.52" width="93.4" height="1.2" fill="#6e6e6e"/>
<rect x="364.1" y="79.05" width="93.4" height="1.2" fill="#6e6e6e"/>
<rect x="364.1" y="104.58" width="93.4" height="1.2" fill="#6e6e6e"/>
<rect x="364.1" y="130.10" width="93.4" height="1.2" fill="#6e6e6e"/>
<rect x="364.1" y="155.63" width="93.4" height="1.2" fill="#6e6e6e"/>
<rect x="364.1" y="181.15" width="93.4" height="1.2" fill="#6e6e6e"/>
<rect x="364.1" y="206.68" width="93.4" height="1.2" fill="#6e6e6e"/>
<rect x="373.0" y="83.3" width="74.6" height="48.0" fill="#151515"/>
<rect x="373.8" y="84.1" width="73" height="46.2" fill="url(#dc)"/>
<rect x="364.1" y="28.6" width="93.4" height="204.20000000000002" fill="none" stroke="#9a9a9a" stroke-width="1.1"/>
<rect x="361.1" y="28.00" width="3" height="1.2" fill="#b0b0b0"/>
<text x="360.9" y="32.1" font-size="8.3" fill="#d6d6d6" text-anchor="end">4</text>
<rect x="361.1" y="53.52" width="3" height="1.2" fill="#b0b0b0"/>
<text x="360.9" y="57.6" font-size="8.3" fill="#d6d6d6" text-anchor="end">3</text>
<rect x="361.1" y="79.05" width="3" height="1.2" fill="#b0b0b0"/>
<text x="360.9" y="83.2" font-size="8.3" fill="#d6d6d6" text-anchor="end">2</text>
<rect x="361.1" y="104.58" width="3" height="1.2" fill="#b0b0b0"/>
<text x="360.9" y="108.7" font-size="8.3" fill="#d6d6d6" text-anchor="end">1</text>
<rect x="361.1" y="130.10" width="3" height="1.2" fill="#b0b0b0"/>
<text x="360.9" y="134.2" font-size="8.3" fill="#d6d6d6" text-anchor="end">0</text>
<rect x="361.1" y="155.63" width="3" height="1.2" fill="#b0b0b0"/>
<text x="360.9" y="159.7" font-size="8.3" fill="#d6d6d6" text-anchor="end">-1</text>
<rect x="361.1" y="181.15" width="3" height="1.2" fill="#b0b0b0"/>
<text x="360.9" y="185.2" font-size="8.3" fill="#d6d6d6" text-anchor="end">-2</text>
<rect x="361.1" y="206.68" width="3" height="1.2" fill="#b0b0b0"/>
<text x="360.9" y="210.8" font-size="8.3" fill="#d6d6d6" text-anchor="end">-3</text>
<rect x="361.1" y="232.20" width="3" height="1.2" fill="#b0b0b0"/>
<text x="360.9" y="236.3" font-size="8.3" fill="#d6d6d6" text-anchor="end">-4</text>
<text x="405.3" y="25.3" font-size="8.6" fill="#cfcfcf" text-anchor="middle" textLength="27.5" lengthAdjust="spacingAndGlyphs">Delta C</text>
<rect x="483.8" y="28.6" width="93.4" height="204.20000000000002" fill="#232323"/>
<rect x="483.8" y="53.52" width="93.4" height="1.2" fill="#6e6e6e"/>
<rect x="483.8" y="79.05" width="93.4" height="1.2" fill="#6e6e6e"/>
<rect x="483.8" y="104.58" width="93.4" height="1.2" fill="#6e6e6e"/>
<rect x="483.8" y="130.10" width="93.4" height="1.2" fill="#6e6e6e"/>
<rect x="483.8" y="155.63" width="93.4" height="1.2" fill="#6e6e6e"/>
<rect x="483.8" y="181.15" width="93.4" height="1.2" fill="#6e6e6e"/>
<rect x="483.8" y="206.68" width="93.4" height="1.2" fill="#6e6e6e"/>
<rect x="492.7" y="129.8" width="74.6" height="1.8" fill="#131313"/>
<rect x="483.8" y="28.6" width="93.4" height="204.20000000000002" fill="none" stroke="#9a9a9a" stroke-width="1.1"/>
<rect x="480.8" y="28.00" width="3" height="1.2" fill="#b0b0b0"/>
<text x="480.6" y="32.1" font-size="8.3" fill="#d6d6d6" text-anchor="end">4</text>
<rect x="480.8" y="53.52" width="3" height="1.2" fill="#b0b0b0"/>
<text x="480.6" y="57.6" font-size="8.3" fill="#d6d6d6" text-anchor="end">3</text>
<rect x="480.8" y="79.05" width="3" height="1.2" fill="#b0b0b0"/>
<text x="480.6" y="83.2" font-size="8.3" fill="#d6d6d6" text-anchor="end">2</text>
<rect x="480.8" y="104.58" width="3" height="1.2" fill="#b0b0b0"/>
<text x="480.6" y="108.7" font-size="8.3" fill="#d6d6d6" text-anchor="end">1</text>
<rect x="480.8" y="130.10" width="3" height="1.2" fill="#b0b0b0"/>
<text x="480.6" y="134.2" font-size="8.3" fill="#d6d6d6" text-anchor="end">0</text>
<rect x="480.8" y="155.63" width="3" height="1.2" fill="#b0b0b0"/>
<text x="480.6" y="159.7" font-size="8.3" fill="#d6d6d6" text-anchor="end">-1</text>
<rect x="480.8" y="181.15" width="3" height="1.2" fill="#b0b0b0"/>
<text x="480.6" y="185.2" font-size="8.3" fill="#d6d6d6" text-anchor="end">-2</text>
<rect x="480.8" y="206.68" width="3" height="1.2" fill="#b0b0b0"/>
<text x="480.6" y="210.8" font-size="8.3" fill="#d6d6d6" text-anchor="end">-3</text>
<rect x="480.8" y="232.20" width="3" height="1.2" fill="#b0b0b0"/>
<text x="480.6" y="236.3" font-size="8.3" fill="#d6d6d6" text-anchor="end">-4</text>
<text x="525.0" y="25.3" font-size="8.6" fill="#cfcfcf" text-anchor="middle" textLength="27.5" lengthAdjust="spacingAndGlyphs">Delta H</text>
<rect x="230" y="241" width="358" height="97" fill="#000"/>
<clipPath id="swc"><rect x="230" y="241" width="358" height="97"/></clipPath><g clip-path="url(#swc)">
<rect x="240.0" y="244.4" width="35.3" height="71.7" fill="#ffffff"/><rect x="240.0" y="280" width="35.3" height="36.1" fill="#fdfdfd"/>
<text x="257.6" y="325" font-size="7.6" fill="#f0f0f0" text-anchor="middle" textLength="20" lengthAdjust="spacingAndGlyphs" font-weight="bold">White</text>
<rect x="281.2" y="244.4" width="35.3" height="71.7" fill="#e7e5e4"/><rect x="281.2" y="280" width="35.3" height="36.1" fill="#e5e5e5"/>
<text x="298.9" y="325" font-size="7.6" fill="#f0f0f0" text-anchor="middle" textLength="26.5" lengthAdjust="spacingAndGlyphs" font-weight="bold">Gray 80</text>
<rect x="322.5" y="244.4" width="35.3" height="71.7" fill="#d2d0cf"/><rect x="322.5" y="280" width="35.3" height="36.1" fill="#d1d1d1"/>
<text x="340.1" y="325" font-size="7.6" fill="#f0f0f0" text-anchor="middle" textLength="26.5" lengthAdjust="spacingAndGlyphs" font-weight="bold">Gray 65</text>
<rect x="363.8" y="244.4" width="35.3" height="71.7" fill="#bab8b7"/><rect x="363.8" y="280" width="35.3" height="36.1" fill="#bababa"/>
<text x="381.4" y="325" font-size="7.6" fill="#f0f0f0" text-anchor="middle" textLength="26.5" lengthAdjust="spacingAndGlyphs" font-weight="bold">Gray 50</text>
<rect x="405.0" y="244.4" width="35.3" height="71.7" fill="#9e9d9b"/><rect x="405.0" y="280" width="35.3" height="36.1" fill="#9d9d9d"/>
<text x="422.6" y="325" font-size="7.6" fill="#f0f0f0" text-anchor="middle" textLength="26.5" lengthAdjust="spacingAndGlyphs" font-weight="bold">Gray 35</text>
<rect x="446.2" y="244.4" width="35.3" height="71.7" fill="#714b3e"/><rect x="446.2" y="280" width="35.3" height="36.1" fill="#73503f"/>
<rect x="446.6" y="244.8" width="34.5" height="70.9" fill="none" stroke="#b8b0ac" stroke-width=".8" stroke-opacity=".7"/>
<text x="463.9" y="325" font-size="7.6" fill="#f0f0f0" text-anchor="middle" textLength="32" lengthAdjust="spacingAndGlyphs" font-weight="bold">Dark Skin</text>
<rect x="487.5" y="244.4" width="35.3" height="71.7" fill="#c4917e"/><rect x="487.5" y="280" width="35.3" height="36.1" fill="#c49480"/>
<rect x="487.9" y="244.8" width="34.5" height="70.9" fill="none" stroke="#b8b0ac" stroke-width=".8" stroke-opacity=".7"/>
<text x="505.1" y="325" font-size="7.6" fill="#f0f0f0" text-anchor="middle" textLength="32.5" lengthAdjust="spacingAndGlyphs" font-weight="bold">Light Skin</text>
<rect x="528.8" y="244.4" width="35.3" height="71.7" fill="#5b7a9d"/><rect x="528.8" y="280" width="35.3" height="36.1" fill="#5f7a9e"/>
<rect x="529.1" y="244.8" width="34.5" height="70.9" fill="none" stroke="#b8b0ac" stroke-width=".8" stroke-opacity=".7"/>
<text x="546.4" y="325" font-size="7.6" fill="#f0f0f0" text-anchor="middle" textLength="28.5" lengthAdjust="spacingAndGlyphs" font-weight="bold">Blue Sky</text>
<rect x="570.0" y="244.4" width="35.3" height="71.7" fill="#566a3f"/><rect x="570.0" y="280" width="35.3" height="36.1" fill="#576b41"/>
<rect x="570.4" y="244.8" width="34.5" height="70.9" fill="none" stroke="#b8b0ac" stroke-width=".8" stroke-opacity=".7"/>
<text x="587.6" y="325" font-size="7.6" fill="#f0f0f0" text-anchor="middle" textLength="25" lengthAdjust="spacingAndGlyphs" font-weight="bold">Foliage</text>
</g>
<text transform="translate(237.3,270.5) rotate(-90)" font-size="7.2" font-weight="bold" fill="#f0f0f0" textLength="20" lengthAdjust="spacingAndGlyphs">Actual</text>
<text transform="translate(237.3,311) rotate(-90)" font-size="7.2" font-weight="bold" fill="#f0f0f0" textLength="20.5" lengthAdjust="spacingAndGlyphs">Target</text>
<rect x="230" y="337.7" width="358" height="10" fill="#6b6b6b"/>
<rect x="240" y="338.5" width="62" height="8.4" rx="4" fill="#484848"/>
<path d="M233.2 342.7l3.2-3.4v6.8z" fill="#2a2a2a"/><path d="M585.3 342.7l-3.2-3.4v6.8z" fill="#2a2a2a"/>
<rect x="595" y="11.5" width="417" height="334.5" fill="none" stroke="#9b9b9b" stroke-width="4.2"/>
<rect x="620.3" y="27.2" width="386.9" height="299.1" fill="#232323"/>
<g clip-path="url(#plc)"><g clip-path="url(#loc)"><g filter="url(#vb)"><rect x="632" y="33.0" width="58" height="3.3" fill="url(#o0)"/><rect x="627" y="36.0" width="92" height="3.3" fill="url(#o1)"/><rect x="624" y="39.0" width="122" height="3.3" fill="url(#o2)"/><rect x="622" y="42.0" width="150" height="3.3" fill="url(#o3)"/><rect x="621" y="45.0" width="177" height="3.3" fill="url(#o4)"/><rect x="620" y="48.0" width="204" height="3.3" fill="url(#o5)"/><rect x="620" y="51.0" width="230" height="3.3" fill="url(#o6)"/><rect x="620" y="54.0" width="255" height="3.3" fill="url(#o7)"/><rect x="620" y="57.0" width="281" height="3.3" fill="url(#o8)"/><rect x="620" y="60.0" width="307" height="3.3" fill="url(#o9)"/><rect x="620" y="63.0" width="333" height="3.3" fill="url(#o10)"/><rect x="620" y="66.0" width="359" height="3.3" fill="url(#o11)"/><rect x="621" y="69.0" width="384" height="3.3" fill="url(#o12)"/><rect x="621" y="72.0" width="386" height="3.3" fill="url(#o13)"/><rect x="622" y="75.0" width="385" height="3.3" fill="url(#o14)"/><rect x="622" y="78.0" width="385" height="3.3" fill="url(#o15)"/><rect x="623" y="81.0" width="384" height="3.3" fill="url(#o16)"/><rect x="624" y="84.0" width="383" height="3.3" fill="url(#o17)"/><rect x="625" y="87.0" width="382" height="3.3" fill="url(#o18)"/><rect x="626" y="90.0" width="381" height="3.3" fill="url(#o19)"/><rect x="627" y="93.0" width="378" height="3.3" fill="url(#o20)"/><rect x="628" y="96.0" width="374" height="3.3" fill="url(#o21)"/><rect x="629" y="99.0" width="370" height="3.3" fill="url(#o22)"/><rect x="630" y="102.0" width="366" height="3.3" fill="url(#o23)"/><rect x="631" y="105.0" width="362" height="3.3" fill="url(#o24)"/><rect x="632" y="108.0" width="358" height="3.3" fill="url(#o25)"/><rect x="633" y="111.0" width="354" height="3.3" fill="url(#o26)"/><rect x="634" y="114.0" width="351" height="3.3" fill="url(#o27)"/><rect x="635" y="117.0" width="347" height="3.3" fill="url(#o28)"/><rect x="636" y="120.0" width="343" height="3.3" fill="url(#o29)"/><rect x="638" y="123.0" width="338" height="3.3" fill="url(#o30)"/><rect x="639" y="126.0" width="334" height="3.3" fill="url(#o31)"/><rect x="640" y="129.0" width="330" height="3.3" fill="url(#o32)"/><rect x="641" y="132.0" width="326" height="3.3" fill="url(#o33)"/><rect x="643" y="135.0" width="321" height="3.3" fill="url(#o34)"/><rect x="644" y="138.0" width="317" height="3.3" fill="url(#o35)"/><rect x="645" y="141.0" width="313" height="3.3" fill="url(#o36)"/><rect x="647" y="144.0" width="308" height="3.3" fill="url(#o37)"/><rect x="648" y="147.0" width="305" height="3.3" fill="url(#o38)"/><rect x="649" y="150.0" width="301" height="3.3" fill="url(#o39)"/><rect x="651" y="153.0" width="296" height="3.3" fill="url(#o40)"/><rect x="652" y="156.0" width="292" height="3.3" fill="url(#o41)"/><rect x="654" y="159.0" width="287" height="3.3" fill="url(#o42)"/><rect x="656" y="162.0" width="282" height="3.3" fill="url(#o43)"/><rect x="657" y="165.0" width="278" height="3.3" fill="url(#o44)"/><rect x="659" y="168.0" width="273" height="3.3" fill="url(#o45)"/><rect x="660" y="171.0" width="269" height="3.3" fill="url(#o46)"/><rect x="662" y="174.0" width="264" height="3.3" fill="url(#o47)"/><rect x="664" y="177.0" width="260" height="3.3" fill="url(#o48)"/><rect x="665" y="180.0" width="256" height="3.3" fill="url(#o49)"/><rect x="667" y="183.0" width="251" height="3.3" fill="url(#o50)"/><rect x="669" y="186.0" width="246" height="3.3" fill="url(#o51)"/><rect x="671" y="189.0" width="241" height="3.3" fill="url(#o52)"/><rect x="672" y="192.0" width="237" height="3.3" fill="url(#o53)"/><rect x="674" y="195.0" width="232" height="3.3" fill="url(#o54)"/><rect x="676" y="198.0" width="227" height="3.3" fill="url(#o55)"/><rect x="678" y="201.0" width="222" height="3.3" fill="url(#o56)"/><rect x="680" y="204.0" width="217" height="3.3" fill="url(#o57)"/><rect x="681" y="207.0" width="214" height="3.3" fill="url(#o58)"/><rect x="683" y="210.0" width="209" height="3.3" fill="url(#o59)"/><rect x="685" y="213.0" width="204" height="3.3" fill="url(#o60)"/><rect x="687" y="216.0" width="199" height="3.3" fill="url(#o61)"/><rect x="689" y="219.0" width="194" height="3.3" fill="url(#o62)"/><rect x="691" y="222.0" width="189" height="3.3" fill="url(#o63)"/><rect x="693" y="225.0" width="184" height="3.3" fill="url(#o64)"/><rect x="695" y="228.0" width="179" height="3.3" fill="url(#o65)"/><rect x="697" y="231.0" width="174" height="3.3" fill="url(#o66)"/><rect x="699" y="234.0" width="169" height="3.3" fill="url(#o67)"/><rect x="701" y="237.0" width="164" height="3.3" fill="url(#o68)"/><rect x="703" y="240.0" width="160" height="3.3" fill="url(#o69)"/><rect x="705" y="243.0" width="155" height="3.3" fill="url(#o70)"/><rect x="708" y="246.0" width="149" height="3.3" fill="url(#o71)"/><rect x="710" y="249.0" width="144" height="3.3" fill="url(#o72)"/><rect x="712" y="252.0" width="139" height="3.3" fill="url(#o73)"/><rect x="715" y="255.0" width="133" height="3.3" fill="url(#o74)"/><rect x="717" y="258.0" width="128" height="3.3" fill="url(#o75)"/><rect x="719" y="261.0" width="123" height="3.3" fill="url(#o76)"/><rect x="722" y="264.0" width="117" height="3.3" fill="url(#o77)"/><rect x="724" y="267.0" width="112" height="3.3" fill="url(#o78)"/><rect x="727" y="270.0" width="107" height="3.3" fill="url(#o79)"/><rect x="730" y="273.0" width="101" height="3.3" fill="url(#o80)"/><rect x="733" y="276.0" width="95" height="3.3" fill="url(#o81)"/><rect x="736" y="279.0" width="89" height="3.3" fill="url(#o82)"/><rect x="739" y="282.0" width="83" height="3.3" fill="url(#o83)"/><rect x="742" y="285.0" width="77" height="3.3" fill="url(#o84)"/><rect x="745" y="288.0" width="71" height="3.3" fill="url(#o85)"/><rect x="748" y="291.0" width="65" height="3.3" fill="url(#o86)"/><rect x="752" y="294.0" width="58" height="3.3" fill="url(#o87)"/><rect x="755" y="297.0" width="52" height="3.3" fill="url(#o88)"/><rect x="759" y="300.0" width="46" height="3.3" fill="url(#o89)"/><rect x="763" y="303.0" width="39" height="3.3" fill="url(#o90)"/><rect x="766" y="306.0" width="33" height="3.3" fill="url(#o91)"/><rect x="770" y="309.0" width="26" height="3.3" fill="url(#o92)"/><rect x="774" y="312.0" width="19" height="3.3" fill="url(#o93)"/><rect x="777" y="315.0" width="13" height="3.3" fill="url(#o94)"/><rect x="781" y="318.0" width="6" height="3.3" fill="url(#o95)"/></g></g>
<g clip-path="url(#tri)"><g filter="url(#vb)"><rect x="699" y="45.0" width="23" height="3.3" fill="url(#r0)"/><rect x="699" y="48.0" width="55" height="3.3" fill="url(#r1)"/><rect x="700" y="51.0" width="85" height="3.3" fill="url(#r2)"/><rect x="700" y="54.0" width="117" height="3.3" fill="url(#r3)"/><rect x="701" y="57.0" width="148" height="3.3" fill="url(#r4)"/><rect x="701" y="60.0" width="180" height="3.3" fill="url(#r5)"/><rect x="702" y="63.0" width="210" height="3.3" fill="url(#r6)"/><rect x="702" y="66.0" width="210" height="3.3" fill="url(#r7)"/><rect x="703" y="69.0" width="206" height="3.3" fill="url(#r8)"/><rect x="703" y="72.0" width="203" height="3.3" fill="url(#r9)"/><rect x="704" y="75.0" width="199" height="3.3" fill="url(#r10)"/><rect x="704" y="78.0" width="196" height="3.3" fill="url(#r11)"/><rect x="705" y="81.0" width="192" height="3.3" fill="url(#r12)"/><rect x="705" y="84.0" width="189" height="3.3" fill="url(#r13)"/><rect x="706" y="87.0" width="185" height="3.3" fill="url(#r14)"/><rect x="706" y="90.0" width="182" height="3.3" fill="url(#r15)"/><rect x="707" y="93.0" width="179" height="3.3" fill="url(#r16)"/><rect x="707" y="96.0" width="176" height="3.3" fill="url(#r17)"/><rect x="708" y="99.0" width="172" height="3.3" fill="url(#r18)"/><rect x="708" y="102.0" width="169" height="3.3" fill="url(#r19)"/><rect x="709" y="105.0" width="165" height="3.3" fill="url(#r20)"/><rect x="709" y="108.0" width="162" height="3.3" fill="url(#r21)"/><rect x="710" y="111.0" width="158" height="3.3" fill="url(#r22)"/><rect x="710" y="114.0" width="155" height="3.3" fill="url(#r23)"/><rect x="711" y="117.0" width="151" height="3.3" fill="url(#r24)"/><rect x="711" y="120.0" width="148" height="3.3" fill="url(#r25)"/><rect x="712" y="123.0" width="144" height="3.3" fill="url(#r26)"/><rect x="712" y="126.0" width="141" height="3.3" fill="url(#r27)"/><rect x="713" y="129.0" width="137" height="3.3" fill="url(#r28)"/><rect x="713" y="132.0" width="134" height="3.3" fill="url(#r29)"/><rect x="714" y="135.0" width="131" height="3.3" fill="url(#r30)"/><rect x="714" y="138.0" width="128" height="3.3" fill="url(#r31)"/><rect x="714" y="141.0" width="125" height="3.3" fill="url(#r32)"/><rect x="715" y="144.0" width="121" height="3.3" fill="url(#r33)"/><rect x="715" y="147.0" width="118" height="3.3" fill="url(#r34)"/><rect x="716" y="150.0" width="114" height="3.3" fill="url(#r35)"/><rect x="716" y="153.0" width="111" height="3.3" fill="url(#r36)"/><rect x="717" y="156.0" width="107" height="3.3" fill="url(#r37)"/><rect x="717" y="159.0" width="104" height="3.3" fill="url(#r38)"/><rect x="718" y="162.0" width="100" height="3.3" fill="url(#r39)"/><rect x="718" y="165.0" width="97" height="3.3" fill="url(#r40)"/><rect x="719" y="168.0" width="93" height="3.3" fill="url(#r41)"/><rect x="719" y="171.0" width="90" height="3.3" fill="url(#r42)"/><rect x="720" y="174.0" width="87" height="3.3" fill="url(#r43)"/><rect x="720" y="177.0" width="84" height="3.3" fill="url(#r44)"/><rect x="721" y="180.0" width="80" height="3.3" fill="url(#r45)"/><rect x="721" y="183.0" width="77" height="3.3" fill="url(#r46)"/><rect x="722" y="186.0" width="73" height="3.3" fill="url(#r47)"/><rect x="722" y="189.0" width="70" height="3.3" fill="url(#r48)"/><rect x="723" y="192.0" width="66" height="3.3" fill="url(#r49)"/><rect x="723" y="195.0" width="63" height="3.3" fill="url(#r50)"/><rect x="724" y="198.0" width="59" height="3.3" fill="url(#r51)"/><rect x="724" y="201.0" width="56" height="3.3" fill="url(#r52)"/><rect x="725" y="204.0" width="52" height="3.3" fill="url(#r53)"/><rect x="725" y="207.0" width="49" height="3.3" fill="url(#r54)"/><rect x="726" y="210.0" width="45" height="3.3" fill="url(#r55)"/><rect x="726" y="213.0" width="42" height="3.3" fill="url(#r56)"/><rect x="727" y="216.0" width="39" height="3.3" fill="url(#r57)"/><rect x="727" y="219.0" width="36" height="3.3" fill="url(#r58)"/><rect x="728" y="222.0" width="32" height="3.3" fill="url(#r59)"/><rect x="728" y="225.0" width="29" height="3.3" fill="url(#r60)"/><rect x="728" y="228.0" width="26" height="3.3" fill="url(#r61)"/><rect x="729" y="231.0" width="22" height="3.3" fill="url(#r62)"/><rect x="729" y="234.0" width="19" height="3.3" fill="url(#r63)"/><rect x="730" y="237.0" width="15" height="3.3" fill="url(#r64)"/><rect x="730" y="240.0" width="12" height="3.3" fill="url(#r65)"/><rect x="731" y="243.0" width="8" height="3.3" fill="url(#r66)"/><rect x="731" y="246.0" width="5" height="3.3" fill="url(#r67)"/></g></g></g>
<rect x="620.3" y="27.2" width="386.9" height="299.1" fill="none" stroke="#8c8c8c" stroke-width="1.1"/>
<text x="803.4" y="24.6" font-size="8.7" fill="#d2d2d2" text-anchor="middle" textLength="51.5" lengthAdjust="spacingAndGlyphs" stroke="#d2d2d2" stroke-width="0.2">CIE 1976 u'v'</text>
<rect x="619.9" y="326.3" width="1.2" height="3.2" fill="#b4b4b4"/>
<text x="620.5" y="340.9" font-size="8.5" fill="#d6d6d6" text-anchor="middle">0</text>
<rect x="617.3" y="325.7" width="3" height="1.2" fill="#b4b4b4"/>
<text x="616.3" y="330.2" font-size="8.5" fill="#d6d6d6" text-anchor="end">0</text>
<rect x="652.1" y="326.3" width="1.2" height="3.2" fill="#b4b4b4"/>
<text x="652.7" y="340.9" font-size="8.5" fill="#d6d6d6" text-anchor="middle">0,05</text>
<rect x="617.3" y="300.8" width="3" height="1.2" fill="#b4b4b4"/>
<text x="616.3" y="305.3" font-size="8.5" fill="#d6d6d6" text-anchor="end">0,05</text>
<rect x="684.3" y="326.3" width="1.2" height="3.2" fill="#b4b4b4"/>
<text x="684.9" y="340.9" font-size="8.5" fill="#d6d6d6" text-anchor="middle">0,1</text>
<rect x="617.3" y="275.9" width="3" height="1.2" fill="#b4b4b4"/>
<text x="616.3" y="280.4" font-size="8.5" fill="#d6d6d6" text-anchor="end">0,1</text>
<rect x="716.5" y="326.3" width="1.2" height="3.2" fill="#b4b4b4"/>
<text x="717.1" y="340.9" font-size="8.5" fill="#d6d6d6" text-anchor="middle">0,15</text>
<rect x="617.3" y="251.0" width="3" height="1.2" fill="#b4b4b4"/>
<text x="616.3" y="255.5" font-size="8.5" fill="#d6d6d6" text-anchor="end">0,15</text>
<rect x="748.7" y="326.3" width="1.2" height="3.2" fill="#b4b4b4"/>
<text x="749.3" y="340.9" font-size="8.5" fill="#d6d6d6" text-anchor="middle">0,2</text>
<rect x="617.3" y="226.1" width="3" height="1.2" fill="#b4b4b4"/>
<text x="616.3" y="230.6" font-size="8.5" fill="#d6d6d6" text-anchor="end">0,2</text>
<rect x="780.9" y="326.3" width="1.2" height="3.2" fill="#b4b4b4"/>
<text x="781.5" y="340.9" font-size="8.5" fill="#d6d6d6" text-anchor="middle">0,25</text>
<rect x="617.3" y="201.2" width="3" height="1.2" fill="#b4b4b4"/>
<text x="616.3" y="205.7" font-size="8.5" fill="#d6d6d6" text-anchor="end">0,25</text>
<rect x="813.1" y="326.3" width="1.2" height="3.2" fill="#b4b4b4"/>
<text x="813.7" y="340.9" font-size="8.5" fill="#d6d6d6" text-anchor="middle">0,3</text>
<rect x="617.3" y="176.3" width="3" height="1.2" fill="#b4b4b4"/>
<text x="616.3" y="180.8" font-size="8.5" fill="#d6d6d6" text-anchor="end">0,3</text>
<rect x="845.3" y="326.3" width="1.2" height="3.2" fill="#b4b4b4"/>
<text x="845.9" y="340.9" font-size="8.5" fill="#d6d6d6" text-anchor="middle">0,35</text>
<rect x="617.3" y="151.4" width="3" height="1.2" fill="#b4b4b4"/>
<text x="616.3" y="155.9" font-size="8.5" fill="#d6d6d6" text-anchor="end">0,35</text>
<rect x="877.5" y="326.3" width="1.2" height="3.2" fill="#b4b4b4"/>
<text x="878.1" y="340.9" font-size="8.5" fill="#d6d6d6" text-anchor="middle">0,4</text>
<rect x="617.3" y="126.5" width="3" height="1.2" fill="#b4b4b4"/>
<text x="616.3" y="131.0" font-size="8.5" fill="#d6d6d6" text-anchor="end">0,4</text>
<rect x="909.7" y="326.3" width="1.2" height="3.2" fill="#b4b4b4"/>
<text x="910.3" y="340.9" font-size="8.5" fill="#d6d6d6" text-anchor="middle">0,45</text>
<rect x="617.3" y="101.6" width="3" height="1.2" fill="#b4b4b4"/>
<text x="616.3" y="106.1" font-size="8.5" fill="#d6d6d6" text-anchor="end">0,45</text>
<rect x="941.9" y="326.3" width="1.2" height="3.2" fill="#b4b4b4"/>
<text x="942.5" y="340.9" font-size="8.5" fill="#d6d6d6" text-anchor="middle">0,5</text>
<rect x="617.3" y="76.7" width="3" height="1.2" fill="#b4b4b4"/>
<text x="616.3" y="81.2" font-size="8.5" fill="#d6d6d6" text-anchor="end">0,5</text>
<rect x="974.1" y="326.3" width="1.2" height="3.2" fill="#b4b4b4"/>
<text x="974.7" y="340.9" font-size="8.5" fill="#d6d6d6" text-anchor="middle">0,55</text>
<rect x="617.3" y="51.8" width="3" height="1.2" fill="#b4b4b4"/>
<text x="616.3" y="56.3" font-size="8.5" fill="#d6d6d6" text-anchor="end">0,55</text>
<rect x="696.7" y="42.2" width="7.6" height="7.6" fill="none" stroke="#f4f4f4" stroke-width="1.1"/>
<rect x="708.7" y="54.7" width="7.6" height="7.6" fill="none" stroke="#f4f4f4" stroke-width="1.1"/>
<rect x="734.4" y="50.7" width="7.6" height="7.6" fill="none" stroke="#f4f4f4" stroke-width="1.1"/>
<rect x="747.4" y="46.9" width="7.6" height="7.6" fill="none" stroke="#f4f4f4" stroke-width="1.1"/>
<rect x="765.5" y="49.5" width="7.6" height="7.6" fill="none" stroke="#f4f4f4" stroke-width="1.1"/>
<rect x="732.8" y="62.7" width="7.6" height="7.6" fill="none" stroke="#f4f4f4" stroke-width="1.1"/>
<rect x="713.3" y="83.8" width="7.6" height="7.6" fill="none" stroke="#f4f4f4" stroke-width="1.1"/>
<rect x="704.9" y="95.5" width="7.6" height="7.6" fill="none" stroke="#f4f4f4" stroke-width="1.1"/>
<rect x="708.4" y="115.9" width="7.6" height="7.6" fill="none" stroke="#f4f4f4" stroke-width="1.1"/>
<rect x="727.4" y="115.0" width="7.6" height="7.6" fill="none" stroke="#f4f4f4" stroke-width="1.1"/>
<rect x="741.6" y="118.3" width="7.6" height="7.6" fill="none" stroke="#f4f4f4" stroke-width="1.1"/>
<rect x="785.9" y="52.3" width="7.6" height="7.6" fill="none" stroke="#f4f4f4" stroke-width="1.1"/>
<rect x="830.1" y="80.4" width="7.6" height="7.6" fill="none" stroke="#f4f4f4" stroke-width="1.1"/>
<rect x="807.8" y="110.9" width="7.6" height="7.6" fill="none" stroke="#f4f4f4" stroke-width="1.1"/>
<rect x="870.3" y="70.8" width="7.6" height="7.6" fill="none" stroke="#f4f4f4" stroke-width="1.1"/>
<rect x="765.3" y="132.5" width="7.6" height="7.6" fill="none" stroke="#f4f4f4" stroke-width="1.1"/>
<rect x="729.9" y="152.1" width="7.6" height="7.6" fill="none" stroke="#f4f4f4" stroke-width="1.1"/>
<rect x="812.5" y="157.6" width="7.6" height="7.6" fill="none" stroke="#f4f4f4" stroke-width="1.1"/>
<rect x="729.9" y="187.2" width="7.6" height="7.6" fill="none" stroke="#f4f4f4" stroke-width="1.1"/>
<rect x="729.5" y="243.6" width="7.6" height="7.6" fill="none" stroke="#f4f4f4" stroke-width="1.1"/>
<rect x="906.7" y="61.9" width="7.6" height="7.6" fill="none" stroke="#f4f4f4" stroke-width="1.1"/>
<rect x="768.6" y="76.4" width="7.6" height="7.6" fill="none" stroke="#f4f4f4" stroke-width="1.1"/>
<rect x="768.6" y="69.4" width="7.6" height="7.6" fill="none" stroke="#f4f4f4" stroke-width="1.1"/>
<rect x="782.3" y="64.4" width="7.6" height="7.6" fill="none" stroke="#f4f4f4" stroke-width="1.1"/>
<rect x="794.4" y="59.3" width="7.6" height="7.6" fill="none" stroke="#f4f4f4" stroke-width="1.1"/>
<rect x="802.0" y="57.9" width="7.6" height="7.6" fill="none" stroke="#f4f4f4" stroke-width="1.1"/>
<rect x="808.8" y="61.9" width="7.6" height="7.6" fill="none" stroke="#f4f4f4" stroke-width="1.1"/>
<rect x="798.4" y="67.4" width="7.6" height="7.6" fill="none" stroke="#f4f4f4" stroke-width="1.1"/>
<rect x="815.4" y="54.9" width="7.6" height="7.6" fill="none" stroke="#f4f4f4" stroke-width="1.1"/>
<rect x="820.1" y="55.9" width="7.6" height="7.6" fill="none" stroke="#f4f4f4" stroke-width="1.1"/>
<rect x="776.2" y="69.7" width="7.6" height="7.6" fill="none" stroke="#f4f4f4" stroke-width="1.1"/>
<rect x="788.2" y="69.2" width="7.6" height="7.6" fill="none" stroke="#f4f4f4" stroke-width="1.1"/>
<circle cx="699.6" cy="45.2" r="2.5" fill="#10e010" stroke="#1a1410" stroke-width="1.1" stroke-opacity=".8"/>
<circle cx="712.5" cy="58.5" r="2.5" fill="#4a8a4c" stroke="#1a1410" stroke-width="1.1" stroke-opacity=".8"/>
<circle cx="739.6" cy="54.7" r="2.5" fill="#90b040" stroke="#1a1410" stroke-width="1.1" stroke-opacity=".8"/>
<circle cx="753.5" cy="50.1" r="2.5" fill="#e8e020" stroke="#1a1410" stroke-width="1.1" stroke-opacity=".8"/>
<circle cx="770.7" cy="53.1" r="2.5" fill="#e0c030" stroke="#1a1410" stroke-width="1.1" stroke-opacity=".8"/>
<circle cx="737.8" cy="67.8" r="2.5" fill="#506a3c" stroke="#1a1410" stroke-width="1.1" stroke-opacity=".8"/>
<circle cx="718.1" cy="87.0" r="2.5" fill="#60b8a4" stroke="#1a1410" stroke-width="1.1" stroke-opacity=".8"/>
<circle cx="708.1" cy="98.9" r="2.5" fill="#20d0e0" stroke="#1a1410" stroke-width="1.1" stroke-opacity=".8"/>
<circle cx="708.9" cy="118.2" r="2.5" fill="#0888a0" stroke="#1a1410" stroke-width="1.1" stroke-opacity=".8"/>
<circle cx="732.2" cy="116.5" r="2.5" fill="#5c78a0" stroke="#1a1410" stroke-width="1.1" stroke-opacity=".8"/>
<circle cx="746.4" cy="119.0" r="2.5" fill="#8480b4" stroke="#1a1410" stroke-width="1.1" stroke-opacity=".8"/>
<circle cx="789.7" cy="56.1" r="2.5" fill="#e0a030" stroke="#1a1410" stroke-width="1.1" stroke-opacity=".8"/>
<circle cx="833.9" cy="84.2" r="2.5" fill="#c0505c" stroke="#1a1410" stroke-width="1.1" stroke-opacity=".8"/>
<circle cx="812.0" cy="114.4" r="2.5" fill="#c05090" stroke="#1a1410" stroke-width="1.1" stroke-opacity=".8"/>
<circle cx="876.1" cy="76.6" r="2.5" fill="#a83038" stroke="#1a1410" stroke-width="1.1" stroke-opacity=".8"/>
<circle cx="771.3" cy="134.7" r="2.5" fill="#5c3c6c" stroke="#1a1410" stroke-width="1.1" stroke-opacity=".8"/>
<circle cx="733.7" cy="152.4" r="2.5" fill="#4858a8" stroke="#1a1410" stroke-width="1.1" stroke-opacity=".8"/>
<circle cx="819.5" cy="161.4" r="2.5" fill="#e020d0" stroke="#1a1410" stroke-width="1.1" stroke-opacity=".8"/>
<circle cx="733.1" cy="187.1" r="2.5" fill="#303c98" stroke="#1a1410" stroke-width="1.1" stroke-opacity=".8"/>
<circle cx="732.1" cy="240.1" r="2.5" fill="#0000e0" stroke="#1a1410" stroke-width="1.1" stroke-opacity=".8"/>
<circle cx="922.7" cy="65.7" r="2.3" fill="#e00000" stroke="#c00000" stroke-width="0.5" stroke-opacity=".8"/>
<circle cx="772.4" cy="79.2" r="2.5" fill="#f0c8b0" stroke="#1a1410" stroke-width="1.1" stroke-opacity=".8"/>
<circle cx="774.0" cy="73.2" r="2.5" fill="#f0b898" stroke="#1a1410" stroke-width="1.1" stroke-opacity=".8"/>
<circle cx="780.0" cy="73.2" r="2.5" fill="#d8a07c" stroke="#1a1410" stroke-width="1.1" stroke-opacity=".8"/>
<circle cx="783.7" cy="77.6" r="2.5" fill="#8a5a3c" stroke="#1a1410" stroke-width="1.1" stroke-opacity=".8"/>
<circle cx="785.1" cy="71.8" r="2.5" fill="#d8a078" stroke="#1a1410" stroke-width="1.1" stroke-opacity=".8"/>
<circle cx="786.1" cy="68.2" r="2.5" fill="#e0a880" stroke="#1a1410" stroke-width="1.1" stroke-opacity=".8"/>
<circle cx="788.9" cy="71.4" r="2.5" fill="#d09870" stroke="#1a1410" stroke-width="1.1" stroke-opacity=".8"/>
<circle cx="792.3" cy="73.8" r="2.5" fill="#e0a080" stroke="#1a1410" stroke-width="1.1" stroke-opacity=".8"/>
<circle cx="796.1" cy="69.2" r="2.5" fill="#c8906c" stroke="#1a1410" stroke-width="1.1" stroke-opacity=".8"/>
<circle cx="799.8" cy="64.5" r="2.5" fill="#9a6238" stroke="#1a1410" stroke-width="1.1" stroke-opacity=".8"/>
<circle cx="802.2" cy="71.6" r="2.5" fill="#f0b898" stroke="#1a1410" stroke-width="1.1" stroke-opacity=".8"/>
<circle cx="806.6" cy="62.7" r="2.5" fill="#8e5a36" stroke="#1a1410" stroke-width="1.1" stroke-opacity=".8"/>
<circle cx="812.2" cy="65.7" r="2.5" fill="#70462c" stroke="#1a1410" stroke-width="1.1" stroke-opacity=".8"/>
<circle cx="819.6" cy="59.5" r="2.5" fill="#d08040" stroke="#1a1410" stroke-width="1.1" stroke-opacity=".8"/>
<circle cx="823.9" cy="60.1" r="2.5" fill="#a06838" stroke="#1a1410" stroke-width="1.1" stroke-opacity=".8"/>
<rect x="743.6" y="89.3" width="7.4" height="7.4" fill="#fff" stroke="#0a0a0a" stroke-width="1.4"/>
<circle cx="749.3" cy="91.6" r="2.3" fill="#9a9a9a" stroke="#1a1410" stroke-width="1.1" stroke-opacity=".8"/>
<circle cx="748.6" cy="92.6" r="2.2" fill="#c8c8c8" stroke="#1a1410" stroke-width="1.1" stroke-opacity=".8"/>
<rect x="883.3" y="221.00" width="120.7" height="2.30" fill="url(#i0)"/><rect x="883.3" y="223.00" width="120.7" height="2.30" fill="url(#i1)"/><rect x="883.3" y="225.00" width="120.7" height="2.30" fill="url(#i2)"/><rect x="883.3" y="227.00" width="120.7" height="2.30" fill="url(#i3)"/><rect x="883.3" y="229.00" width="120.7" height="2.30" fill="url(#i4)"/><rect x="883.3" y="231.00" width="120.7" height="2.30" fill="url(#i5)"/><rect x="883.3" y="233.00" width="120.7" height="2.30" fill="url(#i6)"/><rect x="883.3" y="235.00" width="120.7" height="2.30" fill="url(#i7)"/><rect x="883.3" y="237.00" width="120.7" height="2.30" fill="url(#i8)"/><rect x="883.3" y="239.00" width="120.7" height="2.30" fill="url(#i9)"/><rect x="883.3" y="241.00" width="120.7" height="2.30" fill="url(#i10)"/><rect x="883.3" y="243.00" width="120.7" height="2.30" fill="url(#i11)"/><rect x="883.3" y="245.00" width="120.7" height="2.30" fill="url(#i12)"/><rect x="883.3" y="247.00" width="120.7" height="2.30" fill="url(#i13)"/><rect x="883.3" y="249.00" width="120.7" height="2.30" fill="url(#i14)"/><rect x="883.3" y="251.00" width="120.7" height="2.30" fill="url(#i15)"/><rect x="883.3" y="253.00" width="120.7" height="2.30" fill="url(#i16)"/><rect x="883.3" y="255.00" width="120.7" height="2.30" fill="url(#i17)"/><rect x="883.3" y="257.00" width="120.7" height="2.30" fill="url(#i18)"/><rect x="883.3" y="259.00" width="120.7" height="2.30" fill="url(#i19)"/><rect x="883.3" y="261.00" width="120.7" height="2.30" fill="url(#i20)"/><rect x="883.3" y="263.00" width="120.7" height="2.30" fill="url(#i21)"/><rect x="883.3" y="265.00" width="120.7" height="2.30" fill="url(#i22)"/><rect x="883.3" y="267.00" width="120.7" height="2.30" fill="url(#i23)"/><rect x="883.3" y="269.00" width="120.7" height="2.30" fill="url(#i24)"/><rect x="883.3" y="271.00" width="120.7" height="2.30" fill="url(#i25)"/><rect x="883.3" y="273.00" width="120.7" height="2.30" fill="url(#i26)"/><rect x="883.3" y="275.00" width="120.7" height="2.30" fill="url(#i27)"/><rect x="883.3" y="277.00" width="120.7" height="2.30" fill="url(#i28)"/><rect x="883.3" y="279.00" width="120.7" height="2.30" fill="url(#i29)"/><rect x="883.3" y="281.00" width="120.7" height="2.30" fill="url(#i30)"/><rect x="883.3" y="283.00" width="120.7" height="2.30" fill="url(#i31)"/><rect x="883.3" y="285.00" width="120.7" height="2.30" fill="url(#i32)"/><rect x="883.3" y="287.00" width="120.7" height="2.30" fill="url(#i33)"/><rect x="883.3" y="289.00" width="120.7" height="2.30" fill="url(#i34)"/><rect x="883.3" y="291.00" width="120.7" height="2.30" fill="url(#i35)"/><rect x="883.3" y="293.00" width="120.7" height="2.30" fill="url(#i36)"/><rect x="883.3" y="295.00" width="120.7" height="2.30" fill="url(#i37)"/><rect x="883.3" y="297.00" width="120.7" height="2.30" fill="url(#i38)"/><rect x="883.3" y="299.00" width="120.7" height="2.30" fill="url(#i39)"/>
<rect x="883.3" y="221.3" width="120.7" height="79.7" fill="none" stroke="#7a7a7a" stroke-width="1"/>
<rect x="939.4" y="257.3" width="8.8" height="7.4" fill="#fff" stroke="#0a0a0a" stroke-width="1.3"/>
<circle cx="952.4" cy="254.4" r="2.0" fill="#9a9a9a" stroke="#333" stroke-width="0.8" stroke-opacity=".8"/>
<circle cx="951.4" cy="258.0" r="2.0" fill="#b4b4b4" stroke="#333" stroke-width="0.8" stroke-opacity=".8"/>
<circle cx="950.2" cy="261.4" r="1.9" fill="#e8e8e8" stroke="#444" stroke-width="0.7" stroke-opacity=".8"/>
<rect x="852" y="307" width="154.5" height="17.6" fill="#2d2d2d"/>
<text x="853.8" y="319.8" font-size="12" fill="#ececec" textLength="141" lengthAdjust="spacingAndGlyphs">RGB Triplet: 235, 235, 235</text>
<text x="32.8" y="367" font-size="15.2" fill="#ececec" textLength="140.6" lengthAdjust="spacingAndGlyphs" stroke="#ececec" stroke-width="0.3">Avg dE2000: 1,21</text>
<text x="30" y="392" font-size="15.2" fill="#ececec" textLength="146.2" lengthAdjust="spacingAndGlyphs" stroke="#ececec" stroke-width="0.3">Max dE2000: 3,21</text>
<text x="11.2" y="420" font-size="16.5" fill="#ececec" textLength="132.2" lengthAdjust="spacingAndGlyphs" stroke="#ececec" stroke-width="0.3">Current Reading</text>
<text x="11.2" y="442.5" font-size="14.5" fill="#e8e8e8" textLength="61" lengthAdjust="spacingAndGlyphs" stroke="#e8e8e8" stroke-width="0.3">x: 0,3152</text>
<text x="106" y="442.5" font-size="14.5" fill="#e8e8e8" textLength="53.4" lengthAdjust="spacingAndGlyphs" stroke="#e8e8e8" stroke-width="0.3">y: 0,328</text>
<text x="11.2" y="467.4" font-size="14.5" fill="#e8e8e8" textLength="58.2" lengthAdjust="spacingAndGlyphs" stroke="#e8e8e8" stroke-width="0.3">fL: 30,25</text>
<text x="11.2" y="487.5" font-size="14.5" fill="#e8e8e8" textLength="96.6" lengthAdjust="spacingAndGlyphs" stroke="#e8e8e8" stroke-width="0.3">cd/m²: 103,64</text>
<clipPath id="tbc"><rect x="196.8" y="357" width="816.7" height="140"/></clipPath><g clip-path="url(#tbc)">
<rect x="196.8" y="357" width="816.7" height="15.5" fill="url(#hdr)"/>
<rect x="196.8" y="372.5" width="816.7" height="14.26" fill="#4b4b4b"/>
<text x="206.4" y="383.0" font-size="8.2" fill="#f6f6f6" textLength="44" lengthAdjust="spacingAndGlyphs" font-weight="bold" font-family='"DejaVu Sans", "Liberation Sans", sans-serif'>x: CIE31</text>
<text x="297.4" y="382.9" font-size="8.0" fill="#f0f0f0" textLength="35.0" lengthAdjust="spacingAndGlyphs" font-family='"DejaVu Sans", "Liberation Sans", sans-serif'>0,3152</text>
<text x="351.0" y="382.9" font-size="8.0" fill="#f0f0f0" textLength="35.0" lengthAdjust="spacingAndGlyphs" font-family='"DejaVu Sans", "Liberation Sans", sans-serif'>0,3163</text>
<text x="398.0" y="382.9" font-size="8.0" fill="#f0f0f0" textLength="35.0" lengthAdjust="spacingAndGlyphs" font-family='"DejaVu Sans", "Liberation Sans", sans-serif'>0,3160</text>
<text x="445.0" y="382.9" font-size="8.0" fill="#f0f0f0" textLength="35.0" lengthAdjust="spacingAndGlyphs" font-family='"DejaVu Sans", "Liberation Sans", sans-serif'>0,3160</text>
<text x="492.0" y="382.9" font-size="8.0" fill="#f0f0f0" textLength="35.0" lengthAdjust="spacingAndGlyphs" font-family='"DejaVu Sans", "Liberation Sans", sans-serif'>0,3165</text>
<text x="538.9" y="382.9" font-size="8.0" fill="#f0f0f0" textLength="35.0" lengthAdjust="spacingAndGlyphs" font-family='"DejaVu Sans", "Liberation Sans", sans-serif'>0,4125</text>
<text x="589.9" y="382.9" font-size="8.0" fill="#f0f0f0" textLength="35.0" lengthAdjust="spacingAndGlyphs" font-family='"DejaVu Sans", "Liberation Sans", sans-serif'>0,3840</text>
<text x="642.4" y="382.9" font-size="8.0" fill="#f0f0f0" textLength="35.0" lengthAdjust="spacingAndGlyphs" font-family='"DejaVu Sans", "Liberation Sans", sans-serif'>0,2480</text>
<text x="688.9" y="382.9" font-size="8.0" fill="#f0f0f0" textLength="35.0" lengthAdjust="spacingAndGlyphs" font-family='"DejaVu Sans", "Liberation Sans", sans-serif'>0,3427</text>
<text x="735.9" y="382.9" font-size="8.0" fill="#f0f0f0" textLength="35.0" lengthAdjust="spacingAndGlyphs" font-family='"DejaVu Sans", "Liberation Sans", sans-serif'>0,2704</text>
<text x="798.9" y="382.9" font-size="8.0" fill="#f0f0f0" textLength="35.0" lengthAdjust="spacingAndGlyphs" font-family='"DejaVu Sans", "Liberation Sans", sans-serif'>0,2629</text>
<text x="866.4" y="382.9" font-size="8.0" fill="#f0f0f0" textLength="35.0" lengthAdjust="spacingAndGlyphs" font-family='"DejaVu Sans", "Liberation Sans", sans-serif'>0,5250</text>
<text x="912.9" y="382.9" font-size="8.0" fill="#f0f0f0" textLength="35.0" lengthAdjust="spacingAndGlyphs" font-family='"DejaVu Sans", "Liberation Sans", sans-serif'>0,2133</text>
<text x="982.4" y="382.9" font-size="8.0" fill="#f0f0f0" textLength="35.0" lengthAdjust="spacingAndGlyphs" font-family='"DejaVu Sans", "Liberation Sans", sans-serif'>0,4773</text>
<rect x="196.8" y="386.6" width="816.7" height="14.26" fill="#828282"/>
<text x="206.4" y="397.1" font-size="8.2" fill="#f6f6f6" textLength="44" lengthAdjust="spacingAndGlyphs" font-weight="bold" font-family='"DejaVu Sans", "Liberation Sans", sans-serif'>y: CIE31</text>
<text x="297.4" y="397.0" font-size="8.0" fill="#f0f0f0" textLength="35.0" lengthAdjust="spacingAndGlyphs" font-family='"DejaVu Sans", "Liberation Sans", sans-serif'>0,3280</text>
<text x="351.0" y="397.0" font-size="8.0" fill="#f0f0f0" textLength="35.0" lengthAdjust="spacingAndGlyphs" font-family='"DejaVu Sans", "Liberation Sans", sans-serif'>0,3299</text>
<text x="398.0" y="397.0" font-size="8.0" fill="#f0f0f0" textLength="35.0" lengthAdjust="spacingAndGlyphs" font-family='"DejaVu Sans", "Liberation Sans", sans-serif'>0,3311</text>
<text x="445.0" y="397.0" font-size="8.0" fill="#f0f0f0" textLength="35.0" lengthAdjust="spacingAndGlyphs" font-family='"DejaVu Sans", "Liberation Sans", sans-serif'>0,3309</text>
<text x="492.0" y="397.0" font-size="8.0" fill="#f0f0f0" textLength="35.0" lengthAdjust="spacingAndGlyphs" font-family='"DejaVu Sans", "Liberation Sans", sans-serif'>0,3333</text>
<text x="538.9" y="397.0" font-size="8.0" fill="#f0f0f0" textLength="35.0" lengthAdjust="spacingAndGlyphs" font-family='"DejaVu Sans", "Liberation Sans", sans-serif'>0,3605</text>
<text x="589.9" y="397.0" font-size="8.0" fill="#f0f0f0" textLength="35.0" lengthAdjust="spacingAndGlyphs" font-family='"DejaVu Sans", "Liberation Sans", sans-serif'>0,3574</text>
<text x="642.4" y="397.0" font-size="8.0" fill="#f0f0f0" textLength="35.0" lengthAdjust="spacingAndGlyphs" font-family='"DejaVu Sans", "Liberation Sans", sans-serif'>0,2661</text>
<text x="688.9" y="397.0" font-size="8.0" fill="#f0f0f0" textLength="35.0" lengthAdjust="spacingAndGlyphs" font-family='"DejaVu Sans", "Liberation Sans", sans-serif'>0,4326</text>
<text x="735.9" y="397.0" font-size="8.0" fill="#f0f0f0" textLength="35.0" lengthAdjust="spacingAndGlyphs" font-family='"DejaVu Sans", "Liberation Sans", sans-serif'>0,2536</text>
<text x="798.9" y="397.0" font-size="8.0" fill="#f0f0f0" textLength="35.0" lengthAdjust="spacingAndGlyphs" font-family='"DejaVu Sans", "Liberation Sans", sans-serif'>0,3673</text>
<text x="866.4" y="397.0" font-size="8.0" fill="#f0f0f0" textLength="35.0" lengthAdjust="spacingAndGlyphs" font-family='"DejaVu Sans", "Liberation Sans", sans-serif'>0,4026</text>
<text x="912.9" y="397.0" font-size="8.0" fill="#f0f0f0" textLength="35.0" lengthAdjust="spacingAndGlyphs" font-family='"DejaVu Sans", "Liberation Sans", sans-serif'>0,1867</text>
<text x="982.4" y="397.0" font-size="8.0" fill="#f0f0f0" textLength="35.0" lengthAdjust="spacingAndGlyphs" font-family='"DejaVu Sans", "Liberation Sans", sans-serif'>0,3097</text>
<rect x="196.8" y="400.6" width="816.7" height="14.26" fill="#4b4b4b"/>
<text x="206.4" y="411.1" font-size="8.2" fill="#f6f6f6" textLength="7.4" lengthAdjust="spacingAndGlyphs" font-weight="bold" font-family='"DejaVu Sans", "Liberation Sans", sans-serif'>Y</text>
<text x="297.4" y="411.0" font-size="8.0" fill="#f0f0f0" textLength="47.6" lengthAdjust="spacingAndGlyphs" font-family='"DejaVu Sans", "Liberation Sans", sans-serif'>103,6387</text>
<text x="351.0" y="411.0" font-size="8.0" fill="#f0f0f0" textLength="41.3" lengthAdjust="spacingAndGlyphs" font-family='"DejaVu Sans", "Liberation Sans", sans-serif'>80,8799</text>
<text x="398.0" y="411.0" font-size="8.0" fill="#f0f0f0" textLength="41.3" lengthAdjust="spacingAndGlyphs" font-family='"DejaVu Sans", "Liberation Sans", sans-serif'>65,1205</text>
<text x="445.0" y="411.0" font-size="8.0" fill="#f0f0f0" textLength="41.3" lengthAdjust="spacingAndGlyphs" font-family='"DejaVu Sans", "Liberation Sans", sans-serif'>49,6120</text>
<text x="492.0" y="411.0" font-size="8.0" fill="#f0f0f0" textLength="41.3" lengthAdjust="spacingAndGlyphs" font-family='"DejaVu Sans", "Liberation Sans", sans-serif'>34,1486</text>
<text x="538.9" y="411.0" font-size="8.0" fill="#f0f0f0" textLength="35.0" lengthAdjust="spacingAndGlyphs" font-family='"DejaVu Sans", "Liberation Sans", sans-serif'>8,9152</text>
<text x="589.9" y="411.0" font-size="8.0" fill="#f0f0f0" textLength="41.3" lengthAdjust="spacingAndGlyphs" font-family='"DejaVu Sans", "Liberation Sans", sans-serif'>34,8822</text>
<text x="642.4" y="411.0" font-size="8.0" fill="#f0f0f0" textLength="41.3" lengthAdjust="spacingAndGlyphs" font-family='"DejaVu Sans", "Liberation Sans", sans-serif'>17,7734</text>
<text x="688.9" y="411.0" font-size="8.0" fill="#f0f0f0" textLength="41.3" lengthAdjust="spacingAndGlyphs" font-family='"DejaVu Sans", "Liberation Sans", sans-serif'>11,9156</text>
<text x="735.9" y="411.0" font-size="8.0" fill="#f0f0f0" textLength="41.3" lengthAdjust="spacingAndGlyphs" font-family='"DejaVu Sans", "Liberation Sans", sans-serif'>22,3905</text>
<text x="798.9" y="411.0" font-size="8.0" fill="#f0f0f0" textLength="41.3" lengthAdjust="spacingAndGlyphs" font-family='"DejaVu Sans", "Liberation Sans", sans-serif'>41,5671</text>
<text x="866.4" y="411.0" font-size="8.0" fill="#f0f0f0" textLength="41.3" lengthAdjust="spacingAndGlyphs" font-family='"DejaVu Sans", "Liberation Sans", sans-serif'>27,6765</text>
<text x="912.9" y="411.0" font-size="8.0" fill="#f0f0f0" textLength="41.3" lengthAdjust="spacingAndGlyphs" font-family='"DejaVu Sans", "Liberation Sans", sans-serif'>10,5736</text>
<text x="982.4" y="411.0" font-size="8.0" fill="#f0f0f0" textLength="41.3" lengthAdjust="spacingAndGlyphs" font-family='"DejaVu Sans", "Liberation Sans", sans-serif'>17,7675</text>
<rect x="196.8" y="414.7" width="816.7" height="14.26" fill="#828282"/>
<text x="206.4" y="425.2" font-size="8.2" fill="#f6f6f6" textLength="80" lengthAdjust="spacingAndGlyphs" font-weight="bold" font-family='"DejaVu Sans", "Liberation Sans", sans-serif'>Target x:CIE31</text>
<text x="297.4" y="425.1" font-size="8.0" fill="#f0f0f0" textLength="35.0" lengthAdjust="spacingAndGlyphs" font-family='"DejaVu Sans", "Liberation Sans", sans-serif'>0,3127</text>
<text x="351.0" y="425.1" font-size="8.0" fill="#f0f0f0" textLength="35.0" lengthAdjust="spacingAndGlyphs" font-family='"DejaVu Sans", "Liberation Sans", sans-serif'>0,3127</text>
<text x="398.0" y="425.1" font-size="8.0" fill="#f0f0f0" textLength="35.0" lengthAdjust="spacingAndGlyphs" font-family='"DejaVu Sans", "Liberation Sans", sans-serif'>0,3127</text>
<text x="445.0" y="425.1" font-size="8.0" fill="#f0f0f0" textLength="35.0" lengthAdjust="spacingAndGlyphs" font-family='"DejaVu Sans", "Liberation Sans", sans-serif'>0,3127</text>
<text x="492.0" y="425.1" font-size="8.0" fill="#f0f0f0" textLength="35.0" lengthAdjust="spacingAndGlyphs" font-family='"DejaVu Sans", "Liberation Sans", sans-serif'>0,3127</text>
<text x="538.9" y="425.1" font-size="8.0" fill="#f0f0f0" textLength="35.0" lengthAdjust="spacingAndGlyphs" font-family='"DejaVu Sans", "Liberation Sans", sans-serif'>0,4154</text>
<text x="589.9" y="425.1" font-size="8.0" fill="#f0f0f0" textLength="35.0" lengthAdjust="spacingAndGlyphs" font-family='"DejaVu Sans", "Liberation Sans", sans-serif'>0,3845</text>
<text x="642.4" y="425.1" font-size="8.0" fill="#f0f0f0" textLength="35.0" lengthAdjust="spacingAndGlyphs" font-family='"DejaVu Sans", "Liberation Sans", sans-serif'>0,2442</text>
<text x="688.9" y="425.1" font-size="8.0" fill="#f0f0f0" textLength="35.0" lengthAdjust="spacingAndGlyphs" font-family='"DejaVu Sans", "Liberation Sans", sans-serif'>0,3430</text>
<text x="735.9" y="425.1" font-size="8.0" fill="#f0f0f0" textLength="35.0" lengthAdjust="spacingAndGlyphs" font-family='"DejaVu Sans", "Liberation Sans", sans-serif'>0,2646</text>
<text x="798.9" y="425.1" font-size="8.0" fill="#f0f0f0" textLength="35.0" lengthAdjust="spacingAndGlyphs" font-family='"DejaVu Sans", "Liberation Sans", sans-serif'>0,2593</text>
<text x="866.4" y="425.1" font-size="8.0" fill="#f0f0f0" textLength="35.0" lengthAdjust="spacingAndGlyphs" font-family='"DejaVu Sans", "Liberation Sans", sans-serif'>0,5260</text>
<text x="912.9" y="425.1" font-size="8.0" fill="#f0f0f0" textLength="35.0" lengthAdjust="spacingAndGlyphs" font-family='"DejaVu Sans", "Liberation Sans", sans-serif'>0,2083</text>
<text x="982.4" y="425.1" font-size="8.0" fill="#f0f0f0" textLength="35.0" lengthAdjust="spacingAndGlyphs" font-family='"DejaVu Sans", "Liberation Sans", sans-serif'>0,4790</text>
<rect x="196.8" y="428.7" width="816.7" height="14.26" fill="#4b4b4b"/>
<text x="206.4" y="439.2" font-size="8.2" fill="#f6f6f6" textLength="80" lengthAdjust="spacingAndGlyphs" font-weight="bold" font-family='"DejaVu Sans", "Liberation Sans", sans-serif'>Target y:CIE31</text>
<text x="297.4" y="439.1" font-size="8.0" fill="#f0f0f0" textLength="35.0" lengthAdjust="spacingAndGlyphs" font-family='"DejaVu Sans", "Liberation Sans", sans-serif'>0,3290</text>
<text x="351.0" y="439.1" font-size="8.0" fill="#f0f0f0" textLength="35.0" lengthAdjust="spacingAndGlyphs" font-family='"DejaVu Sans", "Liberation Sans", sans-serif'>0,3290</text>
<text x="398.0" y="439.1" font-size="8.0" fill="#f0f0f0" textLength="35.0" lengthAdjust="spacingAndGlyphs" font-family='"DejaVu Sans", "Liberation Sans", sans-serif'>0,3290</text>
<text x="445.0" y="439.1" font-size="8.0" fill="#f0f0f0" textLength="35.0" lengthAdjust="spacingAndGlyphs" font-family='"DejaVu Sans", "Liberation Sans", sans-serif'>0,3290</text>
<text x="492.0" y="439.1" font-size="8.0" fill="#f0f0f0" textLength="35.0" lengthAdjust="spacingAndGlyphs" font-family='"DejaVu Sans", "Liberation Sans", sans-serif'>0,3290</text>
<text x="538.9" y="439.1" font-size="8.0" fill="#f0f0f0" textLength="35.0" lengthAdjust="spacingAndGlyphs" font-family='"DejaVu Sans", "Liberation Sans", sans-serif'>0,3662</text>
<text x="589.9" y="439.1" font-size="8.0" fill="#f0f0f0" textLength="35.0" lengthAdjust="spacingAndGlyphs" font-family='"DejaVu Sans", "Liberation Sans", sans-serif'>0,3580</text>
<text x="642.4" y="439.1" font-size="8.0" fill="#f0f0f0" textLength="35.0" lengthAdjust="spacingAndGlyphs" font-family='"DejaVu Sans", "Liberation Sans", sans-serif'>0,2593</text>
<text x="688.9" y="439.1" font-size="8.0" fill="#f0f0f0" textLength="35.0" lengthAdjust="spacingAndGlyphs" font-family='"DejaVu Sans", "Liberation Sans", sans-serif'>0,4398</text>
<text x="735.9" y="439.1" font-size="8.0" fill="#f0f0f0" textLength="35.0" lengthAdjust="spacingAndGlyphs" font-family='"DejaVu Sans", "Liberation Sans", sans-serif'>0,2460</text>
<text x="798.9" y="439.1" font-size="8.0" fill="#f0f0f0" textLength="35.0" lengthAdjust="spacingAndGlyphs" font-family='"DejaVu Sans", "Liberation Sans", sans-serif'>0,3624</text>
<text x="866.4" y="439.1" font-size="8.0" fill="#f0f0f0" textLength="35.0" lengthAdjust="spacingAndGlyphs" font-family='"DejaVu Sans", "Liberation Sans", sans-serif'>0,4054</text>
<text x="912.9" y="439.1" font-size="8.0" fill="#f0f0f0" textLength="35.0" lengthAdjust="spacingAndGlyphs" font-family='"DejaVu Sans", "Liberation Sans", sans-serif'>0,1783</text>
<text x="982.4" y="439.1" font-size="8.0" fill="#f0f0f0" textLength="35.0" lengthAdjust="spacingAndGlyphs" font-family='"DejaVu Sans", "Liberation Sans", sans-serif'>0,3124</text>
<rect x="196.8" y="442.8" width="816.7" height="14.26" fill="#828282"/>
<text x="206.4" y="453.3" font-size="8.2" fill="#f6f6f6" textLength="44.5" lengthAdjust="spacingAndGlyphs" font-weight="bold" font-family='"DejaVu Sans", "Liberation Sans", sans-serif'>Target Y</text>
<text x="297.4" y="453.2" font-size="8.0" fill="#f0f0f0" textLength="47.6" lengthAdjust="spacingAndGlyphs" font-family='"DejaVu Sans", "Liberation Sans", sans-serif'>103,6387</text>
<text x="351.0" y="453.2" font-size="8.0" fill="#f0f0f0" textLength="41.3" lengthAdjust="spacingAndGlyphs" font-family='"DejaVu Sans", "Liberation Sans", sans-serif'>80,3851</text>
<text x="398.0" y="453.2" font-size="8.0" fill="#f0f0f0" textLength="41.3" lengthAdjust="spacingAndGlyphs" font-family='"DejaVu Sans", "Liberation Sans", sans-serif'>64,7308</text>
<text x="445.0" y="453.2" font-size="8.0" fill="#f0f0f0" textLength="41.3" lengthAdjust="spacingAndGlyphs" font-family='"DejaVu Sans", "Liberation Sans", sans-serif'>48,7916</text>
<text x="492.0" y="453.2" font-size="8.0" fill="#f0f0f0" textLength="41.3" lengthAdjust="spacingAndGlyphs" font-family='"DejaVu Sans", "Liberation Sans", sans-serif'>33,0333</text>
<text x="538.9" y="453.2" font-size="8.0" fill="#f0f0f0" textLength="35.0" lengthAdjust="spacingAndGlyphs" font-family='"DejaVu Sans", "Liberation Sans", sans-serif'>8,3727</text>
<text x="589.9" y="453.2" font-size="8.0" fill="#f0f0f0" textLength="41.3" lengthAdjust="spacingAndGlyphs" font-family='"DejaVu Sans", "Liberation Sans", sans-serif'>33,6408</text>
<text x="642.4" y="453.2" font-size="8.0" fill="#f0f0f0" textLength="41.3" lengthAdjust="spacingAndGlyphs" font-family='"DejaVu Sans", "Liberation Sans", sans-serif'>17,0241</text>
<text x="688.9" y="453.2" font-size="8.0" fill="#f0f0f0" textLength="41.3" lengthAdjust="spacingAndGlyphs" font-family='"DejaVu Sans", "Liberation Sans", sans-serif'>11,3354</text>
<text x="735.9" y="453.2" font-size="8.0" fill="#f0f0f0" textLength="41.3" lengthAdjust="spacingAndGlyphs" font-family='"DejaVu Sans", "Liberation Sans", sans-serif'>21,6706</text>
<text x="798.9" y="453.2" font-size="8.0" fill="#f0f0f0" textLength="41.3" lengthAdjust="spacingAndGlyphs" font-family='"DejaVu Sans", "Liberation Sans", sans-serif'>41,0044</text>
<text x="866.4" y="453.2" font-size="8.0" fill="#f0f0f0" textLength="41.3" lengthAdjust="spacingAndGlyphs" font-family='"DejaVu Sans", "Liberation Sans", sans-serif'>27,1089</text>
<text x="912.9" y="453.2" font-size="8.0" fill="#f0f0f0" textLength="41.3" lengthAdjust="spacingAndGlyphs" font-family='"DejaVu Sans", "Liberation Sans", sans-serif'>10,1217</text>
<text x="982.4" y="453.2" font-size="8.0" fill="#f0f0f0" textLength="41.3" lengthAdjust="spacingAndGlyphs" font-family='"DejaVu Sans", "Liberation Sans", sans-serif'>17,1978</text>
<rect x="196.8" y="456.9" width="816.7" height="14.26" fill="#4b4b4b"/>
<text x="206.4" y="467.4" font-size="8.2" fill="#f6f6f6" textLength="46.2" lengthAdjust="spacingAndGlyphs" font-weight="bold" font-family='"DejaVu Sans", "Liberation Sans", sans-serif'>ΔE 2000</text>
<text x="297.4" y="467.3" font-size="8.0" fill="#f0f0f0" textLength="35.0" lengthAdjust="spacingAndGlyphs" font-family='"DejaVu Sans", "Liberation Sans", sans-serif'>2,6307</text>
<text x="351.0" y="467.3" font-size="8.0" fill="#f0f0f0" textLength="35.0" lengthAdjust="spacingAndGlyphs" font-family='"DejaVu Sans", "Liberation Sans", sans-serif'>2,0988</text>
<text x="398.0" y="467.3" font-size="8.0" fill="#f0f0f0" textLength="35.0" lengthAdjust="spacingAndGlyphs" font-family='"DejaVu Sans", "Liberation Sans", sans-serif'>1,4450</text>
<text x="445.0" y="467.3" font-size="8.0" fill="#f0f0f0" textLength="35.0" lengthAdjust="spacingAndGlyphs" font-family='"DejaVu Sans", "Liberation Sans", sans-serif'>1,4132</text>
<text x="492.0" y="467.3" font-size="8.0" fill="#f0f0f0" textLength="35.0" lengthAdjust="spacingAndGlyphs" font-family='"DejaVu Sans", "Liberation Sans", sans-serif'>1,7593</text>
<text x="538.9" y="467.3" font-size="8.0" fill="#f0f0f0" textLength="35.0" lengthAdjust="spacingAndGlyphs" font-family='"DejaVu Sans", "Liberation Sans", sans-serif'>1,5267</text>
<text x="589.9" y="467.3" font-size="8.0" fill="#f0f0f0" textLength="35.0" lengthAdjust="spacingAndGlyphs" font-family='"DejaVu Sans", "Liberation Sans", sans-serif'>0,8221</text>
<text x="642.4" y="467.3" font-size="8.0" fill="#f0f0f0" textLength="35.0" lengthAdjust="spacingAndGlyphs" font-family='"DejaVu Sans", "Liberation Sans", sans-serif'>1,3731</text>
<text x="688.9" y="467.3" font-size="8.0" fill="#f0f0f0" textLength="35.0" lengthAdjust="spacingAndGlyphs" font-family='"DejaVu Sans", "Liberation Sans", sans-serif'>1,0377</text>
<text x="735.9" y="467.3" font-size="8.0" fill="#f0f0f0" textLength="35.0" lengthAdjust="spacingAndGlyphs" font-family='"DejaVu Sans", "Liberation Sans", sans-serif'>1,5290</text>
<text x="798.9" y="467.3" font-size="8.0" fill="#f0f0f0" textLength="35.0" lengthAdjust="spacingAndGlyphs" font-family='"DejaVu Sans", "Liberation Sans", sans-serif'>1,1834</text>
<text x="866.4" y="467.3" font-size="8.0" fill="#f0f0f0" textLength="35.0" lengthAdjust="spacingAndGlyphs" font-family='"DejaVu Sans", "Liberation Sans", sans-serif'>0,8989</text>
<text x="912.9" y="467.3" font-size="8.0" fill="#f0f0f0" textLength="35.0" lengthAdjust="spacingAndGlyphs" font-family='"DejaVu Sans", "Liberation Sans", sans-serif'>0,9947</text>
<text x="982.4" y="467.3" font-size="8.0" fill="#f0f0f0" textLength="35.0" lengthAdjust="spacingAndGlyphs" font-family='"DejaVu Sans", "Liberation Sans", sans-serif'>0,9470</text>
<rect x="196.8" y="470.9" width="816.7" height="14.26" fill="#828282"/>
<text x="206.4" y="481.4" font-size="8.2" fill="#f6f6f6" textLength="36.4" lengthAdjust="spacingAndGlyphs" font-weight="bold" font-family='"DejaVu Sans", "Liberation Sans", sans-serif'>ΔE ITP</text>
<text x="297.4" y="481.3" font-size="8.0" fill="#f0f0f0" textLength="35.0" lengthAdjust="spacingAndGlyphs" font-family='"DejaVu Sans", "Liberation Sans", sans-serif'>1,9426</text>
<text x="351.0" y="481.3" font-size="8.0" fill="#f0f0f0" textLength="35.0" lengthAdjust="spacingAndGlyphs" font-family='"DejaVu Sans", "Liberation Sans", sans-serif'>2,1622</text>
<text x="398.0" y="481.3" font-size="8.0" fill="#f0f0f0" textLength="35.0" lengthAdjust="spacingAndGlyphs" font-family='"DejaVu Sans", "Liberation Sans", sans-serif'>1,8089</text>
<text x="445.0" y="481.3" font-size="8.0" fill="#f0f0f0" textLength="35.0" lengthAdjust="spacingAndGlyphs" font-family='"DejaVu Sans", "Liberation Sans", sans-serif'>2,0880</text>
<text x="492.0" y="481.3" font-size="8.0" fill="#f0f0f0" textLength="35.0" lengthAdjust="spacingAndGlyphs" font-family='"DejaVu Sans", "Liberation Sans", sans-serif'>2,9333</text>
<text x="538.9" y="481.3" font-size="8.0" fill="#f0f0f0" textLength="35.0" lengthAdjust="spacingAndGlyphs" font-family='"DejaVu Sans", "Liberation Sans", sans-serif'>4,0988</text>
<text x="589.9" y="481.3" font-size="8.0" fill="#f0f0f0" textLength="35.0" lengthAdjust="spacingAndGlyphs" font-family='"DejaVu Sans", "Liberation Sans", sans-serif'>2,4076</text>
<text x="642.4" y="481.3" font-size="8.0" fill="#f0f0f0" textLength="35.0" lengthAdjust="spacingAndGlyphs" font-family='"DejaVu Sans", "Liberation Sans", sans-serif'>3,4524</text>
<text x="688.9" y="481.3" font-size="8.0" fill="#f0f0f0" textLength="35.0" lengthAdjust="spacingAndGlyphs" font-family='"DejaVu Sans", "Liberation Sans", sans-serif'>3,5960</text>
<text x="735.9" y="481.3" font-size="8.0" fill="#f0f0f0" textLength="35.0" lengthAdjust="spacingAndGlyphs" font-family='"DejaVu Sans", "Liberation Sans", sans-serif'>3,8405</text>
<text x="798.9" y="481.3" font-size="8.0" fill="#f0f0f0" textLength="35.0" lengthAdjust="spacingAndGlyphs" font-family='"DejaVu Sans", "Liberation Sans", sans-serif'>2,3014</text>
<text x="866.4" y="481.3" font-size="8.0" fill="#f0f0f0" textLength="35.0" lengthAdjust="spacingAndGlyphs" font-family='"DejaVu Sans", "Liberation Sans", sans-serif'>2,3175</text>
<text x="912.9" y="481.3" font-size="8.0" fill="#f0f0f0" textLength="35.0" lengthAdjust="spacingAndGlyphs" font-family='"DejaVu Sans", "Liberation Sans", sans-serif'>4,2576</text>
<text x="982.4" y="481.3" font-size="8.0" fill="#f0f0f0" textLength="35.0" lengthAdjust="spacingAndGlyphs" font-family='"DejaVu Sans", "Liberation Sans", sans-serif'>2,5575</text>
<text x="306.79999999999995" y="368.1" font-size="8.0" fill="#f2f2f2" textLength="29.5" lengthAdjust="spacingAndGlyphs" font-family='"DejaVu Sans", "Liberation Sans", sans-serif' stroke="#f2f2f2" stroke-width="0.3">White</text>
<text x="353.0" y="368.1" font-size="8.0" fill="#f2f2f2" textLength="37.5" lengthAdjust="spacingAndGlyphs" font-family='"DejaVu Sans", "Liberation Sans", sans-serif' stroke="#f2f2f2" stroke-width="0.3">Gray 80</text>
<text x="400.0" y="368.1" font-size="8.0" fill="#f2f2f2" textLength="37.5" lengthAdjust="spacingAndGlyphs" font-family='"DejaVu Sans", "Liberation Sans", sans-serif' stroke="#f2f2f2" stroke-width="0.3">Gray 65</text>
<text x="447.0" y="368.1" font-size="8.0" fill="#f2f2f2" textLength="37.5" lengthAdjust="spacingAndGlyphs" font-family='"DejaVu Sans", "Liberation Sans", sans-serif' stroke="#f2f2f2" stroke-width="0.3">Gray 50</text>
<text x="494.0" y="368.1" font-size="8.0" fill="#f2f2f2" textLength="37.5" lengthAdjust="spacingAndGlyphs" font-family='"DejaVu Sans", "Liberation Sans", sans-serif' stroke="#f2f2f2" stroke-width="0.3">Gray 35</text>
<text x="538.9" y="368.1" font-size="8.0" fill="#f2f2f2" textLength="45.9" lengthAdjust="spacingAndGlyphs" font-family='"DejaVu Sans", "Liberation Sans", sans-serif' stroke="#f2f2f2" stroke-width="0.3">Dark Skin</text>
<text x="589.9" y="368.1" font-size="8.0" fill="#f2f2f2" textLength="46.4" lengthAdjust="spacingAndGlyphs" font-family='"DejaVu Sans", "Liberation Sans", sans-serif' stroke="#f2f2f2" stroke-width="0.3">Light Skin</text>
<text x="642.4" y="368.1" font-size="8.0" fill="#f2f2f2" textLength="40.9" lengthAdjust="spacingAndGlyphs" font-family='"DejaVu Sans", "Liberation Sans", sans-serif' stroke="#f2f2f2" stroke-width="0.3">Blue Sky</text>
<text x="692.4" y="368.1" font-size="8.0" fill="#f2f2f2" textLength="34.9" lengthAdjust="spacingAndGlyphs" font-family='"DejaVu Sans", "Liberation Sans", sans-serif' stroke="#f2f2f2" stroke-width="0.3">Foliage</text>
<text x="735.9" y="368.1" font-size="8.0" fill="#f2f2f2" textLength="57.4" lengthAdjust="spacingAndGlyphs" font-family='"DejaVu Sans", "Liberation Sans", sans-serif' stroke="#f2f2f2" stroke-width="0.3">Blue Flower</text>
<text x="798.9" y="368.1" font-size="8.0" fill="#f2f2f2" textLength="61.9" lengthAdjust="spacingAndGlyphs" font-family='"DejaVu Sans", "Liberation Sans", sans-serif' stroke="#f2f2f2" stroke-width="0.3">Bluish Green</text>
<text x="869.4" y="368.1" font-size="8.0" fill="#f2f2f2" textLength="35.4" lengthAdjust="spacingAndGlyphs" font-family='"DejaVu Sans", "Liberation Sans", sans-serif' stroke="#f2f2f2" stroke-width="0.3">Orange</text>
<text x="912.9" y="368.1" font-size="8.0" fill="#f2f2f2" textLength="64.4" lengthAdjust="spacingAndGlyphs" font-family='"DejaVu Sans", "Liberation Sans", sans-serif' stroke="#f2f2f2" stroke-width="0.3">Purplish Blue</text>
<text x="982.4" y="368.1" font-size="8.0" fill="#f2f2f2" textLength="66.60000000000001" lengthAdjust="spacingAndGlyphs" font-family='"DejaVu Sans", "Liberation Sans", sans-serif' stroke="#f2f2f2" stroke-width="0.3">Moderate Red</text>
<rect x="196.8" y="485.0" width="816.7" height="8.8" fill="#6b6b6b"/>
<rect x="196.8" y="485.0" width="11.5" height="8.8" fill="#787878"/><rect x="1002.0" y="485.0" width="11.5" height="8.8" fill="#787878"/>
<rect x="210.3" y="485.6" width="258" height="7.6" rx="3.8" fill="#434343"/>
<path d="M200.4 489.4l3.6-3.1v6.2z" fill="#2c2c2c"/><path d="M1009.9 489.4l-3.6-3.1v6.2z" fill="#2c2c2c"/>
<rect x="196.4" y="357" width="1" height="136.8" fill="#1c1c1c"/>
</g>
<rect x="0" y="496.6" width="1024" height="1.4" fill="#1e1e1e"/>
<rect x="25.0" y="496.8" width="38.5" height="1.2" fill="#4e4e4e"/>
<rect x="68.0" y="496.8" width="38.5" height="1.2" fill="#4e4e4e"/>
<rect x="111.1" y="496.8" width="38.5" height="1.2" fill="#4e4e4e"/>
<rect x="154.1" y="496.8" width="38.5" height="1.2" fill="#4e4e4e"/>
<rect x="197.2" y="496.8" width="38.5" height="1.2" fill="#4e4e4e"/>
<rect x="240.2" y="496.8" width="38.5" height="1.2" fill="#4e4e4e"/>
<rect x="283.3" y="496.8" width="38.5" height="1.2" fill="#4e4e4e"/>
<rect x="326.3" y="496.8" width="38.5" height="1.2" fill="#4e4e4e"/>
<rect x="369.4" y="496.8" width="38.5" height="1.2" fill="#4e4e4e"/>
<rect x="412.4" y="496.8" width="38.5" height="1.2" fill="#4e4e4e"/>
<rect x="455.5" y="496.8" width="38.5" height="1.2" fill="#4e4e4e"/>
<rect x="498.5" y="496.8" width="38.5" height="1.2" fill="#4e4e4e"/>
<rect x="541.6" y="496.8" width="38.5" height="1.2" fill="#4e4e4e"/>
<rect x="584.6" y="496.8" width="38.5" height="1.2" fill="#4e4e4e"/>
<rect x="627.7" y="496.8" width="38.5" height="1.2" fill="#4e4e4e"/>
<rect x="670.8" y="496.8" width="38.5" height="1.2" fill="#4e4e4e"/>
<rect x="713.8" y="496.8" width="38.5" height="1.2" fill="#4e4e4e"/>
<rect x="756.8" y="496.8" width="38.5" height="1.2" fill="#4e4e4e"/>
<rect x="799.9" y="496.8" width="38.5" height="1.2" fill="#4e4e4e"/>
<rect x="842.9" y="496.8" width="38.5" height="1.2" fill="#4e4e4e"/>
<rect x="886.0" y="496.8" width="38.5" height="1.2" fill="#4e4e4e"/>
<rect x="929.0" y="496.8" width="38.5" height="1.2" fill="#4e4e4e"/>
<rect x="972.1" y="496.8" width="38.5" height="1.2" fill="#4e4e4e"/>
<rect x="1015.1" y="496.8" width="38.5" height="1.2" fill="#4e4e4e"/>
</g></svg></body></html>
